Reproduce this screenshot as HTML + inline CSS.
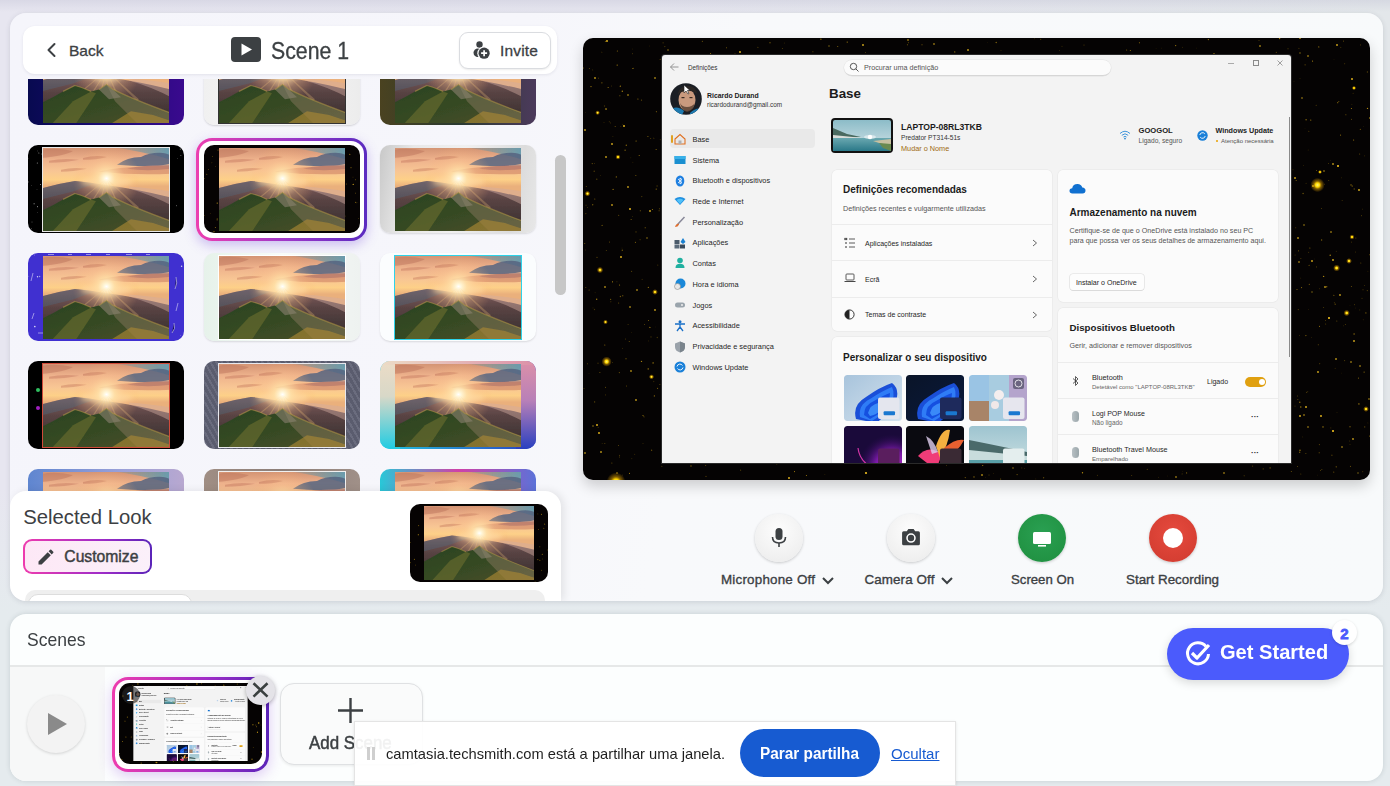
<!DOCTYPE html>
<html><head><meta charset="utf-8">
<style>
*{box-sizing:border-box;margin:0;padding:0}
html,body{width:1390px;height:786px;overflow:hidden}
body{font-family:"Liberation Sans",sans-serif;background:linear-gradient(180deg,rgba(190,190,210,.35) 0px,rgba(190,190,210,0) 12px),linear-gradient(180deg,rgba(230,237,240,0) 0%,rgba(230,237,240,0) 62%,#e5ebee 78%),linear-gradient(90deg,#e7e6f0 0%,#e6e6ef 45%,#e3e7ea 100%);position:relative;color:#3c4043}
.abs{position:absolute}
#main{position:absolute;left:10px;top:13px;width:1373px;height:588px;border-radius:16px;background:linear-gradient(100deg,#f5f5fb 0%,#f6f6fb 35%,#f8f9fb 50%,#f8fafb 100%);box-shadow:0 1px 5px rgba(60,70,90,.16)}
#hdr{position:absolute;left:23px;top:26px;width:534px;height:48px;border-radius:12px;background:#fff;box-shadow:0 1px 3px rgba(60,60,90,.10)}
#grid{position:absolute;left:10px;top:79px;width:552px;height:412px;overflow:hidden}
.th{position:absolute;width:156px;height:88px;border-radius:10px;overflow:hidden}
.th svg.img{position:absolute;left:15px;top:2.5px;width:126px;height:83px}
#scroll{position:absolute;left:555px;top:155px;width:11px;height:140px;border-radius:6px;background:#c7c7c7}
#sel{position:absolute;left:10px;top:491px;width:551px;height:110px;border-radius:16px 16px 0 16px;background:#fff;box-shadow:3px 0 9px rgba(0,0,0,.09)}
#frame{position:absolute;left:583px;top:38px;width:787px;height:442px;border-radius:10px;background:#050303;overflow:hidden;box-shadow:0 6px 14px rgba(0,0,0,.18)}
.ctl{position:absolute;width:48px;height:48px;border-radius:50%}
.lbl{position:absolute;font-size:13px;color:#3c4043;white-space:nowrap;-webkit-text-stroke:0.35px #3c4043}
#scenes{position:absolute;left:10px;top:614px;width:1373px;height:167px;border-radius:16px;background:#fcfefe;box-shadow:0 0 5px rgba(40,60,70,.16);overflow:hidden}
.mini #win div,.mini div{font-weight:bold !important}
</style></head><body>
<svg width="0" height="0" style="position:absolute">
<defs>
<filter id="soft" x="-5%" y="-5%" width="110%" height="110%"><feGaussianBlur stdDeviation="0.5"/></filter>
<filter id="soft2" x="-30%" y="-50%" width="160%" height="200%"><feGaussianBlur stdDeviation="2.5"/></filter>
<linearGradient id="gsky" x1="0" y1="0" x2="0" y2="1">
<stop offset="0" stop-color="#d49474"/><stop offset="0.14" stop-color="#eeb28c"/><stop offset="0.28" stop-color="#f8c694"/><stop offset="0.38" stop-color="#fdd088"/><stop offset="0.46" stop-color="#eab07c"/></linearGradient>
<radialGradient id="gsun" cx="0.5" cy="0.5" r="0.5"><stop offset="0" stop-color="#ffffff"/><stop offset="0.08" stop-color="#fff6d8"/><stop offset="0.25" stop-color="#ffe0a8" stop-opacity="0.8"/><stop offset="0.55" stop-color="#ffc890" stop-opacity="0.3"/><stop offset="1" stop-color="#ffb070" stop-opacity="0"/></radialGradient>
<linearGradient id="gfar" x1="0" y1="0" x2="0" y2="1"><stop offset="0" stop-color="#846060"/><stop offset="0.35" stop-color="#5a4444"/><stop offset="1" stop-color="#302a2a"/></linearGradient>
<linearGradient id="gfg" x1="0" y1="0" x2="1" y2="1"><stop offset="0" stop-color="#2a4222"/><stop offset="0.5" stop-color="#364a24"/><stop offset="1" stop-color="#50502a"/></linearGradient>
<linearGradient id="gtl" x1="0" y1="0" x2="1" y2="0"><stop offset="0" stop-color="#4f8aa0" stop-opacity="0"/><stop offset="1" stop-color="#5a9db5" stop-opacity="0.9"/></linearGradient>
<symbol id="sunset" viewBox="0 0 126 84" preserveAspectRatio="none">
<rect width="126" height="84" fill="url(#gsky)"/>
<g filter="url(#soft)">
<path d="M60 -2H128V12Q100 3 60 -2Z" fill="url(#gtl)"/>
<path d="M74 17Q84 9 98 9Q108 4 120 5Q126 6 128 8V16Q110 20 74 17Z" fill="#566480" opacity="0.85"/>
<path d="M84 21Q100 17 128 17V21Q104 24 84 21Z" fill="#8a6a78" opacity="0.5"/>
<path d="M-2 2Q12 -1 30 3Q22 8 -2 10Z" fill="#b86e58" opacity="0.45"/>
<path d="M6 13Q20 10 36 12Q22 15 6 15Z" fill="#c47860" opacity="0.45"/>
<path d="M40 10Q52 7 64 9Q54 12 40 12Z" fill="#b86c56" opacity="0.45"/>
<path d="M56 24Q80 18 128 18V26Q94 28 56 24Z" fill="#c06a52" opacity="0.45"/>
<path d="M18 22Q30 19 44 21Q30 24 18 24Z" fill="#c07458" opacity="0.4"/>
</g>
<g filter="url(#soft)">
<path d="M-2 41Q16 36 32 33.5Q48 35 63 37.5Q90 41 128 50V86H-2Z" fill="url(#gfar)"/>
<path d="M-2 41Q16 36 32 33.5Q44 34.5 52 36L30 44L-2 52Z" fill="#50687c" opacity="0.4"/>
<path d="M86 39Q110 41 128 44V58Q110 48 86 41Z" fill="#d0aaa0" opacity="0.45"/>
</g>
<g filter="url(#soft2)"><ellipse cx="63.5" cy="34" rx="26" ry="4" fill="#ffe0a8" opacity="0.8"/></g>
<circle cx="63.5" cy="31" r="34" fill="url(#gsun)"/>
<path d="M63.5 31L40 66L43 66Z M63.5 31L52 68L55 68Z M63.5 31L64 70L67 70Z M63.5 31L78 68L81 67Z M63.5 31L94 62L96 60Z M63.5 31L30 58L31 60Z" fill="#ffcc80" opacity="0.25"/>
<g filter="url(#soft)">
<path d="M-2 64Q10 58 20 52L32 46Q40 48 48 52L56 50L63.5 45L70 50Q90 60 128 74V86H-2Z" fill="url(#gfg)"/>
<path d="M63.5 45L70 50Q90 60 128 74V86L96 86L72 62Z" fill="#7e7258" opacity="0.55"/>
<path d="M56 50L63.5 45L70 50L78 58L66 60Z" fill="#8a8270" opacity="0.6"/>
<path d="M8 86L30 62L48 52L53 54L32 86Z" fill="#8a8232" opacity="0.4"/>
<path d="M66 86L88 72L110 76L128 82V86Z" fill="#a88634" opacity="0.65"/>
<path d="M20 52L32 46Q40 48 48 52M56 50L63.5 45L70 50Q90 60 128 74" fill="none" stroke="#c0a048" stroke-width="1.2" opacity="0.5"/>
</g>
</symbol>
</defs>
</svg>
<div id="main"></div><div class="abs" style="left:10px;top:13px;width:1373px;height:588px;border-radius:16px;overflow:hidden"><div class="abs" style="left:-10px;top:-13px;width:1390px;height:786px"><div id="hdr"></div>
<svg class="abs" style="left:44.5px;top:42px" width="14" height="16" viewBox="0 0 14 16"><path d="M9.5 2L3.5 8L9.5 14" fill="none" stroke="#3c4043" stroke-width="2" stroke-linecap="round" stroke-linejoin="round"/></svg>
<div class="abs" style="left:69px;top:42.5px;font-size:15.55px;line-height:1;font-weight:normal;color:#3c4043;white-space:nowrap;-webkit-text-stroke:0.3px #3c4043;">Back</div>
<div class="abs" style="left:231px;top:37px;width:30px;height:25px;border-radius:4px;background:#3c4043"></div>
<svg class="abs" style="left:231px;top:37px" width="30" height="25" viewBox="0 0 30 25"><path d="M10.5 6.5L21 12.5L10.5 18.5Z" fill="#fff"/></svg>
<div class="abs" style="left:270.5px;top:39.8px;font-size:23.00px;line-height:1;font-weight:normal;color:#3c4043;white-space:nowrap;transform:scaleX(0.925);transform-origin:0 0;-webkit-text-stroke:0.3px #3c4043;">Scene 1</div>
<div class="abs" style="left:459px;top:32px;width:92px;height:37px;border-radius:9px;border:1px solid #dadce0;background:#fff;box-shadow:0 1px 2px rgba(0,0,0,.08)"></div>
<svg class="abs" style="left:470px;top:40px" width="20" height="20" viewBox="0 0 20 20"><circle cx="9.5" cy="4.5" r="3.2" fill="#3c4043"/><circle cx="7.8" cy="12.8" r="4.3" fill="#3c4043"/><circle cx="14.1" cy="13.2" r="6.8" fill="#fcfcfd"/><circle cx="14.1" cy="13.2" r="5.6" fill="#3c4043"/><path d="M14.1 10.2V16.2M11.1 13.2H17.1" stroke="#fff" stroke-width="1.7"/></svg>
<div class="abs" style="left:500px;top:42.6px;font-size:15.5px;line-height:1;font-weight:normal;color:#3c4043;white-space:nowrap;-webkit-text-stroke:0.3px #3c4043;letter-spacing:0.15px;">Invite</div>
<div id="grid"><div class="th" style="left:18px;top:-42px;background:linear-gradient(90deg,#080a50,#1c0a78 55%,#3a0a8e);"><svg class="img" viewBox="0 0 126 84" preserveAspectRatio="none"><use href="#sunset"/></svg></div><div class="th" style="left:194px;top:-42px;background:linear-gradient(90deg,#f0f0f0,#fafafa 50%,#ececec);box-shadow:0 1px 2px rgba(0,0,0,.15);"><div class="abs" style="left:14px;top:1.5px;width:128px;height:85px;background:#333"></div><svg class="img" viewBox="0 0 126 84" preserveAspectRatio="none"><use href="#sunset"/></svg></div><div class="th" style="left:370px;top:-42px;background:linear-gradient(90deg,#4a4220,#2a3a30 50%,#4c3a5c);"><svg class="img" viewBox="0 0 126 84" preserveAspectRatio="none"><use href="#sunset"/></svg></div><div class="th" style="left:18px;top:66px;background:#000;"><svg class="abs" style="left:0;top:0" width="156" height="88"><circle cx="9.0" cy="44.7" r="0.31" fill="#fff" opacity="0.66"/><circle cx="10.9" cy="8.0" r="0.43" fill="#fff" opacity="0.90"/><circle cx="152.3" cy="4.1" r="0.56" fill="#fff" opacity="0.57"/><circle cx="9.3" cy="18.1" r="0.50" fill="#fff" opacity="0.66"/><circle cx="152.9" cy="10.4" r="0.43" fill="#fff" opacity="0.85"/><circle cx="6.1" cy="58.8" r="0.53" fill="#fff" opacity="0.74"/><circle cx="9.5" cy="61.7" r="0.49" fill="#fff" opacity="1.00"/><circle cx="3.5" cy="40.6" r="0.35" fill="#fff" opacity="0.47"/><circle cx="9.2" cy="67.6" r="0.34" fill="#fff" opacity="0.55"/><circle cx="12.6" cy="39.5" r="0.46" fill="#fff" opacity="0.93"/><circle cx="149.4" cy="13.3" r="0.35" fill="#fff" opacity="0.54"/><circle cx="0.6" cy="36.9" r="0.41" fill="#fff" opacity="0.74"/><circle cx="148.7" cy="60.8" r="0.45" fill="#fff" opacity="0.77"/><circle cx="9.7" cy="5.9" r="0.36" fill="#fff" opacity="0.50"/><circle cx="0.0" cy="13.3" r="0.33" fill="#fff" opacity="0.62"/><circle cx="4.0" cy="76.9" r="0.48" fill="#fff" opacity="0.49"/><circle cx="13.4" cy="9.0" r="0.40" fill="#fff" opacity="0.56"/><circle cx="3.6" cy="83.7" r="0.46" fill="#fff" opacity="0.49"/></svg><div class="abs" style="left:14px;top:1.5px;width:128px;height:85px;background:#e8e8e8"></div><svg class="img" viewBox="0 0 126 84" preserveAspectRatio="none"><use href="#sunset"/></svg></div><div class="abs" style="left:186px;top:59px;width:171px;height:103px;border-radius:16px;padding:3px;background:linear-gradient(90deg,#ec3fb0,#9b37c8 55%,#5b2bc0);box-shadow:0 4px 12px rgba(120,80,220,.35)"><div style="width:100%;height:100%;border-radius:13px;background:#fff"></div></div><div class="th" style="left:194px;top:66px;background:#060303;"><svg class="abs" style="left:0;top:0" width="156" height="88"><circle cx="4.4" cy="24.6" r="0.38" fill="#e0b020" opacity="0.82"/><circle cx="149.2" cy="39.4" r="0.58" fill="#e0b020" opacity="0.99"/><circle cx="149.0" cy="32.1" r="0.37" fill="#e0b020" opacity="0.54"/><circle cx="13.2" cy="58.1" r="0.57" fill="#e0b020" opacity="0.87"/><circle cx="151.6" cy="34.8" r="0.42" fill="#e0b020" opacity="0.97"/><circle cx="141.2" cy="71.0" r="0.34" fill="#e0b020" opacity="0.90"/><circle cx="152.9" cy="57.8" r="0.41" fill="#e0b020" opacity="0.73"/><circle cx="151.5" cy="57.2" r="0.46" fill="#e0b020" opacity="0.96"/><circle cx="0.6" cy="70.3" r="0.35" fill="#e0b020" opacity="0.68"/><circle cx="142.3" cy="39.0" r="0.48" fill="#e0b020" opacity="0.70"/><circle cx="147.0" cy="22.8" r="0.47" fill="#e0b020" opacity="0.97"/><circle cx="11.3" cy="21.2" r="0.32" fill="#e0b020" opacity="0.80"/><circle cx="154.4" cy="73.3" r="0.35" fill="#e0b020" opacity="0.66"/><circle cx="2.8" cy="29.2" r="0.49" fill="#e0b020" opacity="0.71"/><circle cx="10.0" cy="86.7" r="0.54" fill="#e0b020" opacity="0.98"/><circle cx="6.2" cy="68.6" r="0.38" fill="#e0b020" opacity="0.48"/><circle cx="14.0" cy="5.1" r="0.51" fill="#e0b020" opacity="0.66"/><circle cx="11.3" cy="82.6" r="0.49" fill="#e0b020" opacity="0.88"/><circle cx="13.1" cy="75.3" r="0.32" fill="#e0b020" opacity="0.92"/><circle cx="7.9" cy="17.8" r="0.39" fill="#e0b020" opacity="0.58"/><circle cx="145.8" cy="9.4" r="0.55" fill="#e0b020" opacity="0.66"/><circle cx="8.5" cy="11.4" r="0.32" fill="#e0b020" opacity="0.84"/><circle cx="13.2" cy="74.0" r="0.56" fill="#e0b020" opacity="0.80"/><circle cx="151.7" cy="48.1" r="0.37" fill="#e0b020" opacity="0.98"/><circle cx="0.2" cy="33.6" r="0.44" fill="#e0b020" opacity="0.70"/></svg><svg class="img" viewBox="0 0 126 84" preserveAspectRatio="none"><use href="#sunset"/></svg></div><div class="th" style="left:370px;top:66px;background:linear-gradient(100deg,#c8c8c8,#e8e8e8 20%,#f0f0f0 50%,#dcdcdc 85%,#e8e8e8);box-shadow:0 1px 2px rgba(0,0,0,.12);"><svg class="img" viewBox="0 0 126 84" preserveAspectRatio="none"><use href="#sunset"/></svg></div><div class="th" style="left:18px;top:174px;background:#4030d0;"><svg class="abs" style="left:0;top:0" width="156" height="88"><circle cx="0.8" cy="23.2" r="0.35" fill="#fff" opacity="0.64"/><circle cx="6.5" cy="2.0" r="0.48" fill="#fff" opacity="0.54"/><circle cx="153.6" cy="13.2" r="0.73" fill="#fff" opacity="0.79"/><circle cx="6.8" cy="73.5" r="0.84" fill="#fff" opacity="0.78"/><circle cx="11.6" cy="23.4" r="0.74" fill="#fff" opacity="0.52"/><circle cx="9.5" cy="23.7" r="0.70" fill="#fff" opacity="0.82"/><circle cx="152.6" cy="82.4" r="0.31" fill="#fff" opacity="0.68"/><path d="M20 1.5H26M40 1.5H44M58 1.5H63M78 1.5H82M98 1.5H104M118 1.5H122M5 20L3 28M148 24Q150 30 147 36M150 50L148 58M146 70Q148 76 144 80M6 60L4 66M10 80H16" stroke="#fff" stroke-width="0.8" opacity="0.6"/></svg><svg class="img" viewBox="0 0 126 84" preserveAspectRatio="none"><use href="#sunset"/></svg></div><div class="th" style="left:194px;top:174px;background:linear-gradient(90deg,#e6f2ea,#f8fbf9 50%,#eef2f0);box-shadow:0 1px 2px rgba(0,0,0,.12);"><div class="abs" style="left:14px;top:1.5px;width:128px;height:85px;background:#fff"></div><svg class="img" viewBox="0 0 126 84" preserveAspectRatio="none"><use href="#sunset"/></svg></div><div class="th" style="left:370px;top:174px;background:#fbfdfe;box-shadow:0 1px 2px rgba(0,0,0,.12);"><div class="abs" style="left:14px;top:1.5px;width:128px;height:85px;background:#2ed3ea"></div><svg class="img" viewBox="0 0 126 84" preserveAspectRatio="none"><use href="#sunset"/></svg></div><div class="th" style="left:18px;top:282px;background:#000;"><div class="abs" style="left:8px;top:27px;width:4px;height:4px;border-radius:2px;background:#30c060"></div><div class="abs" style="left:8px;top:45px;width:4px;height:4px;border-radius:2px;background:#a020c0"></div><div class="abs" style="left:14px;top:1.5px;width:128px;height:85px;background:#d04a3a"></div><svg class="img" viewBox="0 0 126 84" preserveAspectRatio="none"><use href="#sunset"/></svg></div><div class="th" style="left:194px;top:282px;background:repeating-linear-gradient(60deg,#5a5c6e 0 3px,#6a6c7e 3px 5px);"><div class="abs" style="left:14px;top:1.5px;width:128px;height:85px;background:#e8e8ee"></div><svg class="img" viewBox="0 0 126 84" preserveAspectRatio="none"><use href="#sunset"/></svg></div><div class="th" style="left:370px;top:282px;background:linear-gradient(90deg,#22c8e0,#2a40c0);"><div class="abs" style="left:0;top:0;width:20px;height:88px;background:linear-gradient(180deg,#ecdcc6 0%,#d8d8c8 40%,#20cce2 100%)"></div><div class="abs" style="left:136px;top:0;width:20px;height:88px;background:linear-gradient(180deg,#dc90a8 0%,#b880b8 45%,#2a40c0 100%)"></div><div class="abs" style="left:0;top:0;width:156px;height:4px;background:linear-gradient(90deg,#ecdcc6,#dc90a8)"></div><svg class="img" viewBox="0 0 126 84" preserveAspectRatio="none"><use href="#sunset"/></svg></div><div class="th" style="left:18px;top:390px;background:linear-gradient(90deg,#5f86d0,#9aa0d8 60%,#b8a8d0);"><svg class="img" viewBox="0 0 126 84" preserveAspectRatio="none"><use href="#sunset"/></svg></div><div class="th" style="left:194px;top:390px;background:linear-gradient(90deg,#a08e84,#8c7e78 50%,#a09088);"><div class="abs" style="left:14px;top:1.5px;width:128px;height:85px;background:#f0f0f0"></div><svg class="img" viewBox="0 0 126 84" preserveAspectRatio="none"><use href="#sunset"/></svg></div><div class="th" style="left:370px;top:390px;background:linear-gradient(90deg,#28c8d8,#d040a8 50%,#5c72d8);"><svg class="img" viewBox="0 0 126 84" preserveAspectRatio="none"><use href="#sunset"/></svg></div></div><div id="scroll"></div><div id="sel"></div>
<div class="abs" style="left:23.2px;top:506.6px;font-size:20.3px;line-height:1;font-weight:normal;color:#3c4043;white-space:nowrap;">Selected Look</div>
<div class="abs" style="left:23px;top:539px;width:129px;height:35px;border-radius:9px;padding:2px;background:linear-gradient(90deg,#ee3cae,#a02cc8 60%,#5a24b8)"><div style="width:100%;height:100%;border-radius:7px;background:linear-gradient(90deg,#fde8f6,#fbf0fa)"></div></div>
<svg class="abs" style="left:36px;top:547px" width="20" height="20" viewBox="0 0 24 24"><path d="M3 17.25V21h3.75L17.81 9.94l-3.75-3.75L3 17.25zM20.71 7.04a1 1 0 0 0 0-1.41l-2.34-2.34a1 1 0 0 0-1.41 0l-1.83 1.83 3.75 3.75 1.83-1.83z" fill="#3c4043"/></svg>
<div class="abs" style="left:64.3px;top:549.2px;font-size:15.7px;line-height:1;font-weight:normal;color:#3c4043;white-space:nowrap;-webkit-text-stroke:0.45px #3c4043;">Customize</div>
<div class="abs" style="left:25px;top:590px;width:520px;height:20px;border-radius:10px;background:#efefef"></div>
<div class="abs" style="left:28px;top:594px;width:164px;height:20px;border-radius:10px;background:#fff;border:1px solid #ddd"></div>
<div class="abs" style="left:410px;top:504px;width:138px;height:78px;border-radius:10px;background:#060303;overflow:hidden"><svg class="abs" style="left:0;top:0" width="138" height="78"><circle cx="131.5" cy="10.3" r="0.55" fill="#d8a818" opacity="0.71"/><circle cx="0.5" cy="38.4" r="0.44" fill="#d8a818" opacity="0.58"/><circle cx="0.2" cy="58.6" r="0.55" fill="#d8a818" opacity="0.47"/><circle cx="127.8" cy="55.6" r="0.57" fill="#d8a818" opacity="0.57"/><circle cx="137.8" cy="46.0" r="0.41" fill="#d8a818" opacity="0.66"/><circle cx="129.8" cy="42.8" r="0.52" fill="#d8a818" opacity="0.43"/><circle cx="127.9" cy="9.9" r="0.44" fill="#d8a818" opacity="0.61"/><circle cx="134.7" cy="20.3" r="0.50" fill="#d8a818" opacity="0.58"/><circle cx="125.1" cy="77.7" r="0.43" fill="#d8a818" opacity="0.48"/><circle cx="8.6" cy="21.6" r="0.59" fill="#d8a818" opacity="0.48"/><circle cx="131.6" cy="66.2" r="0.56" fill="#d8a818" opacity="0.41"/><circle cx="4.4" cy="55.3" r="0.57" fill="#d8a818" opacity="0.68"/><circle cx="134.2" cy="19.4" r="0.33" fill="#d8a818" opacity="0.49"/><circle cx="129.9" cy="56.3" r="0.49" fill="#d8a818" opacity="0.86"/><circle cx="5.5" cy="61.0" r="0.37" fill="#d8a818" opacity="0.95"/><circle cx="132.3" cy="50.3" r="0.57" fill="#d8a818" opacity="0.69"/><circle cx="132.6" cy="55.0" r="0.39" fill="#d8a818" opacity="0.41"/><circle cx="133.8" cy="24.3" r="0.55" fill="#d8a818" opacity="0.54"/><circle cx="8.3" cy="30.7" r="0.57" fill="#d8a818" opacity="0.93"/><circle cx="128.6" cy="25.7" r="0.36" fill="#d8a818" opacity="0.96"/></svg><svg class="abs" style="left:14px;top:2px;width:110px;height:74px" viewBox="0 0 126 84" preserveAspectRatio="none"><use href="#sunset"/></svg></div><div id="frame"><svg class="abs" style="left:0;top:0" width="787" height="442"><defs><radialGradient id="glow"><stop offset="0" stop-color="#fff680"/><stop offset="0.3" stop-color="#ffd800"/><stop offset="0.55" stop-color="#f0b000" stop-opacity="0.5"/><stop offset="1" stop-color="#ffb000" stop-opacity="0"/></radialGradient></defs><circle cx="356.0" cy="247.4" r="0.55" fill="#e8b418" opacity="0.44"/><circle cx="672.9" cy="83.9" r="0.6" fill="#e8b418" opacity="0.46"/><circle cx="483.2" cy="82.3" r="0.55" fill="#e8b418" opacity="0.35"/><circle cx="71.4" cy="357.9" r="0.7" fill="#e8b418" opacity="0.56"/><circle cx="468.6" cy="175.1" r="0.55" fill="#e8b418" opacity="0.58"/><circle cx="484.4" cy="69.6" r="0.4" fill="#e8b418" opacity="0.69"/><circle cx="49.7" cy="15.8" r="0.45" fill="#e8b418" opacity="0.54"/><circle cx="612.4" cy="144.2" r="0.6" fill="#e8b418" opacity="0.70"/><circle cx="408.6" cy="283.0" r="0.55" fill="#e8b418" opacity="0.15"/><circle cx="66.9" cy="289.4" r="0.55" fill="#e8b418" opacity="0.80"/><circle cx="783.6" cy="371.4" r="0.7" fill="#e8b418" opacity="0.32"/><circle cx="596.5" cy="226.7" r="0.4" fill="#e8b418" opacity="0.20"/><circle cx="603.1" cy="177.0" r="0.5" fill="#e8b418" opacity="0.40"/><circle cx="754.0" cy="374.5" r="0.4" fill="#e8b418" opacity="0.29"/><circle cx="729.6" cy="23.1" r="0.55" fill="#e8b418" opacity="0.79"/><circle cx="312.8" cy="32.3" r="0.7" fill="#e8b418" opacity="0.28"/><circle cx="531.2" cy="148.9" r="0.5" fill="#e8b418" opacity="0.37"/><circle cx="758.7" cy="335.1" r="0.4" fill="#e8b418" opacity="0.24"/><circle cx="556.4" cy="4.8" r="0.55" fill="#e8b418" opacity="0.67"/><circle cx="139.8" cy="247.2" r="0.55" fill="#e8b418" opacity="0.48"/><circle cx="775.4" cy="340.1" r="0.55" fill="#e8b418" opacity="0.57"/><circle cx="91.7" cy="186.0" r="0.45" fill="#e8b418" opacity="0.15"/><circle cx="680.2" cy="430.9" r="0.6" fill="#e8b418" opacity="0.35"/><circle cx="696.4" cy="93.1" r="0.55" fill="#e8b418" opacity="0.80"/><circle cx="473.8" cy="255.0" r="0.4" fill="#e8b418" opacity="0.79"/><circle cx="167.8" cy="114.2" r="0.6" fill="#e8b418" opacity="0.36"/><circle cx="233.2" cy="32.4" r="0.4" fill="#e8b418" opacity="0.29"/><circle cx="501.0" cy="6.9" r="0.5" fill="#e8b418" opacity="0.39"/><circle cx="356.7" cy="423.9" r="0.55" fill="#e8b418" opacity="0.69"/><circle cx="106.8" cy="170.7" r="0.7" fill="#e8b418" opacity="0.25"/><circle cx="714.9" cy="361.5" r="0.45" fill="#e8b418" opacity="0.62"/><circle cx="124.7" cy="278.0" r="0.6" fill="#e8b418" opacity="0.28"/><circle cx="747.8" cy="389.9" r="0.6" fill="#e8b418" opacity="0.20"/><circle cx="37.3" cy="48.2" r="0.6" fill="#e8b418" opacity="0.78"/><circle cx="187.6" cy="311.4" r="0.5" fill="#e8b418" opacity="0.42"/><circle cx="712.1" cy="217.0" r="0.6" fill="#e8b418" opacity="0.26"/><circle cx="566.9" cy="30.4" r="0.45" fill="#e8b418" opacity="0.46"/><circle cx="514.3" cy="272.2" r="0.4" fill="#e8b418" opacity="0.33"/><circle cx="722.0" cy="90.2" r="0.4" fill="#e8b418" opacity="0.19"/><circle cx="323.8" cy="110.1" r="0.4" fill="#e8b418" opacity="0.26"/><circle cx="290.2" cy="252.9" r="0.45" fill="#e8b418" opacity="0.21"/><circle cx="108.9" cy="199.1" r="0.5" fill="#e8b418" opacity="0.58"/><circle cx="544.0" cy="258.3" r="0.45" fill="#e8b418" opacity="0.53"/><circle cx="726.9" cy="209.9" r="0.5" fill="#e8b418" opacity="0.61"/><circle cx="757.7" cy="9.4" r="0.7" fill="#e8b418" opacity="0.20"/><circle cx="52.9" cy="137.5" r="0.45" fill="#e8b418" opacity="0.80"/><circle cx="59.2" cy="241.4" r="0.7" fill="#e8b418" opacity="0.18"/><circle cx="736.8" cy="325.8" r="0.45" fill="#e8b418" opacity="0.67"/><circle cx="720.1" cy="155.5" r="0.7" fill="#e8b418" opacity="0.46"/><circle cx="61.1" cy="378.9" r="0.4" fill="#e8b418" opacity="0.71"/><circle cx="450.8" cy="276.2" r="0.55" fill="#e8b418" opacity="0.40"/><circle cx="9.8" cy="31.9" r="0.4" fill="#e8b418" opacity="0.57"/><circle cx="781.7" cy="388.9" r="0.7" fill="#e8b418" opacity="0.36"/><circle cx="735.3" cy="306.8" r="0.55" fill="#e8b418" opacity="0.44"/><circle cx="659.8" cy="37.0" r="0.6" fill="#e8b418" opacity="0.17"/><circle cx="473.2" cy="212.6" r="0.45" fill="#e8b418" opacity="0.77"/><circle cx="88.8" cy="344.7" r="0.7" fill="#e8b418" opacity="0.75"/><circle cx="201.3" cy="5.0" r="0.5" fill="#e8b418" opacity="0.24"/><circle cx="481.5" cy="229.1" r="0.5" fill="#e8b418" opacity="0.58"/><circle cx="347.8" cy="394.1" r="0.5" fill="#e8b418" opacity="0.41"/><circle cx="197.2" cy="280.3" r="0.45" fill="#e8b418" opacity="0.72"/><circle cx="302.5" cy="257.7" r="0.5" fill="#e8b418" opacity="0.29"/><circle cx="105.9" cy="155.0" r="0.4" fill="#e8b418" opacity="0.61"/><circle cx="747.7" cy="122.3" r="0.45" fill="#e8b418" opacity="0.22"/><circle cx="371.0" cy="409.2" r="0.55" fill="#e8b418" opacity="0.40"/><circle cx="409.2" cy="297.1" r="0.7" fill="#e8b418" opacity="0.70"/><circle cx="772.9" cy="200.0" r="0.4" fill="#e8b418" opacity="0.69"/><circle cx="218.9" cy="268.5" r="0.7" fill="#e8b418" opacity="0.61"/><circle cx="449.0" cy="136.6" r="0.6" fill="#e8b418" opacity="0.16"/><circle cx="106.9" cy="201.0" r="0.4" fill="#e8b418" opacity="0.65"/><circle cx="209.7" cy="344.4" r="0.4" fill="#e8b418" opacity="0.79"/><circle cx="90.7" cy="48.2" r="0.6" fill="#e8b418" opacity="0.58"/><circle cx="635.4" cy="423.6" r="0.7" fill="#e8b418" opacity="0.28"/><circle cx="648.4" cy="113.2" r="0.7" fill="#e8b418" opacity="0.16"/><circle cx="371.6" cy="315.7" r="0.45" fill="#e8b418" opacity="0.30"/><circle cx="612.7" cy="238.5" r="0.6" fill="#e8b418" opacity="0.48"/><circle cx="784.5" cy="70.4" r="0.7" fill="#e8b418" opacity="0.74"/><circle cx="68.6" cy="412.2" r="0.7" fill="#e8b418" opacity="0.40"/><circle cx="354.5" cy="87.0" r="0.4" fill="#e8b418" opacity="0.39"/><circle cx="447.7" cy="388.7" r="0.5" fill="#e8b418" opacity="0.45"/><circle cx="512.6" cy="90.6" r="0.7" fill="#e8b418" opacity="0.71"/><circle cx="628.3" cy="408.5" r="0.4" fill="#e8b418" opacity="0.29"/><circle cx="708.3" cy="433.4" r="0.5" fill="#e8b418" opacity="0.50"/><circle cx="622.3" cy="141.6" r="0.7" fill="#e8b418" opacity="0.71"/><circle cx="274.3" cy="36.6" r="0.55" fill="#e8b418" opacity="0.37"/><circle cx="331.7" cy="121.7" r="0.4" fill="#e8b418" opacity="0.29"/><circle cx="682.8" cy="189.6" r="0.4" fill="#e8b418" opacity="0.26"/><circle cx="263.6" cy="348.3" r="0.45" fill="#e8b418" opacity="0.46"/><circle cx="786.9" cy="398.1" r="0.6" fill="#e8b418" opacity="0.70"/><circle cx="542.5" cy="418.0" r="0.55" fill="#e8b418" opacity="0.53"/><circle cx="542.3" cy="335.0" r="0.55" fill="#e8b418" opacity="0.49"/><circle cx="228.4" cy="322.1" r="0.7" fill="#e8b418" opacity="0.26"/><circle cx="404.7" cy="401.0" r="0.5" fill="#e8b418" opacity="0.35"/><circle cx="300.0" cy="373.6" r="0.6" fill="#e8b418" opacity="0.29"/><circle cx="669.6" cy="428.1" r="0.6" fill="#e8b418" opacity="0.33"/><circle cx="391.6" cy="181.7" r="0.4" fill="#e8b418" opacity="0.48"/><circle cx="476.3" cy="12.3" r="0.4" fill="#e8b418" opacity="0.49"/><circle cx="315.3" cy="354.1" r="0.6" fill="#e8b418" opacity="0.23"/><circle cx="73.4" cy="73.7" r="0.6" fill="#e8b418" opacity="0.45"/><circle cx="724.7" cy="353.8" r="0.55" fill="#e8b418" opacity="0.32"/><circle cx="372.4" cy="56.1" r="0.55" fill="#e8b418" opacity="0.74"/><circle cx="736.4" cy="406.6" r="0.6" fill="#e8b418" opacity="0.36"/><circle cx="150.7" cy="273.1" r="0.5" fill="#e8b418" opacity="0.23"/><circle cx="613.3" cy="10.1" r="0.45" fill="#e8b418" opacity="0.25"/><circle cx="9.3" cy="125.6" r="0.7" fill="#e8b418" opacity="0.38"/><circle cx="487.8" cy="46.4" r="0.7" fill="#e8b418" opacity="0.53"/><circle cx="670.5" cy="275.6" r="0.7" fill="#e8b418" opacity="0.28"/><circle cx="417.4" cy="193.1" r="0.55" fill="#e8b418" opacity="0.56"/><circle cx="649.4" cy="272.2" r="0.6" fill="#e8b418" opacity="0.28"/><circle cx="496.8" cy="282.2" r="0.6" fill="#e8b418" opacity="0.29"/><circle cx="427.3" cy="259.3" r="0.45" fill="#e8b418" opacity="0.30"/><circle cx="583.0" cy="358.2" r="0.45" fill="#e8b418" opacity="0.36"/><circle cx="247.9" cy="407.9" r="0.45" fill="#e8b418" opacity="0.66"/><circle cx="153.1" cy="42.8" r="0.45" fill="#e8b418" opacity="0.24"/><circle cx="69.4" cy="171.5" r="0.55" fill="#e8b418" opacity="0.69"/><circle cx="331.8" cy="349.2" r="0.45" fill="#e8b418" opacity="0.28"/><circle cx="494.2" cy="353.1" r="0.4" fill="#e8b418" opacity="0.28"/><circle cx="537.0" cy="402.8" r="0.5" fill="#e8b418" opacity="0.23"/><circle cx="398.0" cy="335.1" r="0.6" fill="#e8b418" opacity="0.80"/><circle cx="655.5" cy="354.9" r="0.55" fill="#e8b418" opacity="0.22"/><circle cx="29.5" cy="243.8" r="0.6" fill="#e8b418" opacity="0.74"/><circle cx="378.8" cy="83.8" r="0.4" fill="#e8b418" opacity="0.28"/><circle cx="661.2" cy="437.7" r="0.7" fill="#e8b418" opacity="0.21"/><circle cx="48.8" cy="420.6" r="0.55" fill="#e8b418" opacity="0.20"/><circle cx="76.1" cy="172.8" r="0.55" fill="#e8b418" opacity="0.48"/><circle cx="338.5" cy="265.6" r="0.4" fill="#e8b418" opacity="0.56"/><circle cx="32.2" cy="88.5" r="0.55" fill="#e8b418" opacity="0.45"/><circle cx="581.9" cy="179.1" r="0.45" fill="#e8b418" opacity="0.54"/><circle cx="74.6" cy="350.2" r="0.5" fill="#e8b418" opacity="0.73"/><circle cx="630.9" cy="311.5" r="0.7" fill="#e8b418" opacity="0.76"/><circle cx="448.3" cy="84.4" r="0.6" fill="#e8b418" opacity="0.79"/><circle cx="633.4" cy="114.2" r="0.4" fill="#e8b418" opacity="0.63"/><circle cx="612.3" cy="360.1" r="0.55" fill="#e8b418" opacity="0.24"/><circle cx="259.6" cy="238.2" r="0.5" fill="#e8b418" opacity="0.65"/><circle cx="602.2" cy="179.3" r="0.7" fill="#e8b418" opacity="0.27"/><circle cx="627.5" cy="133.3" r="0.4" fill="#e8b418" opacity="0.16"/><circle cx="279.9" cy="282.3" r="0.6" fill="#e8b418" opacity="0.18"/><circle cx="214.8" cy="424.9" r="0.5" fill="#e8b418" opacity="0.37"/><circle cx="519.2" cy="251.8" r="0.6" fill="#e8b418" opacity="0.20"/><circle cx="405.1" cy="219.9" r="0.45" fill="#e8b418" opacity="0.61"/><circle cx="599.5" cy="433.2" r="0.4" fill="#e8b418" opacity="0.22"/><circle cx="85.0" cy="104.8" r="0.55" fill="#e8b418" opacity="0.41"/><circle cx="39.7" cy="86.4" r="0.55" fill="#e8b418" opacity="0.16"/><circle cx="203.5" cy="121.9" r="0.5" fill="#e8b418" opacity="0.51"/><circle cx="399.7" cy="427.5" r="0.6" fill="#e8b418" opacity="0.70"/><circle cx="78.4" cy="196.4" r="0.7" fill="#e8b418" opacity="0.20"/><circle cx="470.3" cy="335.6" r="0.4" fill="#e8b418" opacity="0.40"/><circle cx="738.7" cy="170.6" r="0.45" fill="#e8b418" opacity="0.71"/><circle cx="426.5" cy="263.7" r="0.55" fill="#e8b418" opacity="0.76"/><circle cx="331.1" cy="232.8" r="0.6" fill="#e8b418" opacity="0.35"/><circle cx="417.4" cy="213.6" r="0.5" fill="#e8b418" opacity="0.51"/><circle cx="223.1" cy="316.7" r="0.5" fill="#e8b418" opacity="0.17"/><circle cx="607.9" cy="258.9" r="0.7" fill="#e8b418" opacity="0.25"/><circle cx="593.9" cy="172.4" r="0.5" fill="#e8b418" opacity="0.64"/><circle cx="39.5" cy="437.0" r="0.5" fill="#e8b418" opacity="0.20"/><circle cx="712.7" cy="189.8" r="0.55" fill="#e8b418" opacity="0.31"/><circle cx="594.6" cy="20.1" r="0.4" fill="#e8b418" opacity="0.76"/><circle cx="568.8" cy="207.0" r="0.45" fill="#e8b418" opacity="0.54"/><circle cx="90.6" cy="275.9" r="0.55" fill="#e8b418" opacity="0.23"/><circle cx="677.7" cy="157.7" r="0.45" fill="#e8b418" opacity="0.23"/><circle cx="348.5" cy="295.2" r="0.55" fill="#e8b418" opacity="0.54"/><circle cx="503.4" cy="301.4" r="0.5" fill="#e8b418" opacity="0.66"/><circle cx="417.7" cy="441.0" r="0.5" fill="#e8b418" opacity="0.63"/><circle cx="187.6" cy="50.3" r="0.5" fill="#e8b418" opacity="0.66"/><circle cx="491.9" cy="158.8" r="0.5" fill="#e8b418" opacity="0.55"/><circle cx="570.6" cy="309.0" r="0.45" fill="#e8b418" opacity="0.56"/><circle cx="592.9" cy="83.9" r="0.45" fill="#e8b418" opacity="0.48"/><circle cx="513.9" cy="86.6" r="0.7" fill="#e8b418" opacity="0.18"/><circle cx="47.8" cy="119.8" r="0.55" fill="#e8b418" opacity="0.17"/><circle cx="29.9" cy="98.4" r="0.5" fill="#e8b418" opacity="0.20"/><circle cx="68.0" cy="298.9" r="0.6" fill="#e8b418" opacity="0.30"/><circle cx="772.4" cy="213.9" r="0.5" fill="#e8b418" opacity="0.29"/><circle cx="270.5" cy="329.2" r="0.4" fill="#e8b418" opacity="0.67"/><circle cx="352.0" cy="363.3" r="0.45" fill="#e8b418" opacity="0.44"/><circle cx="588.1" cy="172.4" r="0.45" fill="#e8b418" opacity="0.39"/><circle cx="514.4" cy="437.2" r="0.5" fill="#e8b418" opacity="0.34"/><circle cx="597.3" cy="365.2" r="0.45" fill="#e8b418" opacity="0.43"/><circle cx="290.6" cy="42.9" r="0.5" fill="#e8b418" opacity="0.20"/><circle cx="65.3" cy="249.4" r="0.55" fill="#e8b418" opacity="0.68"/><circle cx="364.8" cy="364.0" r="0.4" fill="#e8b418" opacity="0.20"/><circle cx="167.8" cy="292.6" r="0.4" fill="#e8b418" opacity="0.60"/><circle cx="389.4" cy="337.8" r="0.5" fill="#e8b418" opacity="0.33"/><circle cx="112.5" cy="158.1" r="0.7" fill="#e8b418" opacity="0.36"/><circle cx="713.2" cy="142.5" r="0.55" fill="#e8b418" opacity="0.52"/><circle cx="722.9" cy="415.5" r="0.5" fill="#e8b418" opacity="0.43"/><circle cx="632.0" cy="134.7" r="0.5" fill="#e8b418" opacity="0.29"/><circle cx="761.6" cy="322.6" r="0.6" fill="#e8b418" opacity="0.31"/><circle cx="284.7" cy="161.6" r="0.5" fill="#e8b418" opacity="0.59"/><circle cx="460.2" cy="351.9" r="0.7" fill="#e8b418" opacity="0.52"/><circle cx="627.3" cy="238.9" r="0.6" fill="#e8b418" opacity="0.52"/><circle cx="139.0" cy="335.5" r="0.5" fill="#e8b418" opacity="0.68"/><circle cx="174.1" cy="25.5" r="0.45" fill="#e8b418" opacity="0.52"/><circle cx="760.6" cy="287.8" r="0.55" fill="#e8b418" opacity="0.19"/><circle cx="430.3" cy="348.3" r="0.4" fill="#e8b418" opacity="0.37"/><circle cx="215.4" cy="46.6" r="0.5" fill="#e8b418" opacity="0.21"/><circle cx="499.1" cy="63.6" r="0.7" fill="#e8b418" opacity="0.68"/><circle cx="332.2" cy="314.8" r="0.55" fill="#e8b418" opacity="0.65"/><circle cx="410.5" cy="338.0" r="0.55" fill="#e8b418" opacity="0.38"/><circle cx="635.3" cy="147.2" r="0.45" fill="#e8b418" opacity="0.47"/><circle cx="422.9" cy="318.7" r="0.7" fill="#e8b418" opacity="0.55"/><circle cx="36.4" cy="334.6" r="0.7" fill="#e8b418" opacity="0.38"/><circle cx="3.0" cy="167.1" r="0.4" fill="#e8b418" opacity="0.73"/><circle cx="753.8" cy="283.0" r="0.6" fill="#e8b418" opacity="0.39"/><circle cx="8.0" cy="48.6" r="0.55" fill="#e8b418" opacity="0.75"/><circle cx="193.4" cy="71.7" r="0.7" fill="#e8b418" opacity="0.39"/><circle cx="131.9" cy="90.3" r="0.55" fill="#e8b418" opacity="0.49"/><circle cx="215.7" cy="391.7" r="0.55" fill="#e8b418" opacity="0.35"/><circle cx="90.4" cy="286.4" r="0.45" fill="#e8b418" opacity="0.74"/><circle cx="592.7" cy="7.6" r="0.55" fill="#e8b418" opacity="0.74"/><circle cx="28.6" cy="48.0" r="0.45" fill="#e8b418" opacity="0.38"/><circle cx="463.0" cy="265.2" r="0.55" fill="#e8b418" opacity="0.54"/><circle cx="176.3" cy="81.8" r="0.5" fill="#e8b418" opacity="0.41"/><circle cx="716.7" cy="414.3" r="0.7" fill="#e8b418" opacity="0.51"/><circle cx="643.1" cy="211.9" r="0.5" fill="#e8b418" opacity="0.47"/><circle cx="316.9" cy="422.4" r="0.7" fill="#e8b418" opacity="0.51"/><circle cx="753.2" cy="213.3" r="0.45" fill="#e8b418" opacity="0.41"/><circle cx="171.1" cy="59.4" r="0.55" fill="#e8b418" opacity="0.78"/><circle cx="625.4" cy="342.2" r="0.4" fill="#e8b418" opacity="0.58"/><circle cx="187.0" cy="4.8" r="0.55" fill="#e8b418" opacity="0.74"/><circle cx="354.2" cy="109.0" r="0.55" fill="#e8b418" opacity="0.54"/><circle cx="123.8" cy="69.4" r="0.5" fill="#e8b418" opacity="0.24"/><circle cx="714.7" cy="358.0" r="0.45" fill="#e8b418" opacity="0.56"/><circle cx="781.6" cy="117.8" r="0.6" fill="#e8b418" opacity="0.18"/><circle cx="450.1" cy="78.8" r="0.45" fill="#e8b418" opacity="0.68"/><circle cx="665.9" cy="363.4" r="0.4" fill="#e8b418" opacity="0.38"/><circle cx="483.9" cy="233.4" r="0.55" fill="#e8b418" opacity="0.60"/><circle cx="65.2" cy="330.9" r="0.6" fill="#e8b418" opacity="0.71"/><circle cx="238.9" cy="348.9" r="0.55" fill="#e8b418" opacity="0.28"/><circle cx="536.9" cy="345.4" r="0.55" fill="#e8b418" opacity="0.29"/><circle cx="427.6" cy="232.3" r="0.45" fill="#e8b418" opacity="0.77"/><circle cx="758.6" cy="139.7" r="0.55" fill="#e8b418" opacity="0.20"/><circle cx="240.6" cy="206.5" r="0.7" fill="#e8b418" opacity="0.19"/><circle cx="58.5" cy="62.1" r="0.7" fill="#e8b418" opacity="0.41"/><circle cx="363.4" cy="427.4" r="0.4" fill="#e8b418" opacity="0.58"/><circle cx="9.7" cy="166.7" r="0.7" fill="#e8b418" opacity="0.46"/><circle cx="231.0" cy="50.1" r="0.4" fill="#e8b418" opacity="0.71"/><circle cx="664.6" cy="317.9" r="0.6" fill="#e8b418" opacity="0.25"/><circle cx="494.1" cy="414.4" r="0.7" fill="#e8b418" opacity="0.34"/><circle cx="265.5" cy="173.4" r="0.7" fill="#e8b418" opacity="0.21"/><circle cx="148.5" cy="166.4" r="0.4" fill="#e8b418" opacity="0.36"/><circle cx="743.7" cy="248.8" r="0.7" fill="#e8b418" opacity="0.57"/><circle cx="351.7" cy="169.0" r="0.4" fill="#e8b418" opacity="0.24"/><circle cx="74.3" cy="299.5" r="0.7" fill="#e8b418" opacity="0.27"/><circle cx="152.0" cy="16.1" r="0.55" fill="#e8b418" opacity="0.54"/><circle cx="70.9" cy="100.1" r="0.45" fill="#e8b418" opacity="0.79"/><circle cx="341.4" cy="340.9" r="0.5" fill="#e8b418" opacity="0.75"/><circle cx="336.1" cy="226.1" r="0.7" fill="#e8b418" opacity="0.28"/><circle cx="116.5" cy="305.6" r="0.55" fill="#e8b418" opacity="0.37"/><circle cx="324.4" cy="6.8" r="0.55" fill="#e8b418" opacity="0.55"/><circle cx="250.0" cy="348.6" r="0.45" fill="#e8b418" opacity="0.58"/><circle cx="479.0" cy="8.2" r="0.5" fill="#e8b418" opacity="0.27"/><circle cx="241.4" cy="195.0" r="0.6" fill="#e8b418" opacity="0.40"/><circle cx="400.9" cy="348.5" r="0.4" fill="#e8b418" opacity="0.55"/><circle cx="124.6" cy="338.8" r="0.5" fill="#e8b418" opacity="0.51"/><circle cx="277.5" cy="221.2" r="0.45" fill="#e8b418" opacity="0.52"/><circle cx="156.0" cy="412.6" r="0.7" fill="#e8b418" opacity="0.61"/><circle cx="736.6" cy="250.8" r="0.4" fill="#e8b418" opacity="0.56"/><circle cx="155.7" cy="36.8" r="0.45" fill="#e8b418" opacity="0.46"/><circle cx="328.6" cy="147.4" r="0.4" fill="#e8b418" opacity="0.75"/><circle cx="284.3" cy="204.7" r="0.4" fill="#e8b418" opacity="0.44"/><circle cx="574.3" cy="105.5" r="0.6" fill="#e8b418" opacity="0.50"/><circle cx="441.3" cy="247.7" r="0.5" fill="#e8b418" opacity="0.26"/><circle cx="586.9" cy="396.5" r="0.5" fill="#e8b418" opacity="0.54"/><circle cx="96.5" cy="364.5" r="0.5" fill="#e8b418" opacity="0.60"/><circle cx="286.2" cy="335.2" r="0.5" fill="#e8b418" opacity="0.69"/><circle cx="146.0" cy="242.2" r="0.4" fill="#e8b418" opacity="0.45"/><circle cx="317.5" cy="346.0" r="0.7" fill="#e8b418" opacity="0.24"/><circle cx="595.1" cy="374.5" r="0.55" fill="#e8b418" opacity="0.55"/><circle cx="503.9" cy="337.4" r="0.45" fill="#e8b418" opacity="0.28"/><circle cx="368.3" cy="63.2" r="0.55" fill="#e8b418" opacity="0.23"/><circle cx="319.3" cy="148.6" r="0.45" fill="#e8b418" opacity="0.32"/><circle cx="447.0" cy="146.8" r="0.7" fill="#e8b418" opacity="0.66"/><circle cx="567.9" cy="348.1" r="0.55" fill="#e8b418" opacity="0.77"/><circle cx="472.3" cy="207.7" r="0.55" fill="#e8b418" opacity="0.73"/><circle cx="718.6" cy="249.6" r="0.55" fill="#e8b418" opacity="0.64"/><circle cx="382.3" cy="439.6" r="0.7" fill="#e8b418" opacity="0.42"/><circle cx="341.5" cy="250.2" r="0.6" fill="#e8b418" opacity="0.36"/><circle cx="409.8" cy="185.8" r="0.4" fill="#e8b418" opacity="0.36"/><circle cx="43.0" cy="320.7" r="0.55" fill="#e8b418" opacity="0.63"/><circle cx="470.2" cy="332.3" r="0.5" fill="#e8b418" opacity="0.72"/><circle cx="690.2" cy="108.0" r="0.55" fill="#e8b418" opacity="0.31"/><circle cx="687.1" cy="429.9" r="0.55" fill="#e8b418" opacity="0.60"/><circle cx="414.1" cy="105.7" r="0.5" fill="#e8b418" opacity="0.58"/><circle cx="740.0" cy="388.9" r="0.7" fill="#e8b418" opacity="0.78"/><circle cx="523.9" cy="383.0" r="0.55" fill="#e8b418" opacity="0.52"/><circle cx="129.2" cy="287.1" r="0.55" fill="#e8b418" opacity="0.52"/><circle cx="711.0" cy="43.6" r="0.45" fill="#e8b418" opacity="0.23"/><circle cx="423.1" cy="420.3" r="0.4" fill="#e8b418" opacity="0.34"/><circle cx="573.1" cy="10.6" r="0.45" fill="#e8b418" opacity="0.19"/><circle cx="704.5" cy="360.4" r="0.55" fill="#e8b418" opacity="0.24"/><circle cx="544.8" cy="102.0" r="0.5" fill="#e8b418" opacity="0.17"/><circle cx="707.1" cy="136.1" r="0.55" fill="#e8b418" opacity="0.24"/><circle cx="611.2" cy="343.2" r="0.45" fill="#e8b418" opacity="0.28"/><circle cx="676.0" cy="306.1" r="0.4" fill="#e8b418" opacity="0.28"/><circle cx="659.4" cy="156.5" r="0.55" fill="#e8b418" opacity="0.16"/><circle cx="500.0" cy="308.5" r="0.6" fill="#e8b418" opacity="0.28"/><circle cx="497.7" cy="84.6" r="0.4" fill="#e8b418" opacity="0.57"/><circle cx="240.9" cy="361.4" r="0.5" fill="#e8b418" opacity="0.72"/><circle cx="561.2" cy="59.6" r="0.7" fill="#e8b418" opacity="0.77"/><circle cx="613.0" cy="183.5" r="0.45" fill="#e8b418" opacity="0.30"/><circle cx="241.7" cy="314.1" r="0.45" fill="#e8b418" opacity="0.32"/><circle cx="566.8" cy="221.6" r="0.5" fill="#e8b418" opacity="0.66"/><circle cx="293.2" cy="292.6" r="0.4" fill="#e8b418" opacity="0.53"/><circle cx="180.2" cy="133.0" r="0.45" fill="#e8b418" opacity="0.58"/><circle cx="217.9" cy="282.8" r="0.4" fill="#e8b418" opacity="0.45"/><circle cx="60.0" cy="405.4" r="0.4" fill="#e8b418" opacity="0.50"/><circle cx="35.7" cy="265.1" r="0.5" fill="#e8b418" opacity="0.50"/><circle cx="333.3" cy="251.3" r="0.45" fill="#e8b418" opacity="0.34"/><circle cx="594.7" cy="108.7" r="0.5" fill="#e8b418" opacity="0.63"/><circle cx="22.7" cy="349.3" r="0.45" fill="#e8b418" opacity="0.79"/><circle cx="26.5" cy="204.0" r="0.6" fill="#e8b418" opacity="0.40"/><circle cx="731.3" cy="221.0" r="0.45" fill="#e8b418" opacity="0.19"/><circle cx="611.3" cy="402.1" r="0.5" fill="#e8b418" opacity="0.58"/><circle cx="616.2" cy="228.4" r="0.6" fill="#e8b418" opacity="0.69"/><circle cx="499.5" cy="434.7" r="0.7" fill="#e8b418" opacity="0.77"/><circle cx="136.9" cy="344.6" r="0.45" fill="#e8b418" opacity="0.22"/><circle cx="342.8" cy="295.5" r="0.6" fill="#e8b418" opacity="0.65"/><circle cx="619.0" cy="349.7" r="0.45" fill="#e8b418" opacity="0.32"/><circle cx="428.3" cy="376.9" r="0.6" fill="#e8b418" opacity="0.47"/><circle cx="27.8" cy="263.8" r="0.7" fill="#e8b418" opacity="0.18"/><circle cx="352.9" cy="389.2" r="0.5" fill="#e8b418" opacity="0.25"/><circle cx="14.0" cy="219.3" r="0.55" fill="#e8b418" opacity="0.48"/><circle cx="569.1" cy="378.6" r="0.4" fill="#e8b418" opacity="0.20"/><circle cx="714.0" cy="251.5" r="0.6" fill="#e8b418" opacity="0.53"/><circle cx="568.4" cy="275.5" r="0.4" fill="#e8b418" opacity="0.35"/><circle cx="33.3" cy="138.9" r="0.6" fill="#e8b418" opacity="0.63"/><circle cx="614.4" cy="338.3" r="0.55" fill="#e8b418" opacity="0.21"/><circle cx="645.8" cy="75.8" r="0.5" fill="#e8b418" opacity="0.31"/><circle cx="391.0" cy="291.3" r="0.6" fill="#e8b418" opacity="0.66"/><circle cx="48.1" cy="181.5" r="0.5" fill="#e8b418" opacity="0.60"/><circle cx="553.9" cy="423.1" r="0.45" fill="#e8b418" opacity="0.47"/><circle cx="599.1" cy="435.9" r="0.45" fill="#e8b418" opacity="0.63"/><circle cx="410.6" cy="435.7" r="0.4" fill="#e8b418" opacity="0.31"/><circle cx="700.5" cy="62.6" r="0.55" fill="#e8b418" opacity="0.51"/><circle cx="371.4" cy="413.5" r="0.4" fill="#e8b418" opacity="0.59"/><circle cx="564.3" cy="431.4" r="0.6" fill="#e8b418" opacity="0.30"/><circle cx="199.3" cy="243.9" r="0.45" fill="#e8b418" opacity="0.42"/><circle cx="67.7" cy="100.4" r="0.5" fill="#e8b418" opacity="0.37"/><circle cx="772.2" cy="270.0" r="0.4" fill="#e8b418" opacity="0.25"/><circle cx="460.6" cy="439.7" r="0.7" fill="#e8b418" opacity="0.37"/><circle cx="546.7" cy="382.1" r="0.6" fill="#e8b418" opacity="0.75"/><circle cx="139.5" cy="380.1" r="0.45" fill="#e8b418" opacity="0.40"/><circle cx="614.9" cy="95.2" r="0.5" fill="#e8b418" opacity="0.31"/><circle cx="624.3" cy="355.4" r="0.55" fill="#e8b418" opacity="0.28"/><circle cx="168.8" cy="206.7" r="0.5" fill="#e8b418" opacity="0.46"/><circle cx="385.8" cy="277.0" r="0.45" fill="#e8b418" opacity="0.71"/><circle cx="161.0" cy="169.3" r="0.4" fill="#e8b418" opacity="0.18"/><circle cx="217.6" cy="419.3" r="0.6" fill="#e8b418" opacity="0.16"/><circle cx="143.3" cy="116.0" r="0.55" fill="#e8b418" opacity="0.52"/><circle cx="511.1" cy="96.2" r="0.4" fill="#e8b418" opacity="0.38"/><circle cx="120.8" cy="414.0" r="0.5" fill="#e8b418" opacity="0.24"/><circle cx="189.6" cy="371.0" r="0.4" fill="#e8b418" opacity="0.16"/><circle cx="253.5" cy="169.9" r="0.4" fill="#e8b418" opacity="0.71"/><circle cx="300.1" cy="113.3" r="0.6" fill="#e8b418" opacity="0.58"/><circle cx="237.9" cy="268.7" r="0.55" fill="#e8b418" opacity="0.18"/><circle cx="118.7" cy="263.2" r="0.4" fill="#e8b418" opacity="0.29"/><circle cx="323.2" cy="211.6" r="0.7" fill="#e8b418" opacity="0.24"/><circle cx="556.1" cy="115.1" r="0.7" fill="#e8b418" opacity="0.44"/><circle cx="296.7" cy="389.0" r="0.5" fill="#e8b418" opacity="0.50"/><circle cx="353.7" cy="60.4" r="0.6" fill="#e8b418" opacity="0.71"/><circle cx="177.9" cy="129.1" r="0.5" fill="#e8b418" opacity="0.55"/><circle cx="110.4" cy="374.9" r="0.7" fill="#e8b418" opacity="0.56"/><circle cx="445.4" cy="357.5" r="0.7" fill="#e8b418" opacity="0.34"/><circle cx="527.7" cy="406.2" r="0.45" fill="#e8b418" opacity="0.51"/><circle cx="278.1" cy="54.0" r="0.5" fill="#e8b418" opacity="0.30"/><circle cx="497.8" cy="39.7" r="0.55" fill="#e8b418" opacity="0.23"/><circle cx="387.9" cy="216.5" r="0.5" fill="#e8b418" opacity="0.33"/><circle cx="553.5" cy="98.0" r="0.55" fill="#e8b418" opacity="0.28"/><circle cx="604.6" cy="155.0" r="0.7" fill="#e8b418" opacity="0.31"/><circle cx="73.2" cy="151.1" r="0.55" fill="#e8b418" opacity="0.67"/><circle cx="376.4" cy="113.6" r="0.6" fill="#e8b418" opacity="0.35"/><circle cx="719.8" cy="398.9" r="0.4" fill="#e8b418" opacity="0.39"/><circle cx="49.5" cy="178.7" r="0.4" fill="#e8b418" opacity="0.40"/><circle cx="666.4" cy="132.6" r="0.7" fill="#e8b418" opacity="0.36"/><circle cx="199.4" cy="10.4" r="0.5" fill="#e8b418" opacity="0.36"/><circle cx="293.8" cy="131.4" r="0.7" fill="#e8b418" opacity="0.73"/><circle cx="505.5" cy="169.9" r="0.5" fill="#e8b418" opacity="0.77"/><circle cx="285.4" cy="254.7" r="0.45" fill="#e8b418" opacity="0.65"/><circle cx="493.7" cy="274.4" r="0.55" fill="#e8b418" opacity="0.55"/><circle cx="50.1" cy="30.2" r="0.55" fill="#e8b418" opacity="0.72"/><circle cx="300.5" cy="402.0" r="0.4" fill="#e8b418" opacity="0.67"/><circle cx="537.9" cy="120.6" r="0.55" fill="#e8b418" opacity="0.38"/><circle cx="768.9" cy="66.2" r="0.45" fill="#e8b418" opacity="0.33"/><circle cx="203.2" cy="97.3" r="0.6" fill="#e8b418" opacity="0.15"/><circle cx="428.0" cy="174.1" r="0.45" fill="#e8b418" opacity="0.51"/><circle cx="668.1" cy="338.3" r="0.4" fill="#e8b418" opacity="0.56"/><circle cx="441.3" cy="367.3" r="0.5" fill="#e8b418" opacity="0.32"/><circle cx="81.8" cy="8.6" r="0.7" fill="#e8b418" opacity="0.29"/><circle cx="311.8" cy="69.1" r="0.45" fill="#e8b418" opacity="0.69"/><circle cx="125.5" cy="274.8" r="0.55" fill="#e8b418" opacity="0.67"/><circle cx="231.1" cy="183.3" r="0.5" fill="#e8b418" opacity="0.64"/><circle cx="420.2" cy="104.8" r="0.45" fill="#e8b418" opacity="0.39"/><circle cx="555.8" cy="405.5" r="0.7" fill="#e8b418" opacity="0.23"/><circle cx="49.8" cy="30.4" r="0.4" fill="#e8b418" opacity="0.73"/><circle cx="244.1" cy="375.2" r="0.6" fill="#e8b418" opacity="0.65"/><circle cx="378.3" cy="71.9" r="0.55" fill="#e8b418" opacity="0.72"/><circle cx="42.1" cy="112.2" r="0.6" fill="#e8b418" opacity="0.63"/><circle cx="546.0" cy="111.8" r="0.7" fill="#e8b418" opacity="0.31"/><circle cx="563.3" cy="144.5" r="0.5" fill="#e8b418" opacity="0.71"/><circle cx="161.2" cy="249.2" r="0.45" fill="#e8b418" opacity="0.52"/><circle cx="331.0" cy="312.5" r="0.6" fill="#e8b418" opacity="0.63"/><circle cx="211.7" cy="71.1" r="0.45" fill="#e8b418" opacity="0.40"/><circle cx="526.8" cy="102.1" r="0.45" fill="#e8b418" opacity="0.78"/><circle cx="371.3" cy="306.7" r="0.45" fill="#e8b418" opacity="0.32"/><circle cx="213.4" cy="111.4" r="0.7" fill="#e8b418" opacity="0.41"/><circle cx="734.6" cy="437.1" r="0.4" fill="#e8b418" opacity="0.25"/><circle cx="784.9" cy="384.9" r="0.45" fill="#e8b418" opacity="0.34"/><circle cx="575.5" cy="439.2" r="0.4" fill="#e8b418" opacity="0.41"/><circle cx="712.0" cy="368.1" r="0.55" fill="#e8b418" opacity="0.26"/><circle cx="53.0" cy="193.9" r="0.7" fill="#e8b418" opacity="0.33"/><circle cx="308.3" cy="273.1" r="0.45" fill="#e8b418" opacity="0.79"/><circle cx="306.4" cy="306.8" r="0.6" fill="#e8b418" opacity="0.33"/><circle cx="682.1" cy="195.5" r="0.4" fill="#e8b418" opacity="0.51"/><circle cx="705.7" cy="389.2" r="0.55" fill="#e8b418" opacity="0.23"/><circle cx="254.7" cy="8.5" r="0.6" fill="#e8b418" opacity="0.52"/><circle cx="215.5" cy="176.9" r="0.5" fill="#e8b418" opacity="0.30"/><circle cx="379.5" cy="161.7" r="0.5" fill="#e8b418" opacity="0.51"/><circle cx="119.3" cy="3.2" r="0.5" fill="#e8b418" opacity="0.59"/><circle cx="3.2" cy="148.6" r="0.45" fill="#e8b418" opacity="0.80"/><circle cx="159.1" cy="383.3" r="0.55" fill="#e8b418" opacity="0.17"/><circle cx="276.6" cy="247.4" r="0.6" fill="#e8b418" opacity="0.19"/><circle cx="433.3" cy="290.3" r="0.6" fill="#e8b418" opacity="0.31"/><circle cx="148.5" cy="128.5" r="0.45" fill="#e8b418" opacity="0.80"/><circle cx="348.8" cy="368.5" r="0.7" fill="#e8b418" opacity="0.18"/><circle cx="674.7" cy="417.6" r="0.6" fill="#e8b418" opacity="0.23"/><circle cx="58.8" cy="158.6" r="0.6" fill="#e8b418" opacity="0.35"/><circle cx="404.7" cy="4.6" r="0.45" fill="#e8b418" opacity="0.19"/><circle cx="286.9" cy="339.0" r="0.5" fill="#e8b418" opacity="0.68"/><circle cx="623.5" cy="325.0" r="0.55" fill="#e8b418" opacity="0.35"/><circle cx="418.2" cy="294.3" r="0.4" fill="#e8b418" opacity="0.76"/><circle cx="379.4" cy="371.2" r="0.55" fill="#e8b418" opacity="0.31"/><circle cx="715.9" cy="10.4" r="0.6" fill="#e8b418" opacity="0.24"/><circle cx="254.7" cy="320.2" r="0.6" fill="#e8b418" opacity="0.58"/><circle cx="638.1" cy="161.2" r="0.7" fill="#e8b418" opacity="0.44"/><circle cx="245.7" cy="29.5" r="0.7" fill="#e8b418" opacity="0.36"/><circle cx="74.1" cy="148.0" r="0.7" fill="#e8b418" opacity="0.27"/><circle cx="36.9" cy="57.8" r="0.5" fill="#e8b418" opacity="0.59"/><circle cx="139.5" cy="46.8" r="0.45" fill="#e8b418" opacity="0.39"/><circle cx="143.5" cy="9.7" r="0.55" fill="#e8b418" opacity="0.48"/><circle cx="317.4" cy="142.1" r="0.6" fill="#e8b418" opacity="0.70"/><circle cx="599.3" cy="9.2" r="0.45" fill="#e8b418" opacity="0.36"/><circle cx="593.5" cy="47.9" r="0.5" fill="#e8b418" opacity="0.43"/><circle cx="757.6" cy="97.1" r="0.55" fill="#e8b418" opacity="0.66"/><circle cx="698.7" cy="359.2" r="0.4" fill="#e8b418" opacity="0.59"/><circle cx="745.8" cy="142.4" r="0.45" fill="#e8b418" opacity="0.66"/><circle cx="413.2" cy="4.5" r="0.7" fill="#e8b418" opacity="0.56"/><circle cx="297.6" cy="284.6" r="0.45" fill="#e8b418" opacity="0.55"/><circle cx="271.2" cy="194.2" r="0.7" fill="#e8b418" opacity="0.56"/><circle cx="397.3" cy="250.9" r="0.4" fill="#e8b418" opacity="0.23"/><circle cx="581.3" cy="328.9" r="0.55" fill="#e8b418" opacity="0.58"/><circle cx="330.0" cy="170.0" r="0.45" fill="#e8b418" opacity="0.39"/><circle cx="425.9" cy="18.8" r="0.4" fill="#e8b418" opacity="0.49"/><circle cx="355.5" cy="125.6" r="0.4" fill="#e8b418" opacity="0.54"/><circle cx="733.2" cy="67.2" r="0.55" fill="#e8b418" opacity="0.36"/><circle cx="201.5" cy="275.3" r="0.45" fill="#e8b418" opacity="0.63"/><circle cx="778.7" cy="177.7" r="0.45" fill="#e8b418" opacity="0.64"/><circle cx="706.2" cy="49.1" r="0.45" fill="#e8b418" opacity="0.70"/><circle cx="510.9" cy="414.5" r="0.4" fill="#e8b418" opacity="0.67"/><circle cx="402.6" cy="439.2" r="0.4" fill="#e8b418" opacity="0.27"/><circle cx="30.1" cy="151.4" r="0.6" fill="#e8b418" opacity="0.67"/><circle cx="357.3" cy="237.1" r="0.55" fill="#e8b418" opacity="0.28"/><circle cx="220.1" cy="284.5" r="0.4" fill="#e8b418" opacity="0.22"/><circle cx="346.7" cy="334.6" r="0.45" fill="#e8b418" opacity="0.20"/><circle cx="390.9" cy="24.7" r="0.6" fill="#e8b418" opacity="0.78"/><circle cx="51.7" cy="416.2" r="0.5" fill="#e8b418" opacity="0.27"/><circle cx="262.7" cy="410.6" r="0.45" fill="#e8b418" opacity="0.69"/><circle cx="92.4" cy="80.3" r="0.55" fill="#e8b418" opacity="0.17"/><circle cx="536.6" cy="205.8" r="0.55" fill="#e8b418" opacity="0.20"/><circle cx="777.4" cy="91.4" r="0.7" fill="#e8b418" opacity="0.36"/><circle cx="753.2" cy="428.8" r="0.6" fill="#e8b418" opacity="0.58"/><circle cx="339.0" cy="6.8" r="0.5" fill="#e8b418" opacity="0.60"/><circle cx="664.7" cy="418.1" r="0.7" fill="#e8b418" opacity="0.54"/><circle cx="546.9" cy="79.9" r="0.45" fill="#e8b418" opacity="0.26"/><circle cx="456.9" cy="18.3" r="0.5" fill="#e8b418" opacity="0.23"/><circle cx="740.6" cy="269.6" r="0.5" fill="#e8b418" opacity="0.35"/><circle cx="6.3" cy="30.5" r="0.45" fill="#e8b418" opacity="0.63"/><circle cx="283.6" cy="137.1" r="0.55" fill="#e8b418" opacity="0.28"/><circle cx="56.2" cy="117.5" r="0.5" fill="#e8b418" opacity="0.68"/><circle cx="321.9" cy="201.9" r="0.6" fill="#e8b418" opacity="0.23"/><circle cx="74.8" cy="227.1" r="0.55" fill="#e8b418" opacity="0.30"/><circle cx="455.9" cy="125.9" r="0.5" fill="#e8b418" opacity="0.77"/><circle cx="61.5" cy="286.6" r="0.45" fill="#e8b418" opacity="0.76"/><circle cx="305.1" cy="328.5" r="0.6" fill="#e8b418" opacity="0.29"/><circle cx="503.4" cy="162.2" r="0.5" fill="#e8b418" opacity="0.33"/><circle cx="347.0" cy="421.9" r="0.5" fill="#e8b418" opacity="0.58"/><circle cx="10.0" cy="269.9" r="0.4" fill="#e8b418" opacity="0.42"/><circle cx="104.0" cy="395.8" r="0.5" fill="#e8b418" opacity="0.40"/><circle cx="219.0" cy="45.1" r="0.6" fill="#e8b418" opacity="0.22"/><circle cx="517.4" cy="200.3" r="0.45" fill="#e8b418" opacity="0.21"/><circle cx="286.1" cy="165.5" r="0.7" fill="#e8b418" opacity="0.53"/><circle cx="548.8" cy="437.5" r="0.4" fill="#e8b418" opacity="0.58"/><circle cx="122.5" cy="32.1" r="0.45" fill="#e8b418" opacity="0.45"/><circle cx="248.7" cy="296.5" r="0.6" fill="#e8b418" opacity="0.19"/><circle cx="174.9" cy="9.3" r="0.55" fill="#e8b418" opacity="0.43"/><circle cx="181.0" cy="239.3" r="0.4" fill="#e8b418" opacity="0.80"/><circle cx="52.4" cy="204.3" r="0.55" fill="#e8b418" opacity="0.66"/><circle cx="733.5" cy="228.9" r="0.6" fill="#e8b418" opacity="0.29"/><circle cx="291.1" cy="63.2" r="0.55" fill="#e8b418" opacity="0.21"/><circle cx="625.4" cy="1.6" r="0.7" fill="#e8b418" opacity="0.60"/><circle cx="618.8" cy="400.5" r="0.7" fill="#e8b418" opacity="0.68"/><circle cx="575.2" cy="343.0" r="0.4" fill="#e8b418" opacity="0.43"/><circle cx="122.6" cy="163.9" r="0.5" fill="#e8b418" opacity="0.76"/><circle cx="705.0" cy="10.7" r="0.5" fill="#e8b418" opacity="0.42"/><circle cx="441.6" cy="430.7" r="0.4" fill="#e8b418" opacity="0.35"/><circle cx="399.3" cy="55.1" r="0.6" fill="#e8b418" opacity="0.30"/><circle cx="521.5" cy="225.3" r="0.5" fill="#e8b418" opacity="0.34"/><circle cx="611.9" cy="109.1" r="0.55" fill="#e8b418" opacity="0.45"/><circle cx="779.0" cy="260.3" r="0.45" fill="#e8b418" opacity="0.51"/><circle cx="361.5" cy="376.0" r="0.4" fill="#e8b418" opacity="0.68"/><circle cx="396.5" cy="63.6" r="0.6" fill="#e8b418" opacity="0.49"/><circle cx="319.9" cy="270.6" r="0.7" fill="#e8b418" opacity="0.78"/><circle cx="325.3" cy="4.7" r="0.45" fill="#e8b418" opacity="0.67"/><circle cx="86.2" cy="325.9" r="0.55" fill="#e8b418" opacity="0.25"/><circle cx="418.0" cy="12.6" r="0.4" fill="#e8b418" opacity="0.47"/><circle cx="717.8" cy="240.1" r="0.4" fill="#e8b418" opacity="0.40"/><circle cx="235.7" cy="94.9" r="0.6" fill="#e8b418" opacity="0.22"/><circle cx="723.1" cy="145.3" r="0.55" fill="#e8b418" opacity="0.28"/><circle cx="781.7" cy="247.6" r="0.45" fill="#e8b418" opacity="0.52"/><circle cx="394.2" cy="399.5" r="0.55" fill="#e8b418" opacity="0.56"/><circle cx="210.5" cy="265.1" r="0.45" fill="#e8b418" opacity="0.39"/><circle cx="337.8" cy="210.8" r="0.5" fill="#e8b418" opacity="0.57"/><circle cx="262.8" cy="51.6" r="0.5" fill="#e8b418" opacity="0.69"/><circle cx="48.6" cy="233.3" r="0.6" fill="#e8b418" opacity="0.36"/><circle cx="644.3" cy="298.4" r="0.7" fill="#e8b418" opacity="0.39"/><circle cx="247.4" cy="213.9" r="0.45" fill="#e8b418" opacity="0.49"/><circle cx="414.6" cy="324.0" r="0.5" fill="#e8b418" opacity="0.41"/><circle cx="760.5" cy="3.1" r="0.6" fill="#e8b418" opacity="0.38"/><circle cx="193.8" cy="425.8" r="0.7" fill="#e8b418" opacity="0.39"/><circle cx="237.0" cy="269.3" r="0.6" fill="#e8b418" opacity="0.19"/><circle cx="144.6" cy="52.1" r="0.5" fill="#e8b418" opacity="0.18"/><circle cx="73.1" cy="111.4" r="0.5" fill="#e8b418" opacity="0.68"/><circle cx="742.7" cy="286.1" r="0.5" fill="#e8b418" opacity="0.41"/><circle cx="224.9" cy="300.5" r="0.4" fill="#e8b418" opacity="0.41"/><circle cx="177.3" cy="110.6" r="0.4" fill="#e8b418" opacity="0.36"/><circle cx="644.8" cy="348.4" r="0.7" fill="#e8b418" opacity="0.33"/><circle cx="786.8" cy="216.7" r="0.55" fill="#e8b418" opacity="0.56"/><circle cx="434.5" cy="409.9" r="0.7" fill="#e8b418" opacity="0.62"/><circle cx="485.6" cy="301.8" r="0.45" fill="#e8b418" opacity="0.53"/><circle cx="4.4" cy="325.7" r="0.55" fill="#e8b418" opacity="0.37"/><circle cx="492.2" cy="403.8" r="0.4" fill="#e8b418" opacity="0.26"/><circle cx="65.7" cy="302.9" r="0.45" fill="#e8b418" opacity="0.40"/><circle cx="352.3" cy="193.1" r="0.4" fill="#e8b418" opacity="0.44"/><circle cx="706.2" cy="321.6" r="0.4" fill="#e8b418" opacity="0.77"/><circle cx="280.1" cy="367.6" r="0.7" fill="#e8b418" opacity="0.22"/><circle cx="93.2" cy="137.0" r="0.7" fill="#e8b418" opacity="0.51"/><circle cx="725.8" cy="93.3" r="0.55" fill="#e8b418" opacity="0.36"/><circle cx="110.2" cy="418.8" r="0.45" fill="#e8b418" opacity="0.72"/><circle cx="371.8" cy="13.9" r="0.55" fill="#e8b418" opacity="0.75"/><circle cx="157.6" cy="310.7" r="0.55" fill="#e8b418" opacity="0.47"/><circle cx="542.7" cy="171.5" r="0.55" fill="#e8b418" opacity="0.22"/><circle cx="584.2" cy="73.6" r="0.6" fill="#e8b418" opacity="0.36"/><circle cx="11.6" cy="363.9" r="0.7" fill="#e8b418" opacity="0.38"/><circle cx="465.4" cy="229.8" r="0.55" fill="#e8b418" opacity="0.44"/><circle cx="463.4" cy="204.3" r="0.6" fill="#e8b418" opacity="0.25"/><circle cx="553.9" cy="175.2" r="0.4" fill="#e8b418" opacity="0.60"/><circle cx="183.8" cy="115.5" r="0.7" fill="#e8b418" opacity="0.42"/><circle cx="35.5" cy="407.4" r="0.5" fill="#e8b418" opacity="0.40"/><circle cx="563.9" cy="191.3" r="0.6" fill="#e8b418" opacity="0.19"/><circle cx="141.4" cy="182.9" r="0.6" fill="#e8b418" opacity="0.45"/><circle cx="383.1" cy="102.2" r="0.6" fill="#e8b418" opacity="0.22"/><circle cx="241.3" cy="374.6" r="0.4" fill="#e8b418" opacity="0.80"/><circle cx="277.0" cy="70.5" r="0.55" fill="#e8b418" opacity="0.37"/><circle cx="119.3" cy="420.3" r="0.5" fill="#e8b418" opacity="0.67"/><circle cx="76.9" cy="346.6" r="0.45" fill="#e8b418" opacity="0.79"/><circle cx="677.7" cy="326.0" r="0.5" fill="#e8b418" opacity="0.23"/><circle cx="602.0" cy="257.4" r="0.5" fill="#e8b418" opacity="0.60"/><circle cx="286.5" cy="420.4" r="0.7" fill="#e8b418" opacity="0.67"/><circle cx="478.7" cy="367.2" r="0.5" fill="#e8b418" opacity="0.22"/><circle cx="281.8" cy="76.2" r="0.5" fill="#e8b418" opacity="0.58"/><circle cx="225.5" cy="247.9" r="0.5" fill="#e8b418" opacity="0.47"/><circle cx="214.5" cy="126.0" r="0.5" fill="#e8b418" opacity="0.76"/><circle cx="119.8" cy="172.2" r="0.6" fill="#e8b418" opacity="0.71"/><circle cx="479.6" cy="240.4" r="0.7" fill="#e8b418" opacity="0.26"/><circle cx="590.6" cy="310.6" r="0.6" fill="#e8b418" opacity="0.65"/><circle cx="204.5" cy="24.0" r="0.5" fill="#e8b418" opacity="0.57"/><circle cx="427.0" cy="212.6" r="0.7" fill="#e8b418" opacity="0.39"/><circle cx="573.9" cy="417.1" r="0.6" fill="#e8b418" opacity="0.33"/><circle cx="571.9" cy="391.4" r="0.4" fill="#e8b418" opacity="0.77"/><circle cx="86.8" cy="415.7" r="0.7" fill="#e8b418" opacity="0.63"/><circle cx="237.9" cy="1.2" r="0.6" fill="#e8b418" opacity="0.77"/><circle cx="153.7" cy="162.4" r="0.5" fill="#e8b418" opacity="0.72"/><circle cx="48.3" cy="294.5" r="0.4" fill="#e8b418" opacity="0.24"/><circle cx="325.3" cy="63.2" r="0.7" fill="#e8b418" opacity="0.78"/><circle cx="767.0" cy="406.5" r="0.6" fill="#e8b418" opacity="0.20"/><circle cx="414.7" cy="81.6" r="0.6" fill="#e8b418" opacity="0.60"/><circle cx="482.1" cy="409.0" r="0.7" fill="#e8b418" opacity="0.22"/><circle cx="109.8" cy="85.3" r="0.7" fill="#e8b418" opacity="0.47"/><circle cx="438.8" cy="429.9" r="0.6" fill="#e8b418" opacity="0.21"/><circle cx="707.8" cy="113.2" r="0.45" fill="#e8b418" opacity="0.61"/><circle cx="738.9" cy="431.4" r="0.45" fill="#e8b418" opacity="0.71"/><circle cx="735.8" cy="8.9" r="0.55" fill="#e8b418" opacity="0.67"/><circle cx="784.3" cy="252.6" r="0.6" fill="#e8b418" opacity="0.36"/><circle cx="133.4" cy="340.0" r="0.45" fill="#e8b418" opacity="0.77"/><circle cx="25.1" cy="49.4" r="0.5" fill="#e8b418" opacity="0.77"/><circle cx="18.9" cy="14.1" r="0.45" fill="#e8b418" opacity="0.60"/><circle cx="409.1" cy="256.4" r="0.7" fill="#e8b418" opacity="0.68"/><circle cx="0.5" cy="30.0" r="0.45" fill="#e8b418" opacity="0.78"/><circle cx="655.9" cy="180.2" r="0.5" fill="#e8b418" opacity="0.29"/><circle cx="308.5" cy="397.1" r="0.45" fill="#e8b418" opacity="0.32"/><circle cx="460.9" cy="232.5" r="0.5" fill="#e8b418" opacity="0.49"/><circle cx="276.9" cy="288.0" r="0.55" fill="#e8b418" opacity="0.26"/><circle cx="118.0" cy="112.0" r="0.55" fill="#e8b418" opacity="0.29"/><circle cx="723.1" cy="81.7" r="0.7" fill="#e8b418" opacity="0.58"/><circle cx="204.8" cy="231.1" r="0.5" fill="#e8b418" opacity="0.52"/><circle cx="17.6" cy="137.4" r="0.4" fill="#e8b418" opacity="0.35"/><circle cx="259.4" cy="321.1" r="0.7" fill="#e8b418" opacity="0.17"/><circle cx="195.1" cy="40.9" r="0.7" fill="#e8b418" opacity="0.65"/><circle cx="192.4" cy="96.3" r="0.55" fill="#e8b418" opacity="0.51"/><circle cx="108.7" cy="296.0" r="0.4" fill="#e8b418" opacity="0.74"/><circle cx="779.5" cy="171.1" r="0.45" fill="#e8b418" opacity="0.42"/><circle cx="527.7" cy="102.8" r="0.45" fill="#e8b418" opacity="0.40"/><circle cx="225.9" cy="262.2" r="0.7" fill="#e8b418" opacity="0.19"/><circle cx="766.8" cy="403.0" r="0.4" fill="#e8b418" opacity="0.47"/><circle cx="299.4" cy="28.8" r="0.45" fill="#e8b418" opacity="0.24"/><circle cx="161.8" cy="388.1" r="0.45" fill="#e8b418" opacity="0.76"/><circle cx="269.1" cy="411.4" r="0.45" fill="#e8b418" opacity="0.67"/><circle cx="251.4" cy="18.9" r="0.45" fill="#e8b418" opacity="0.24"/><circle cx="533.8" cy="390.1" r="0.7" fill="#e8b418" opacity="0.73"/><circle cx="525.9" cy="162.4" r="0.7" fill="#e8b418" opacity="0.23"/><circle cx="214.9" cy="415.0" r="0.4" fill="#e8b418" opacity="0.79"/><circle cx="570.9" cy="298.9" r="0.4" fill="#e8b418" opacity="0.35"/><circle cx="143.9" cy="54.3" r="0.6" fill="#e8b418" opacity="0.49"/><circle cx="642.3" cy="195.6" r="0.6" fill="#e8b418" opacity="0.32"/><circle cx="72.5" cy="288.9" r="0.4" fill="#e8b418" opacity="0.20"/><circle cx="243.5" cy="336.2" r="0.7" fill="#e8b418" opacity="0.48"/><circle cx="126.2" cy="146.0" r="0.6" fill="#e8b418" opacity="0.22"/><circle cx="380.6" cy="394.8" r="0.6" fill="#e8b418" opacity="0.45"/><circle cx="474.6" cy="373.9" r="0.55" fill="#e8b418" opacity="0.18"/><circle cx="116.0" cy="207.3" r="0.7" fill="#e8b418" opacity="0.17"/><circle cx="600.2" cy="177.0" r="0.4" fill="#e8b418" opacity="0.33"/><circle cx="35.8" cy="177.3" r="0.45" fill="#e8b418" opacity="0.77"/><circle cx="19.1" cy="187.4" r="0.55" fill="#e8b418" opacity="0.55"/><circle cx="49.7" cy="10.9" r="0.5" fill="#e8b418" opacity="0.16"/><circle cx="239.5" cy="18.4" r="0.5" fill="#e8b418" opacity="0.70"/><circle cx="442.2" cy="304.0" r="0.5" fill="#e8b418" opacity="0.56"/><circle cx="249.6" cy="157.6" r="0.6" fill="#e8b418" opacity="0.53"/><circle cx="328.1" cy="238.7" r="0.55" fill="#e8b418" opacity="0.32"/><circle cx="747.2" cy="217.2" r="0.7" fill="#e8b418" opacity="0.76"/><circle cx="671.3" cy="389.8" r="0.45" fill="#e8b418" opacity="0.45"/><circle cx="441.8" cy="406.4" r="0.45" fill="#e8b418" opacity="0.76"/><circle cx="246.7" cy="245.3" r="0.55" fill="#e8b418" opacity="0.25"/><circle cx="745.7" cy="125.5" r="0.4" fill="#e8b418" opacity="0.56"/><circle cx="2.5" cy="211.9" r="0.4" fill="#e8b418" opacity="0.47"/><circle cx="726.1" cy="227.3" r="0.55" fill="#e8b418" opacity="0.60"/><circle cx="521.6" cy="177.2" r="0.55" fill="#e8b418" opacity="0.52"/><circle cx="497.3" cy="204.3" r="0.4" fill="#e8b418" opacity="0.36"/><circle cx="503.0" cy="27.3" r="0.45" fill="#e8b418" opacity="0.78"/><circle cx="220.5" cy="195.7" r="0.4" fill="#e8b418" opacity="0.33"/><circle cx="39.8" cy="257.8" r="0.55" fill="#e8b418" opacity="0.67"/><circle cx="200.4" cy="399.1" r="0.6" fill="#e8b418" opacity="0.22"/><circle cx="277.9" cy="25.7" r="0.4" fill="#e8b418" opacity="0.47"/><circle cx="379.5" cy="128.5" r="0.7" fill="#e8b418" opacity="0.48"/><circle cx="269.5" cy="86.8" r="0.45" fill="#e8b418" opacity="0.60"/><circle cx="351.1" cy="132.1" r="0.7" fill="#e8b418" opacity="0.75"/><circle cx="539.2" cy="352.5" r="0.7" fill="#e8b418" opacity="0.33"/><circle cx="234.3" cy="389.4" r="0.4" fill="#e8b418" opacity="0.68"/><circle cx="238.7" cy="107.9" r="0.4" fill="#e8b418" opacity="0.77"/><circle cx="517.8" cy="208.1" r="0.7" fill="#e8b418" opacity="0.55"/><circle cx="717.0" cy="412.2" r="0.7" fill="#e8b418" opacity="0.71"/><circle cx="768.4" cy="70.6" r="0.5" fill="#e8b418" opacity="0.79"/><circle cx="685.8" cy="137.3" r="0.45" fill="#e8b418" opacity="0.55"/><circle cx="609.8" cy="115.6" r="0.7" fill="#e8b418" opacity="0.55"/><circle cx="98.6" cy="321.2" r="0.4" fill="#e8b418" opacity="0.43"/><circle cx="320.8" cy="174.4" r="0.4" fill="#e8b418" opacity="0.52"/><circle cx="742.5" cy="282.5" r="0.55" fill="#e8b418" opacity="0.30"/><circle cx="559.6" cy="17.3" r="0.45" fill="#e8b418" opacity="0.47"/><circle cx="770.6" cy="102.0" r="0.6" fill="#e8b418" opacity="0.65"/><circle cx="546.5" cy="228.0" r="0.5" fill="#e8b418" opacity="0.45"/><circle cx="543.7" cy="11.9" r="0.5" fill="#e8b418" opacity="0.60"/><circle cx="741.5" cy="146.1" r="0.4" fill="#e8b418" opacity="0.74"/><circle cx="228.7" cy="420.8" r="0.6" fill="#e8b418" opacity="0.35"/><circle cx="365.3" cy="25.1" r="0.4" fill="#e8b418" opacity="0.33"/><circle cx="411.2" cy="215.6" r="0.4" fill="#e8b418" opacity="0.21"/><circle cx="554.9" cy="22.2" r="0.7" fill="#e8b418" opacity="0.49"/><circle cx="226.9" cy="412.3" r="0.5" fill="#e8b418" opacity="0.31"/><circle cx="257.7" cy="30.9" r="0.4" fill="#e8b418" opacity="0.77"/><circle cx="232.6" cy="380.1" r="0.7" fill="#e8b418" opacity="0.50"/><circle cx="169.6" cy="406.7" r="0.55" fill="#e8b418" opacity="0.75"/><circle cx="62.2" cy="189.8" r="0.55" fill="#e8b418" opacity="0.60"/><circle cx="600.0" cy="245.3" r="0.7" fill="#e8b418" opacity="0.75"/><circle cx="393.5" cy="418.7" r="0.6" fill="#e8b418" opacity="0.50"/><circle cx="784.9" cy="233.3" r="0.45" fill="#e8b418" opacity="0.27"/><circle cx="776.8" cy="271.9" r="0.45" fill="#e8b418" opacity="0.51"/><circle cx="214.5" cy="318.1" r="0.7" fill="#e8b418" opacity="0.76"/><circle cx="211.0" cy="352.4" r="0.4" fill="#e8b418" opacity="0.61"/><circle cx="359.4" cy="191.2" r="0.4" fill="#e8b418" opacity="0.77"/><circle cx="152.6" cy="111.7" r="0.4" fill="#e8b418" opacity="0.51"/><circle cx="1.7" cy="205.5" r="0.6" fill="#e8b418" opacity="0.43"/><circle cx="100.6" cy="188.1" r="0.6" fill="#e8b418" opacity="0.66"/><circle cx="192.7" cy="360.2" r="0.45" fill="#e8b418" opacity="0.59"/><circle cx="484.5" cy="20.5" r="0.7" fill="#e8b418" opacity="0.52"/><circle cx="193.0" cy="252.1" r="0.55" fill="#e8b418" opacity="0.16"/><circle cx="57.3" cy="172.8" r="0.55" fill="#e8b418" opacity="0.55"/><circle cx="163.7" cy="108.4" r="0.7" fill="#e8b418" opacity="0.47"/><circle cx="462.6" cy="139.5" r="0.7" fill="#e8b418" opacity="0.23"/><circle cx="239.4" cy="97.7" r="0.7" fill="#e8b418" opacity="0.48"/><circle cx="323.0" cy="176.3" r="0.45" fill="#e8b418" opacity="0.32"/><circle cx="622.8" cy="313.0" r="0.55" fill="#e8b418" opacity="0.28"/><circle cx="521.5" cy="90.5" r="0.55" fill="#e8b418" opacity="0.36"/><circle cx="491.0" cy="181.7" r="0.5" fill="#e8b418" opacity="0.55"/><circle cx="70.1" cy="324.9" r="0.7" fill="#e8b418" opacity="0.72"/><circle cx="357.8" cy="166.2" r="0.6" fill="#e8b418" opacity="0.78"/><circle cx="618.3" cy="177.4" r="0.7" fill="#e8b418" opacity="0.20"/><circle cx="178.5" cy="101.1" r="0.6" fill="#e8b418" opacity="0.77"/><circle cx="516.1" cy="295.6" r="0.55" fill="#e8b418" opacity="0.29"/><circle cx="234.9" cy="265.5" r="0.4" fill="#e8b418" opacity="0.50"/><circle cx="771.2" cy="151.0" r="0.7" fill="#e8b418" opacity="0.40"/><circle cx="661.0" cy="152.3" r="0.55" fill="#e8b418" opacity="0.32"/><circle cx="482.8" cy="97.6" r="0.55" fill="#e8b418" opacity="0.34"/><circle cx="752.2" cy="330.4" r="0.55" fill="#e8b418" opacity="0.19"/><circle cx="458.8" cy="363.0" r="0.7" fill="#e8b418" opacity="0.40"/><circle cx="464.6" cy="314.8" r="0.5" fill="#e8b418" opacity="0.64"/><circle cx="455.6" cy="111.2" r="0.7" fill="#e8b418" opacity="0.59"/><circle cx="320.8" cy="69.4" r="0.4" fill="#e8b418" opacity="0.24"/><circle cx="614.4" cy="143.5" r="0.7" fill="#e8b418" opacity="0.48"/><circle cx="16.9" cy="334.5" r="0.5" fill="#e8b418" opacity="0.49"/><circle cx="389.7" cy="73.8" r="0.7" fill="#e8b418" opacity="0.67"/><circle cx="389.1" cy="215.4" r="0.55" fill="#e8b418" opacity="0.59"/><circle cx="77.2" cy="21.3" r="0.55" fill="#e8b418" opacity="0.49"/><circle cx="780.0" cy="251.7" r="0.5" fill="#e8b418" opacity="0.38"/><circle cx="597.3" cy="33.3" r="0.5" fill="#e8b418" opacity="0.50"/><circle cx="132.4" cy="160.6" r="0.45" fill="#e8b418" opacity="0.40"/><circle cx="215.3" cy="158.4" r="0.6" fill="#e8b418" opacity="0.48"/><circle cx="424.6" cy="175.8" r="0.55" fill="#e8b418" opacity="0.25"/><circle cx="244.8" cy="385.7" r="0.6" fill="#e8b418" opacity="0.31"/><circle cx="140.0" cy="52.0" r="0.4" fill="#e8b418" opacity="0.56"/><circle cx="21.0" cy="84.6" r="0.4" fill="#e8b418" opacity="0.47"/><circle cx="547.3" cy="12.4" r="0.5" fill="#e8b418" opacity="0.71"/><circle cx="166.3" cy="310.9" r="0.7" fill="#e8b418" opacity="0.36"/><circle cx="638.7" cy="399.7" r="0.55" fill="#e8b418" opacity="0.61"/><circle cx="21.8" cy="405.5" r="0.6" fill="#e8b418" opacity="0.33"/><circle cx="397.6" cy="158.7" r="0.6" fill="#e8b418" opacity="0.29"/><circle cx="487.7" cy="66.4" r="0.5" fill="#e8b418" opacity="0.66"/><circle cx="697.8" cy="77.6" r="0.45" fill="#e8b418" opacity="0.74"/><circle cx="532.8" cy="75.8" r="0.5" fill="#e8b418" opacity="0.54"/><circle cx="274.0" cy="340.3" r="0.5" fill="#e8b418" opacity="0.72"/><circle cx="178.3" cy="161.0" r="0.45" fill="#e8b418" opacity="0.47"/><circle cx="526.4" cy="375.8" r="0.7" fill="#e8b418" opacity="0.19"/><circle cx="662.0" cy="240.1" r="0.6" fill="#e8b418" opacity="0.17"/><circle cx="255.0" cy="262.3" r="0.55" fill="#e8b418" opacity="0.54"/><circle cx="678.6" cy="27.7" r="0.4" fill="#e8b418" opacity="0.42"/><circle cx="715.3" cy="271.6" r="0.6" fill="#e8b418" opacity="0.33"/><circle cx="525.0" cy="307.4" r="0.5" fill="#e8b418" opacity="0.18"/><circle cx="613.5" cy="97.7" r="0.4" fill="#e8b418" opacity="0.38"/><circle cx="283.3" cy="110.0" r="0.5" fill="#e8b418" opacity="0.34"/><circle cx="11.8" cy="161.0" r="0.55" fill="#e8b418" opacity="0.53"/><circle cx="211.4" cy="49.9" r="0.4" fill="#e8b418" opacity="0.45"/><circle cx="402.8" cy="137.9" r="0.6" fill="#e8b418" opacity="0.67"/><circle cx="349.6" cy="317.3" r="0.45" fill="#e8b418" opacity="0.42"/><circle cx="306.9" cy="222.8" r="0.55" fill="#e8b418" opacity="0.44"/><circle cx="452.8" cy="440.9" r="0.45" fill="#e8b418" opacity="0.34"/><circle cx="233.1" cy="173.1" r="0.7" fill="#e8b418" opacity="0.67"/><circle cx="488.2" cy="126.2" r="0.45" fill="#e8b418" opacity="0.39"/><circle cx="726.3" cy="246.2" r="0.55" fill="#e8b418" opacity="0.60"/><circle cx="586.0" cy="200.9" r="0.55" fill="#e8b418" opacity="0.48"/><circle cx="178.3" cy="256.5" r="0.7" fill="#e8b418" opacity="0.75"/><circle cx="657.5" cy="32.9" r="0.45" fill="#e8b418" opacity="0.50"/><circle cx="264.3" cy="188.6" r="0.6" fill="#e8b418" opacity="0.35"/><circle cx="678.4" cy="228.4" r="0.4" fill="#e8b418" opacity="0.50"/><circle cx="88.7" cy="383.0" r="0.55" fill="#e8b418" opacity="0.61"/><circle cx="590.9" cy="197.9" r="0.55" fill="#e8b418" opacity="0.53"/><circle cx="430.2" cy="24.7" r="0.7" fill="#e8b418" opacity="0.26"/><circle cx="365.2" cy="398.0" r="0.7" fill="#e8b418" opacity="0.47"/><circle cx="736.5" cy="288.3" r="0.5" fill="#e8b418" opacity="0.79"/><circle cx="725.4" cy="271.7" r="0.4" fill="#e8b418" opacity="0.29"/><circle cx="516.8" cy="94.7" r="0.4" fill="#e8b418" opacity="0.31"/><circle cx="244.8" cy="78.3" r="0.6" fill="#e8b418" opacity="0.49"/><circle cx="768.5" cy="81.3" r="0.45" fill="#e8b418" opacity="0.68"/><circle cx="569.9" cy="335.2" r="0.4" fill="#e8b418" opacity="0.37"/><circle cx="571.5" cy="316.3" r="0.45" fill="#e8b418" opacity="0.56"/><circle cx="582.6" cy="391.8" r="0.7" fill="#e8b418" opacity="0.77"/><circle cx="252.9" cy="114.6" r="0.7" fill="#e8b418" opacity="0.27"/><circle cx="499.8" cy="271.9" r="0.7" fill="#e8b418" opacity="0.18"/><circle cx="443.2" cy="169.2" r="0.7" fill="#e8b418" opacity="0.31"/><circle cx="562.7" cy="81.9" r="0.55" fill="#e8b418" opacity="0.58"/><circle cx="27.7" cy="261.2" r="0.5" fill="#e8b418" opacity="0.75"/><circle cx="530.8" cy="29.1" r="0.45" fill="#e8b418" opacity="0.60"/><circle cx="299.8" cy="413.6" r="0.7" fill="#e8b418" opacity="0.61"/><circle cx="771.1" cy="296.0" r="0.7" fill="#e8b418" opacity="0.60"/><circle cx="735.9" cy="141.4" r="0.4" fill="#e8b418" opacity="0.19"/><circle cx="387.2" cy="169.8" r="0.6" fill="#e8b418" opacity="0.31"/><circle cx="92.0" cy="159.0" r="0.6" fill="#e8b418" opacity="0.39"/><circle cx="259.7" cy="65.6" r="0.6" fill="#e8b418" opacity="0.57"/><circle cx="478.4" cy="90.1" r="0.4" fill="#e8b418" opacity="0.47"/><circle cx="602.7" cy="249.8" r="0.45" fill="#e8b418" opacity="0.44"/><circle cx="381.3" cy="18.9" r="0.6" fill="#e8b418" opacity="0.71"/><circle cx="26.3" cy="83.8" r="0.55" fill="#e8b418" opacity="0.30"/><circle cx="343.0" cy="166.1" r="0.45" fill="#e8b418" opacity="0.64"/><circle cx="568.5" cy="22.8" r="0.4" fill="#e8b418" opacity="0.25"/><circle cx="127.7" cy="16.6" r="0.4" fill="#e8b418" opacity="0.31"/><circle cx="509.3" cy="64.1" r="0.7" fill="#e8b418" opacity="0.18"/><circle cx="666.1" cy="265.9" r="0.4" fill="#e8b418" opacity="0.54"/><circle cx="181.0" cy="79.5" r="0.55" fill="#e8b418" opacity="0.22"/><circle cx="157.8" cy="283.0" r="0.45" fill="#e8b418" opacity="0.20"/><circle cx="650.4" cy="349.9" r="0.55" fill="#e8b418" opacity="0.25"/><circle cx="447.1" cy="224.5" r="0.55" fill="#e8b418" opacity="0.15"/><circle cx="241.9" cy="436.5" r="0.4" fill="#e8b418" opacity="0.28"/><circle cx="264.2" cy="4.1" r="0.6" fill="#e8b418" opacity="0.70"/><circle cx="228.0" cy="126.4" r="0.7" fill="#e8b418" opacity="0.24"/><circle cx="301.8" cy="313.0" r="0.5" fill="#e8b418" opacity="0.75"/><circle cx="84.7" cy="288.7" r="0.5" fill="#e8b418" opacity="0.33"/><circle cx="230.4" cy="331.6" r="0.4" fill="#e8b418" opacity="0.60"/><circle cx="727.8" cy="82.1" r="0.55" fill="#e8b418" opacity="0.71"/><circle cx="269.0" cy="111.3" r="0.6" fill="#e8b418" opacity="0.79"/><circle cx="582.8" cy="382.7" r="0.5" fill="#e8b418" opacity="0.53"/><circle cx="532.5" cy="255.0" r="0.6" fill="#e8b418" opacity="0.73"/><circle cx="218.3" cy="103.5" r="0.55" fill="#e8b418" opacity="0.58"/><circle cx="755.8" cy="63.5" r="0.55" fill="#e8b418" opacity="0.47"/><circle cx="70.7" cy="343.5" r="0.7" fill="#e8b418" opacity="0.19"/><circle cx="494.8" cy="123.6" r="0.5" fill="#e8b418" opacity="0.77"/><circle cx="306.4" cy="118.4" r="0.7" fill="#e8b418" opacity="0.71"/><circle cx="776.7" cy="116.1" r="0.5" fill="#e8b418" opacity="0.48"/><circle cx="476.6" cy="239.7" r="0.5" fill="#e8b418" opacity="0.28"/><circle cx="438.1" cy="150.0" r="0.4" fill="#e8b418" opacity="0.22"/><circle cx="541.2" cy="277.2" r="0.7" fill="#e8b418" opacity="0.33"/><circle cx="780.2" cy="281.8" r="0.4" fill="#e8b418" opacity="0.43"/><circle cx="723.5" cy="354.2" r="0.45" fill="#e8b418" opacity="0.62"/><circle cx="674.2" cy="413.4" r="0.55" fill="#e8b418" opacity="0.32"/><circle cx="442.2" cy="106.7" r="0.7" fill="#e8b418" opacity="0.63"/><circle cx="364.4" cy="303.0" r="0.45" fill="#e8b418" opacity="0.74"/><circle cx="515.8" cy="423.7" r="0.45" fill="#e8b418" opacity="0.55"/><circle cx="127.6" cy="15.6" r="0.55" fill="#e8b418" opacity="0.70"/><circle cx="429.3" cy="86.1" r="0.7" fill="#e8b418" opacity="0.59"/><circle cx="761.8" cy="25.8" r="0.4" fill="#e8b418" opacity="0.76"/><circle cx="109.5" cy="299.0" r="0.5" fill="#e8b418" opacity="0.59"/><circle cx="431.1" cy="378.4" r="0.5" fill="#e8b418" opacity="0.76"/><circle cx="45.1" cy="286.5" r="0.55" fill="#e8b418" opacity="0.30"/><circle cx="23.4" cy="71.4" r="0.4" fill="#e8b418" opacity="0.25"/><circle cx="274.1" cy="41.2" r="0.7" fill="#e8b418" opacity="0.69"/><circle cx="271.0" cy="53.2" r="0.7" fill="#e8b418" opacity="0.57"/><circle cx="292.3" cy="188.4" r="0.7" fill="#e8b418" opacity="0.53"/><circle cx="679.2" cy="299.3" r="0.5" fill="#e8b418" opacity="0.34"/><circle cx="609.4" cy="279.7" r="0.55" fill="#e8b418" opacity="0.29"/><circle cx="347.4" cy="376.6" r="0.55" fill="#e8b418" opacity="0.54"/><circle cx="400.9" cy="225.6" r="0.4" fill="#e8b418" opacity="0.50"/><circle cx="282.9" cy="161.5" r="0.4" fill="#e8b418" opacity="0.79"/><circle cx="623.9" cy="128.2" r="0.55" fill="#e8b418" opacity="0.55"/><circle cx="330.6" cy="123.5" r="0.7" fill="#e8b418" opacity="0.46"/><circle cx="313.2" cy="212.1" r="0.5" fill="#e8b418" opacity="0.20"/><circle cx="92.6" cy="310.1" r="0.6" fill="#e8b418" opacity="0.20"/><circle cx="533.5" cy="66.6" r="0.45" fill="#e8b418" opacity="0.52"/><circle cx="77.2" cy="101.8" r="0.45" fill="#e8b418" opacity="0.44"/><circle cx="232.2" cy="162.6" r="0.45" fill="#e8b418" opacity="0.62"/><circle cx="2.6" cy="74.6" r="0.45" fill="#e8b418" opacity="0.24"/><circle cx="107.1" cy="393.6" r="0.7" fill="#e8b418" opacity="0.63"/><circle cx="445.8" cy="68.4" r="0.5" fill="#e8b418" opacity="0.44"/><circle cx="476.2" cy="22.5" r="0.4" fill="#e8b418" opacity="0.37"/><circle cx="113.3" cy="344.9" r="0.4" fill="#e8b418" opacity="0.51"/><circle cx="768.0" cy="146.9" r="0.55" fill="#e8b418" opacity="0.74"/><circle cx="622.3" cy="91.3" r="0.4" fill="#e8b418" opacity="0.74"/><circle cx="140.5" cy="218.7" r="0.5" fill="#e8b418" opacity="0.75"/><circle cx="164.1" cy="284.3" r="0.4" fill="#e8b418" opacity="0.42"/><circle cx="123.8" cy="202.4" r="0.45" fill="#e8b418" opacity="0.36"/><circle cx="569.8" cy="399.3" r="0.4" fill="#e8b418" opacity="0.68"/><circle cx="187.8" cy="373.1" r="0.6" fill="#e8b418" opacity="0.77"/><circle cx="680.7" cy="110.0" r="0.6" fill="#e8b418" opacity="0.49"/><circle cx="688.4" cy="263.0" r="0.5" fill="#e8b418" opacity="0.64"/><circle cx="265.0" cy="185.7" r="0.7" fill="#e8b418" opacity="0.76"/><circle cx="176.2" cy="27.7" r="0.6" fill="#e8b418" opacity="0.21"/><circle cx="133.4" cy="365.3" r="0.55" fill="#e8b418" opacity="0.70"/><circle cx="382.4" cy="87.7" r="0.4" fill="#e8b418" opacity="0.26"/><circle cx="767.0" cy="267.6" r="0.45" fill="#e8b418" opacity="0.21"/><circle cx="397.9" cy="229.4" r="0.6" fill="#e8b418" opacity="0.67"/><circle cx="615.7" cy="191.1" r="0.45" fill="#e8b418" opacity="0.57"/><circle cx="294.6" cy="181.5" r="0.5" fill="#e8b418" opacity="0.23"/><circle cx="197.0" cy="205.8" r="0.6" fill="#e8b418" opacity="0.70"/><circle cx="629.4" cy="298.9" r="0.5" fill="#e8b418" opacity="0.40"/><circle cx="505.8" cy="111.0" r="0.5" fill="#e8b418" opacity="0.52"/><circle cx="762.9" cy="76.8" r="0.5" fill="#e8b418" opacity="0.53"/><circle cx="500.7" cy="309.3" r="0.7" fill="#e8b418" opacity="0.50"/><circle cx="495.5" cy="236.1" r="0.55" fill="#e8b418" opacity="0.30"/><circle cx="690.7" cy="155.9" r="0.55" fill="#e8b418" opacity="0.76"/><circle cx="630.0" cy="412.2" r="0.5" fill="#e8b418" opacity="0.35"/><circle cx="377.5" cy="92.6" r="0.6" fill="#e8b418" opacity="0.67"/><circle cx="256.7" cy="84.6" r="0.4" fill="#e8b418" opacity="0.42"/><circle cx="65.1" cy="330.9" r="0.6" fill="#e8b418" opacity="0.16"/><circle cx="356.7" cy="264.6" r="0.5" fill="#e8b418" opacity="0.36"/><circle cx="406.3" cy="193.7" r="0.5" fill="#e8b418" opacity="0.78"/><circle cx="283.1" cy="407.8" r="0.7" fill="#e8b418" opacity="0.52"/><circle cx="99.1" cy="357.1" r="0.4" fill="#e8b418" opacity="0.26"/><circle cx="516.4" cy="222.7" r="0.45" fill="#e8b418" opacity="0.42"/><circle cx="123.0" cy="438.4" r="0.6" fill="#e8b418" opacity="0.34"/><circle cx="231.9" cy="34.6" r="0.55" fill="#e8b418" opacity="0.57"/><circle cx="372.2" cy="343.8" r="0.7" fill="#e8b418" opacity="0.23"/><circle cx="408.5" cy="385.1" r="0.6" fill="#e8b418" opacity="0.63"/><circle cx="704.8" cy="268.7" r="0.55" fill="#e8b418" opacity="0.21"/><circle cx="114.2" cy="20.9" r="0.45" fill="#e8b418" opacity="0.78"/><circle cx="612.4" cy="50.3" r="0.45" fill="#e8b418" opacity="0.45"/><circle cx="444.2" cy="123.5" r="0.6" fill="#e8b418" opacity="0.37"/><circle cx="665.5" cy="355.1" r="0.4" fill="#e8b418" opacity="0.47"/><circle cx="297.7" cy="399.9" r="0.45" fill="#e8b418" opacity="0.20"/><circle cx="210.3" cy="339.8" r="0.6" fill="#e8b418" opacity="0.64"/><circle cx="143.1" cy="145.2" r="0.7" fill="#e8b418" opacity="0.28"/><circle cx="363.9" cy="113.7" r="0.7" fill="#e8b418" opacity="0.45"/><circle cx="431.2" cy="263.6" r="0.6" fill="#e8b418" opacity="0.50"/><circle cx="457.8" cy="1.3" r="0.45" fill="#e8b418" opacity="0.69"/><circle cx="298.9" cy="70.2" r="0.7" fill="#e8b418" opacity="0.79"/><circle cx="140.2" cy="334.2" r="0.55" fill="#e8b418" opacity="0.76"/><circle cx="164.2" cy="53.3" r="0.45" fill="#e8b418" opacity="0.43"/><circle cx="717.0" cy="40.2" r="0.4" fill="#e8b418" opacity="0.46"/><circle cx="100.3" cy="155.8" r="0.45" fill="#e8b418" opacity="0.34"/><circle cx="666.5" cy="237.6" r="0.5" fill="#e8b418" opacity="0.43"/><circle cx="359.5" cy="206.8" r="0.5" fill="#e8b418" opacity="0.67"/><circle cx="398.0" cy="420.5" r="0.5" fill="#e8b418" opacity="0.78"/><circle cx="549.1" cy="68.1" r="0.6" fill="#e8b418" opacity="0.40"/><circle cx="282.7" cy="14.4" r="0.4" fill="#e8b418" opacity="0.73"/><circle cx="526.2" cy="99.2" r="0.5" fill="#e8b418" opacity="0.17"/><circle cx="249.3" cy="163.0" r="0.5" fill="#e8b418" opacity="0.66"/><circle cx="46.3" cy="303.5" r="0.6" fill="#e8b418" opacity="0.40"/><circle cx="138.8" cy="46.5" r="0.4" fill="#e8b418" opacity="0.44"/><circle cx="602.9" cy="82.4" r="0.4" fill="#e8b418" opacity="0.28"/><circle cx="297.8" cy="207.8" r="0.4" fill="#e8b418" opacity="0.63"/><circle cx="238.4" cy="199.7" r="0.5" fill="#e8b418" opacity="0.21"/><circle cx="78.9" cy="428.2" r="0.4" fill="#e8b418" opacity="0.75"/><circle cx="473.0" cy="424.0" r="0.4" fill="#e8b418" opacity="0.26"/><circle cx="780.3" cy="88.6" r="0.45" fill="#e8b418" opacity="0.23"/><circle cx="238.2" cy="195.4" r="0.6" fill="#e8b418" opacity="0.59"/><circle cx="160.4" cy="396.8" r="0.6" fill="#e8b418" opacity="0.17"/><circle cx="232.7" cy="403.4" r="0.55" fill="#e8b418" opacity="0.41"/><circle cx="60.6" cy="378.4" r="0.55" fill="#e8b418" opacity="0.20"/><circle cx="193.2" cy="323.2" r="0.5" fill="#e8b418" opacity="0.43"/><circle cx="393.4" cy="342.5" r="0.5" fill="#e8b418" opacity="0.42"/><circle cx="429.9" cy="176.8" r="0.6" fill="#e8b418" opacity="0.50"/><circle cx="290.5" cy="201.6" r="0.4" fill="#e8b418" opacity="0.37"/><circle cx="386.8" cy="166.9" r="0.5" fill="#e8b418" opacity="0.55"/><circle cx="6.0" cy="335.2" r="0.45" fill="#e8b418" opacity="0.22"/><circle cx="23.2" cy="212.5" r="0.4" fill="#e8b418" opacity="0.63"/><circle cx="22.4" cy="3.3" r="0.6" fill="#e8b418" opacity="0.49"/><circle cx="18.9" cy="44.8" r="0.6" fill="#e8b418" opacity="0.57"/><circle cx="76.4" cy="170.7" r="0.5" fill="#e8b418" opacity="0.48"/><circle cx="623.6" cy="369.4" r="0.7" fill="#e8b418" opacity="0.24"/><circle cx="236.7" cy="423.5" r="0.6" fill="#e8b418" opacity="0.69"/><circle cx="406.0" cy="437.0" r="0.4" fill="#e8b418" opacity="0.69"/><circle cx="650.4" cy="237.4" r="0.6" fill="#e8b418" opacity="0.74"/><circle cx="39.0" cy="210.0" r="0.55" fill="#e8b418" opacity="0.15"/><circle cx="457.2" cy="396.7" r="0.5" fill="#e8b418" opacity="0.24"/><circle cx="593.3" cy="216.2" r="0.7" fill="#e8b418" opacity="0.56"/><circle cx="645.0" cy="190.7" r="0.5" fill="#e8b418" opacity="0.30"/><circle cx="577.2" cy="388.5" r="0.5" fill="#e8b418" opacity="0.77"/><circle cx="322.2" cy="204.0" r="0.4" fill="#e8b418" opacity="0.53"/><circle cx="551.4" cy="34.0" r="0.55" fill="#e8b418" opacity="0.46"/><circle cx="266.1" cy="46.1" r="0.55" fill="#e8b418" opacity="0.76"/><circle cx="97.7" cy="197.0" r="0.5" fill="#e8b418" opacity="0.51"/><circle cx="394.5" cy="80.5" r="0.55" fill="#e8b418" opacity="0.42"/><circle cx="372.1" cy="192.4" r="0.6" fill="#e8b418" opacity="0.35"/><circle cx="15.0" cy="325.2" r="0.6" fill="#e8b418" opacity="0.30"/><circle cx="192.4" cy="203.2" r="0.7" fill="#e8b418" opacity="0.46"/><circle cx="553.6" cy="290.2" r="0.5" fill="#e8b418" opacity="0.35"/><circle cx="15.3" cy="40.1" r="0.45" fill="#e8b418" opacity="0.79"/><circle cx="748.9" cy="417.2" r="0.7" fill="#e8b418" opacity="0.30"/><circle cx="190.7" cy="347.7" r="0.5" fill="#e8b418" opacity="0.51"/><circle cx="349.8" cy="122.9" r="0.7" fill="#e8b418" opacity="0.53"/><circle cx="100.7" cy="155.2" r="0.6" fill="#e8b418" opacity="0.65"/><circle cx="752.2" cy="266.3" r="0.7" fill="#e8b418" opacity="0.36"/><circle cx="503.1" cy="64.9" r="0.45" fill="#e8b418" opacity="0.26"/><circle cx="585.6" cy="51.2" r="0.4" fill="#e8b418" opacity="0.75"/><circle cx="662.0" cy="375.1" r="0.5" fill="#e8b418" opacity="0.52"/><circle cx="58.5" cy="323.4" r="0.7" fill="#e8b418" opacity="0.69"/><circle cx="34.2" cy="27.1" r="0.7" fill="#e8b418" opacity="0.64"/><circle cx="37.4" cy="258.5" r="0.7" fill="#e8b418" opacity="0.44"/><circle cx="531.6" cy="294.0" r="0.7" fill="#e8b418" opacity="0.43"/><circle cx="46.5" cy="435.4" r="0.55" fill="#e8b418" opacity="0.62"/><circle cx="631.6" cy="204.3" r="0.45" fill="#e8b418" opacity="0.25"/><circle cx="348.0" cy="363.3" r="0.7" fill="#e8b418" opacity="0.22"/><circle cx="2.9" cy="175.8" r="0.45" fill="#e8b418" opacity="0.69"/><circle cx="108.0" cy="428.0" r="0.7" fill="#e8b418" opacity="0.53"/><circle cx="105.4" cy="355.8" r="0.7" fill="#e8b418" opacity="0.71"/><circle cx="479.2" cy="323.4" r="0.6" fill="#e8b418" opacity="0.26"/><circle cx="65.5" cy="282.6" r="0.5" fill="#e8b418" opacity="0.58"/><circle cx="42.5" cy="301.0" r="0.4" fill="#e8b418" opacity="0.58"/><circle cx="477.1" cy="357.2" r="0.55" fill="#e8b418" opacity="0.45"/><circle cx="11.5" cy="271.5" r="0.7" fill="#e8b418" opacity="0.26"/><circle cx="658.7" cy="161.7" r="0.4" fill="#e8b418" opacity="0.15"/><circle cx="653.7" cy="276.1" r="0.55" fill="#e8b418" opacity="0.54"/><circle cx="671.1" cy="341.4" r="0.45" fill="#e8b418" opacity="0.45"/><circle cx="706.1" cy="175.4" r="0.4" fill="#e8b418" opacity="0.51"/><circle cx="722.1" cy="26.8" r="0.6" fill="#e8b418" opacity="0.41"/><circle cx="216.2" cy="305.3" r="0.4" fill="#e8b418" opacity="0.52"/><circle cx="585.7" cy="328.9" r="0.4" fill="#e8b418" opacity="0.54"/><circle cx="332.9" cy="354.5" r="0.5" fill="#e8b418" opacity="0.55"/><circle cx="538.1" cy="254.8" r="0.5" fill="#e8b418" opacity="0.30"/><circle cx="11.2" cy="133.3" r="0.7" fill="#e8b418" opacity="0.34"/><circle cx="384.4" cy="231.6" r="0.5" fill="#e8b418" opacity="0.60"/><circle cx="281.6" cy="180.4" r="0.5" fill="#e8b418" opacity="0.77"/><circle cx="610.7" cy="354.9" r="0.6" fill="#e8b418" opacity="0.24"/><circle cx="244.4" cy="166.8" r="0.5" fill="#e8b418" opacity="0.23"/><circle cx="588.6" cy="371.2" r="0.6" fill="#e8b418" opacity="0.65"/><circle cx="124.2" cy="250.7" r="0.6" fill="#e8b418" opacity="0.43"/><circle cx="364.8" cy="169.4" r="0.5" fill="#e8b418" opacity="0.48"/><circle cx="211.5" cy="433.6" r="0.55" fill="#e8b418" opacity="0.68"/><circle cx="578.3" cy="10.1" r="0.4" fill="#e8b418" opacity="0.29"/><circle cx="238.1" cy="268.3" r="0.5" fill="#e8b418" opacity="0.70"/><circle cx="768.3" cy="248.5" r="0.45" fill="#e8b418" opacity="0.73"/><circle cx="725.2" cy="111.9" r="0.5" fill="#e8b418" opacity="0.21"/><circle cx="457.9" cy="33.4" r="0.4" fill="#e8b418" opacity="0.48"/><circle cx="541.8" cy="98.9" r="0.7" fill="#e8b418" opacity="0.49"/><circle cx="1.0" cy="350.6" r="0.4" fill="#e8b418" opacity="0.70"/><circle cx="605.6" cy="324.3" r="0.55" fill="#e8b418" opacity="0.47"/><circle cx="353.1" cy="118.8" r="0.7" fill="#e8b418" opacity="0.49"/><circle cx="728.3" cy="299.7" r="0.4" fill="#e8b418" opacity="0.36"/><circle cx="138.8" cy="183.2" r="0.7" fill="#e8b418" opacity="0.65"/><circle cx="455.5" cy="182.8" r="0.6" fill="#e8b418" opacity="0.69"/><circle cx="679.6" cy="304.2" r="0.5" fill="#e8b418" opacity="0.38"/><circle cx="606.9" cy="162.1" r="0.45" fill="#e8b418" opacity="0.75"/><circle cx="78.9" cy="40.3" r="0.6" fill="#e8b418" opacity="0.47"/><circle cx="371.8" cy="400.6" r="0.7" fill="#e8b418" opacity="0.55"/><circle cx="489.5" cy="422.4" r="0.5" fill="#e8b418" opacity="0.33"/><circle cx="66.5" cy="8.0" r="0.4" fill="#e8b418" opacity="0.25"/><circle cx="457.1" cy="182.9" r="0.6" fill="#e8b418" opacity="0.77"/><circle cx="246.9" cy="365.6" r="0.6" fill="#e8b418" opacity="0.43"/><circle cx="364.7" cy="157.2" r="0.6" fill="#e8b418" opacity="0.72"/><circle cx="39.6" cy="310.3" r="0.45" fill="#e8b418" opacity="0.36"/><circle cx="669.5" cy="356.9" r="0.45" fill="#e8b418" opacity="0.31"/><circle cx="122.8" cy="427.5" r="0.4" fill="#e8b418" opacity="0.75"/><circle cx="425.8" cy="22.7" r="0.5" fill="#e8b418" opacity="0.70"/><circle cx="170.1" cy="75.4" r="0.7" fill="#e8b418" opacity="0.18"/><circle cx="692.9" cy="156.3" r="0.4" fill="#e8b418" opacity="0.71"/><circle cx="36.5" cy="419.0" r="0.45" fill="#e8b418" opacity="0.55"/><circle cx="517.8" cy="42.6" r="0.6" fill="#e8b418" opacity="0.34"/><circle cx="98.5" cy="43.9" r="0.7" fill="#e8b418" opacity="0.32"/><circle cx="647.3" cy="107.9" r="0.55" fill="#e8b418" opacity="0.69"/><circle cx="208.8" cy="240.7" r="0.55" fill="#e8b418" opacity="0.50"/><circle cx="562.5" cy="419.0" r="0.7" fill="#e8b418" opacity="0.47"/><circle cx="770.1" cy="55.2" r="0.5" fill="#e8b418" opacity="0.30"/><circle cx="777.8" cy="225.1" r="0.5" fill="#e8b418" opacity="0.42"/><circle cx="39.3" cy="53.3" r="0.7" fill="#e8b418" opacity="0.70"/><circle cx="693.5" cy="172.3" r="0.45" fill="#e8b418" opacity="0.26"/><circle cx="571.4" cy="416.3" r="0.45" fill="#e8b418" opacity="0.80"/><circle cx="190.7" cy="208.1" r="0.5" fill="#e8b418" opacity="0.67"/><circle cx="477.0" cy="210.6" r="0.4" fill="#e8b418" opacity="0.77"/><circle cx="11.3" cy="125.3" r="0.4" fill="#e8b418" opacity="0.54"/><circle cx="506.4" cy="354.0" r="0.6" fill="#e8b418" opacity="0.24"/><circle cx="239.3" cy="63.6" r="0.55" fill="#e8b418" opacity="0.49"/><circle cx="497.8" cy="70.5" r="0.7" fill="#e8b418" opacity="0.47"/><circle cx="717.8" cy="369.0" r="0.7" fill="#e8b418" opacity="0.67"/><circle cx="170.0" cy="152.7" r="0.4" fill="#e8b418" opacity="0.44"/><circle cx="361.0" cy="194.2" r="0.45" fill="#e8b418" opacity="0.34"/><circle cx="339.3" cy="383.0" r="0.5" fill="#e8b418" opacity="0.64"/><circle cx="694.6" cy="408.3" r="0.5" fill="#e8b418" opacity="0.35"/><circle cx="434.1" cy="436.6" r="0.6" fill="#e8b418" opacity="0.48"/><circle cx="114.7" cy="251.6" r="0.4" fill="#e8b418" opacity="0.39"/><circle cx="781.1" cy="334.1" r="0.55" fill="#e8b418" opacity="0.68"/><circle cx="581.9" cy="377.2" r="0.55" fill="#e8b418" opacity="0.48"/><circle cx="626.2" cy="418.6" r="0.4" fill="#e8b418" opacity="0.52"/><circle cx="321.0" cy="64.2" r="0.55" fill="#e8b418" opacity="0.62"/><circle cx="108.0" cy="224.8" r="0.7" fill="#e8b418" opacity="0.43"/><circle cx="108.0" cy="365.7" r="0.6" fill="#e8b418" opacity="0.20"/><circle cx="350.4" cy="300.8" r="0.5" fill="#e8b418" opacity="0.75"/><circle cx="484.0" cy="417.4" r="0.6" fill="#e8b418" opacity="0.56"/><circle cx="37.8" cy="88.3" r="0.55" fill="#e8b418" opacity="0.21"/><circle cx="589.8" cy="60.0" r="0.4" fill="#e8b418" opacity="0.32"/><circle cx="36.6" cy="247.0" r="0.55" fill="#e8b418" opacity="0.70"/><circle cx="403.1" cy="207.5" r="0.45" fill="#e8b418" opacity="0.16"/><circle cx="22.6" cy="356.9" r="0.55" fill="#e8b418" opacity="0.25"/><circle cx="12.1" cy="254.7" r="0.45" fill="#e8b418" opacity="0.27"/><circle cx="157.6" cy="432.2" r="0.6" fill="#e8b418" opacity="0.33"/><circle cx="477.4" cy="128.0" r="0.45" fill="#e8b418" opacity="0.32"/><circle cx="684.2" cy="299.8" r="0.6" fill="#e8b418" opacity="0.37"/><circle cx="750.9" cy="257.3" r="0.5" fill="#e8b418" opacity="0.67"/><circle cx="29.4" cy="324.4" r="0.4" fill="#e8b418" opacity="0.53"/><circle cx="195.0" cy="29.5" r="0.45" fill="#e8b418" opacity="0.65"/><circle cx="111.7" cy="333.6" r="0.5" fill="#e8b418" opacity="0.27"/><circle cx="696.6" cy="0.5" r="0.7" fill="#e8b418" opacity="0.69"/><circle cx="771.5" cy="266.8" r="0.45" fill="#e8b418" opacity="0.55"/><circle cx="458.2" cy="143.1" r="0.55" fill="#e8b418" opacity="0.54"/><circle cx="223.4" cy="437.5" r="0.55" fill="#e8b418" opacity="0.71"/><circle cx="566.9" cy="99.5" r="0.4" fill="#e8b418" opacity="0.31"/><circle cx="92.4" cy="60.1" r="0.6" fill="#e8b418" opacity="0.34"/><circle cx="700.9" cy="362.6" r="0.4" fill="#e8b418" opacity="0.59"/><circle cx="438.9" cy="244.3" r="0.45" fill="#e8b418" opacity="0.34"/><circle cx="452.9" cy="138.0" r="0.4" fill="#e8b418" opacity="0.77"/><circle cx="230.7" cy="254.0" r="0.6" fill="#e8b418" opacity="0.75"/><circle cx="370.8" cy="422.8" r="0.6" fill="#e8b418" opacity="0.21"/><circle cx="179.4" cy="123.2" r="0.45" fill="#e8b418" opacity="0.15"/><circle cx="520.3" cy="79.2" r="0.7" fill="#e8b418" opacity="0.26"/><circle cx="505.7" cy="265.3" r="0.6" fill="#e8b418" opacity="0.66"/><circle cx="370.8" cy="62.2" r="0.6" fill="#e8b418" opacity="0.45"/><circle cx="541.9" cy="95.2" r="0.7" fill="#e8b418" opacity="0.22"/><circle cx="733.5" cy="132.4" r="0.5" fill="#e8b418" opacity="0.51"/><circle cx="604.6" cy="127.5" r="0.5" fill="#e8b418" opacity="0.65"/><circle cx="387.9" cy="394.0" r="0.6" fill="#e8b418" opacity="0.27"/><circle cx="750.8" cy="434.1" r="0.55" fill="#e8b418" opacity="0.49"/><circle cx="266.5" cy="69.3" r="0.55" fill="#e8b418" opacity="0.21"/><circle cx="13.7" cy="261.3" r="0.7" fill="#e8b418" opacity="0.70"/><circle cx="180.9" cy="338.7" r="0.7" fill="#e8b418" opacity="0.47"/><circle cx="659.4" cy="297.0" r="0.5" fill="#e8b418" opacity="0.58"/><circle cx="440.7" cy="40.0" r="0.7" fill="#e8b418" opacity="0.51"/><circle cx="39.3" cy="212.2" r="0.7" fill="#e8b418" opacity="0.46"/><circle cx="130.9" cy="226.0" r="0.5" fill="#e8b418" opacity="0.34"/><circle cx="21.5" cy="68.0" r="0.7" fill="#e8b418" opacity="0.27"/><circle cx="445.8" cy="98.1" r="0.5" fill="#e8b418" opacity="0.21"/><circle cx="676.0" cy="2.6" r="0.45" fill="#e8b418" opacity="0.74"/><circle cx="352.9" cy="281.9" r="0.55" fill="#e8b418" opacity="0.78"/><circle cx="673.1" cy="163.3" r="0.5" fill="#e8b418" opacity="0.72"/><circle cx="89.8" cy="238.3" r="0.55" fill="#e8b418" opacity="0.68"/><circle cx="2.8" cy="249.5" r="0.55" fill="#e8b418" opacity="0.36"/><circle cx="751.3" cy="264.7" r="0.5" fill="#e8b418" opacity="0.37"/><circle cx="405.1" cy="260.6" r="0.7" fill="#e8b418" opacity="0.30"/><circle cx="271.1" cy="218.2" r="0.55" fill="#e8b418" opacity="0.30"/><circle cx="344.3" cy="186.5" r="0.6" fill="#e8b418" opacity="0.73"/><circle cx="366.9" cy="282.0" r="0.7" fill="#e8b418" opacity="0.67"/><circle cx="633.1" cy="104.8" r="0.7" fill="#e8b418" opacity="0.51"/><circle cx="263.6" cy="112.5" r="0.7" fill="#e8b418" opacity="0.79"/><circle cx="391.0" cy="438.9" r="0.6" fill="#e8b418" opacity="0.71"/><circle cx="208.1" cy="384.6" r="0.55" fill="#e8b418" opacity="0.41"/><circle cx="332.7" cy="63.8" r="0.6" fill="#e8b418" opacity="0.43"/><circle cx="184.4" cy="67.2" r="0.45" fill="#e8b418" opacity="0.21"/><circle cx="777.4" cy="6.9" r="0.4" fill="#e8b418" opacity="0.72"/><circle cx="714.5" cy="428.4" r="0.45" fill="#e8b418" opacity="0.75"/><circle cx="82.9" cy="203.9" r="0.45" fill="#e8b418" opacity="0.36"/><circle cx="538.7" cy="172.9" r="0.55" fill="#e8b418" opacity="0.47"/><circle cx="762.3" cy="286.5" r="0.45" fill="#e8b418" opacity="0.53"/><circle cx="716.5" cy="297.6" r="0.45" fill="#e8b418" opacity="0.46"/><circle cx="284.5" cy="318.6" r="0.55" fill="#e8b418" opacity="0.75"/><circle cx="380.0" cy="88.5" r="0.55" fill="#e8b418" opacity="0.64"/><circle cx="382.6" cy="102.7" r="0.4" fill="#e8b418" opacity="0.21"/><circle cx="190.0" cy="82.8" r="0.6" fill="#e8b418" opacity="0.41"/><circle cx="80.1" cy="4.8" r="0.6" fill="#e8b418" opacity="0.32"/><circle cx="693.2" cy="14.2" r="0.45" fill="#e8b418" opacity="0.80"/><circle cx="358.2" cy="225.3" r="0.45" fill="#e8b418" opacity="0.31"/><circle cx="584.8" cy="438.0" r="0.4" fill="#e8b418" opacity="0.22"/><circle cx="34.3" cy="13.0" r="0.5" fill="#e8b418" opacity="0.67"/><circle cx="463.5" cy="144.9" r="0.55" fill="#e8b418" opacity="0.59"/><circle cx="782.9" cy="274.9" r="0.55" fill="#e8b418" opacity="0.62"/><circle cx="156.3" cy="331.5" r="0.55" fill="#e8b418" opacity="0.66"/><circle cx="195.4" cy="344.8" r="0.4" fill="#e8b418" opacity="0.71"/><circle cx="64.9" cy="98.5" r="0.6" fill="#e8b418" opacity="0.51"/><circle cx="223.5" cy="417.0" r="0.55" fill="#e8b418" opacity="0.75"/><circle cx="577.1" cy="299.9" r="0.5" fill="#e8b418" opacity="0.65"/><circle cx="387.4" cy="176.5" r="0.4" fill="#e8b418" opacity="0.41"/><circle cx="607.8" cy="144.1" r="0.55" fill="#e8b418" opacity="0.36"/><circle cx="413.3" cy="157.6" r="0.55" fill="#e8b418" opacity="0.29"/><circle cx="278.7" cy="349.6" r="0.5" fill="#e8b418" opacity="0.48"/><circle cx="115.7" cy="323.6" r="0.5" fill="#e8b418" opacity="0.72"/><circle cx="13.8" cy="141.2" r="0.6" fill="#e8b418" opacity="0.43"/><circle cx="538.2" cy="187.9" r="0.5" fill="#e8b418" opacity="0.51"/><circle cx="82.6" cy="217.5" r="0.5" fill="#e8b418" opacity="0.64"/><circle cx="337.7" cy="263.3" r="0.4" fill="#e8b418" opacity="0.63"/><circle cx="122.8" cy="278.3" r="0.4" fill="#e8b418" opacity="0.41"/><circle cx="665.5" cy="331.4" r="0.45" fill="#e8b418" opacity="0.74"/><circle cx="759.1" cy="162.6" r="0.4" fill="#e8b418" opacity="0.65"/><circle cx="390.2" cy="75.5" r="0.6" fill="#e8b418" opacity="0.65"/><circle cx="53.1" cy="103.0" r="0.6" fill="#e8b418" opacity="0.65"/><circle cx="184.2" cy="224.7" r="0.6" fill="#e8b418" opacity="0.54"/><circle cx="413.3" cy="81.7" r="0.4" fill="#e8b418" opacity="0.65"/><circle cx="226.2" cy="348.4" r="0.55" fill="#e8b418" opacity="0.45"/><circle cx="500.6" cy="249.3" r="0.7" fill="#e8b418" opacity="0.46"/><circle cx="363.2" cy="366.7" r="0.5" fill="#e8b418" opacity="0.72"/><circle cx="775.9" cy="365.9" r="0.7" fill="#e8b418" opacity="0.74"/><circle cx="415.4" cy="258.9" r="0.4" fill="#e8b418" opacity="0.58"/><circle cx="195.3" cy="270.7" r="0.6" fill="#e8b418" opacity="0.43"/><circle cx="278.0" cy="398.1" r="0.45" fill="#e8b418" opacity="0.35"/><circle cx="548.4" cy="391.5" r="0.5" fill="#e8b418" opacity="0.45"/><circle cx="398.5" cy="29.4" r="0.6" fill="#e8b418" opacity="0.56"/><circle cx="594.9" cy="339.3" r="0.7" fill="#e8b418" opacity="0.53"/><circle cx="320.4" cy="299.5" r="0.6" fill="#e8b418" opacity="0.57"/><circle cx="247.0" cy="366.6" r="0.55" fill="#e8b418" opacity="0.30"/><circle cx="631.9" cy="189.6" r="0.5" fill="#e8b418" opacity="0.16"/><circle cx="219.0" cy="210.5" r="0.45" fill="#e8b418" opacity="0.20"/><circle cx="784.4" cy="34.0" r="0.7" fill="#e8b418" opacity="0.33"/><circle cx="15.1" cy="389.2" r="0.4" fill="#e8b418" opacity="0.76"/><circle cx="273.4" cy="283.7" r="0.6" fill="#e8b418" opacity="0.69"/><circle cx="656.1" cy="78.8" r="0.6" fill="#e8b418" opacity="0.74"/><circle cx="594.7" cy="99.5" r="0.5" fill="#e8b418" opacity="0.68"/><circle cx="227.6" cy="294.6" r="0.45" fill="#e8b418" opacity="0.44"/><circle cx="603.6" cy="434.9" r="0.6" fill="#e8b418" opacity="0.53"/><circle cx="561.1" cy="185.5" r="0.55" fill="#e8b418" opacity="0.62"/><circle cx="447.3" cy="386.1" r="0.45" fill="#e8b418" opacity="0.49"/><circle cx="589.5" cy="28.2" r="0.5" fill="#e8b418" opacity="0.59"/><circle cx="36.6" cy="417.4" r="0.55" fill="#e8b418" opacity="0.30"/><circle cx="683.9" cy="228.9" r="0.45" fill="#e8b418" opacity="0.71"/><circle cx="433.9" cy="112.9" r="0.55" fill="#e8b418" opacity="0.31"/><circle cx="33.9" cy="243.8" r="0.55" fill="#e8b418" opacity="0.25"/><circle cx="199.2" cy="52.4" r="0.4" fill="#e8b418" opacity="0.57"/><circle cx="357.7" cy="310.6" r="0.45" fill="#e8b418" opacity="0.55"/><circle cx="518.2" cy="126.5" r="0.5" fill="#e8b418" opacity="0.63"/><circle cx="557.8" cy="86.4" r="0.55" fill="#e8b418" opacity="0.59"/><circle cx="140.4" cy="323.4" r="0.45" fill="#e8b418" opacity="0.35"/><circle cx="290.0" cy="108.8" r="0.5" fill="#e8b418" opacity="0.39"/><circle cx="126.4" cy="176.9" r="0.4" fill="#e8b418" opacity="0.34"/><circle cx="617.9" cy="116.6" r="0.45" fill="#e8b418" opacity="0.43"/><circle cx="767.0" cy="388.8" r="0.7" fill="#e8b418" opacity="0.47"/><circle cx="212.5" cy="169.6" r="0.55" fill="#e8b418" opacity="0.42"/><circle cx="466.6" cy="30.5" r="0.5" fill="#e8b418" opacity="0.52"/><circle cx="314.8" cy="158.9" r="0.55" fill="#e8b418" opacity="0.20"/><circle cx="332.7" cy="214.4" r="0.4" fill="#e8b418" opacity="0.56"/><circle cx="116.2" cy="294.6" r="0.45" fill="#e8b418" opacity="0.60"/><circle cx="122.3" cy="255.0" r="0.7" fill="#e8b418" opacity="0.44"/><circle cx="213.9" cy="137.1" r="0.5" fill="#e8b418" opacity="0.38"/><circle cx="191.1" cy="236.5" r="0.7" fill="#e8b418" opacity="0.58"/><circle cx="716.8" cy="364.2" r="0.7" fill="#e8b418" opacity="0.62"/><circle cx="389.8" cy="305.5" r="0.7" fill="#e8b418" opacity="0.70"/><circle cx="489.7" cy="277.3" r="0.55" fill="#e8b418" opacity="0.35"/><circle cx="143.4" cy="126.8" r="0.4" fill="#e8b418" opacity="0.39"/><circle cx="533.7" cy="333.7" r="0.45" fill="#e8b418" opacity="0.59"/><circle cx="725.6" cy="214.3" r="0.6" fill="#e8b418" opacity="0.24"/><circle cx="386.1" cy="131.3" r="0.6" fill="#e8b418" opacity="0.48"/><circle cx="411.9" cy="165.4" r="0.4" fill="#e8b418" opacity="0.60"/><circle cx="27.6" cy="84.9" r="0.4" fill="#e8b418" opacity="0.58"/><circle cx="415.7" cy="385.8" r="0.7" fill="#e8b418" opacity="0.20"/><circle cx="736.2" cy="414.8" r="0.55" fill="#e8b418" opacity="0.50"/><circle cx="576.7" cy="265.8" r="0.55" fill="#e8b418" opacity="0.22"/><circle cx="738.6" cy="202.0" r="0.7" fill="#e8b418" opacity="0.50"/><circle cx="6.1" cy="252.0" r="0.55" fill="#e8b418" opacity="0.46"/><circle cx="225.2" cy="345.4" r="0.6" fill="#e8b418" opacity="0.64"/><circle cx="266.4" cy="206.6" r="0.5" fill="#e8b418" opacity="0.19"/><circle cx="28.9" cy="425.1" r="0.5" fill="#e8b418" opacity="0.50"/><circle cx="740.6" cy="238.4" r="0.7" fill="#e8b418" opacity="0.72"/><circle cx="454.9" cy="351.6" r="0.7" fill="#e8b418" opacity="0.42"/><circle cx="513.7" cy="151.7" r="0.7" fill="#e8b418" opacity="0.59"/><circle cx="648.5" cy="216.3" r="0.45" fill="#e8b418" opacity="0.49"/><circle cx="43.3" cy="107.2" r="0.7" fill="#e8b418" opacity="0.56"/><circle cx="767.5" cy="428.4" r="0.6" fill="#e8b418" opacity="0.37"/><circle cx="404.5" cy="226.1" r="0.7" fill="#e8b418" opacity="0.40"/><circle cx="311.4" cy="333.6" r="0.4" fill="#e8b418" opacity="0.60"/><circle cx="133.1" cy="397.7" r="0.7" fill="#e8b418" opacity="0.63"/><circle cx="677.7" cy="224.1" r="0.7" fill="#e8b418" opacity="0.45"/><circle cx="693.3" cy="20.1" r="0.6" fill="#e8b418" opacity="0.66"/><circle cx="226.4" cy="21.5" r="0.45" fill="#e8b418" opacity="0.36"/><circle cx="717.9" cy="220.7" r="0.4" fill="#e8b418" opacity="0.70"/><circle cx="558.9" cy="172.4" r="0.45" fill="#e8b418" opacity="0.46"/><circle cx="85.6" cy="381.6" r="0.45" fill="#e8b418" opacity="0.45"/><circle cx="130.5" cy="118.0" r="0.45" fill="#e8b418" opacity="0.72"/><circle cx="249.4" cy="399.5" r="0.4" fill="#e8b418" opacity="0.58"/><circle cx="198.0" cy="420.6" r="0.55" fill="#e8b418" opacity="0.75"/><circle cx="112.8" cy="52.7" r="0.6" fill="#e8b418" opacity="0.45"/><circle cx="587.9" cy="327.2" r="0.5" fill="#e8b418" opacity="0.77"/><circle cx="223.0" cy="37.9" r="0.7" fill="#e8b418" opacity="0.54"/><circle cx="92.1" cy="329.0" r="0.45" fill="#e8b418" opacity="0.17"/><circle cx="537.3" cy="79.9" r="0.4" fill="#e8b418" opacity="0.79"/><circle cx="573.7" cy="249.6" r="0.7" fill="#e8b418" opacity="0.18"/><circle cx="325.3" cy="376.9" r="0.7" fill="#e8b418" opacity="0.60"/><circle cx="203.0" cy="339.8" r="0.55" fill="#e8b418" opacity="0.61"/><circle cx="162.8" cy="331.8" r="0.4" fill="#e8b418" opacity="0.69"/><circle cx="737.7" cy="432.5" r="0.4" fill="#e8b418" opacity="0.63"/><circle cx="295.3" cy="98.6" r="0.55" fill="#e8b418" opacity="0.32"/><circle cx="60.0" cy="377.4" r="0.5" fill="#e8b418" opacity="0.74"/><circle cx="445.5" cy="37.6" r="0.7" fill="#e8b418" opacity="0.64"/><circle cx="444.8" cy="374.6" r="0.55" fill="#e8b418" opacity="0.48"/><circle cx="768.6" cy="204.1" r="0.55" fill="#e8b418" opacity="0.27"/><circle cx="769.2" cy="148.0" r="0.55" fill="#e8b418" opacity="0.76"/><circle cx="213.7" cy="396.2" r="0.5" fill="#e8b418" opacity="0.65"/><circle cx="234.1" cy="204.5" r="0.7" fill="#e8b418" opacity="0.51"/><circle cx="569.9" cy="335.7" r="0.45" fill="#e8b418" opacity="0.79"/><circle cx="559.0" cy="422.9" r="0.5" fill="#e8b418" opacity="0.78"/><circle cx="720.4" cy="127.7" r="0.4" fill="#e8b418" opacity="0.36"/><circle cx="43.5" cy="348.0" r="0.45" fill="#e8b418" opacity="0.66"/><circle cx="49.8" cy="124.3" r="0.55" fill="#e8b418" opacity="0.17"/><circle cx="375.7" cy="380.4" r="0.7" fill="#e8b418" opacity="0.16"/><circle cx="355.1" cy="22.3" r="0.4" fill="#e8b418" opacity="0.57"/><circle cx="482.7" cy="238.8" r="0.4" fill="#e8b418" opacity="0.47"/><circle cx="345.4" cy="38.3" r="0.45" fill="#e8b418" opacity="0.30"/><circle cx="122.6" cy="213.6" r="0.5" fill="#e8b418" opacity="0.46"/><circle cx="779.8" cy="433.8" r="0.45" fill="#e8b418" opacity="0.54"/><circle cx="203.3" cy="329.6" r="0.45" fill="#e8b418" opacity="0.76"/><circle cx="398.1" cy="166.4" r="0.7" fill="#e8b418" opacity="0.50"/><circle cx="717.8" cy="435.9" r="0.5" fill="#e8b418" opacity="0.38"/><circle cx="209.8" cy="276.9" r="0.45" fill="#e8b418" opacity="0.78"/><circle cx="722.9" cy="297.6" r="0.55" fill="#e8b418" opacity="0.64"/><circle cx="417.8" cy="374.3" r="0.55" fill="#e8b418" opacity="0.37"/><circle cx="252.2" cy="23.1" r="0.4" fill="#e8b418" opacity="0.40"/><circle cx="254.4" cy="254.8" r="0.55" fill="#e8b418" opacity="0.79"/><circle cx="299.2" cy="342.4" r="0.55" fill="#e8b418" opacity="0.70"/><circle cx="710.0" cy="131.8" r="0.4" fill="#e8b418" opacity="0.57"/><circle cx="19.2" cy="405.5" r="0.5" fill="#e8b418" opacity="0.21"/><circle cx="486.0" cy="278.0" r="0.7" fill="#e8b418" opacity="0.21"/><circle cx="620.7" cy="416.4" r="0.6" fill="#e8b418" opacity="0.38"/><circle cx="229.7" cy="54.1" r="0.4" fill="#e8b418" opacity="0.66"/><circle cx="499.1" cy="250.3" r="0.45" fill="#e8b418" opacity="0.54"/><circle cx="461.1" cy="173.5" r="0.55" fill="#e8b418" opacity="0.34"/><circle cx="751.0" cy="21.6" r="0.4" fill="#e8b418" opacity="0.23"/><circle cx="81.2" cy="407.9" r="0.45" fill="#e8b418" opacity="0.30"/><circle cx="453.0" cy="95.6" r="0.45" fill="#e8b418" opacity="0.38"/><circle cx="110.6" cy="307.5" r="0.5" fill="#e8b418" opacity="0.16"/><circle cx="377.3" cy="328.7" r="0.4" fill="#e8b418" opacity="0.43"/><circle cx="277.7" cy="412.0" r="0.6" fill="#e8b418" opacity="0.44"/><circle cx="304.0" cy="63.9" r="0.7" fill="#e8b418" opacity="0.48"/><circle cx="54.9" cy="61.0" r="0.6" fill="#e8b418" opacity="0.61"/><circle cx="460.7" cy="218.4" r="0.5" fill="#e8b418" opacity="0.41"/><circle cx="715.5" cy="212.8" r="0.6" fill="#e8b418" opacity="0.44"/><circle cx="136.0" cy="128.6" r="0.7" fill="#e8b418" opacity="0.17"/><circle cx="506.8" cy="190.5" r="0.7" fill="#e8b418" opacity="0.42"/><circle cx="57.1" cy="201.7" r="0.6" fill="#e8b418" opacity="0.27"/><circle cx="140.3" cy="241.7" r="0.7" fill="#e8b418" opacity="0.56"/><circle cx="451.7" cy="0.7" r="0.45" fill="#e8b418" opacity="0.31"/><circle cx="21.8" cy="307.0" r="0.5" fill="#e8b418" opacity="0.67"/><circle cx="673.0" cy="94.0" r="0.5" fill="#e8b418" opacity="0.59"/><circle cx="441.7" cy="223.7" r="0.5" fill="#e8b418" opacity="0.51"/><circle cx="184.0" cy="105.4" r="0.4" fill="#e8b418" opacity="0.32"/><circle cx="224.0" cy="206.6" r="0.7" fill="#e8b418" opacity="0.72"/><circle cx="754.7" cy="64.7" r="0.6" fill="#e8b418" opacity="0.56"/><circle cx="4.5" cy="169.4" r="0.5" fill="#e8b418" opacity="0.27"/><circle cx="605.4" cy="370.1" r="0.55" fill="#e8b418" opacity="0.16"/><circle cx="352.9" cy="212.9" r="0.45" fill="#e8b418" opacity="0.63"/><circle cx="368.2" cy="88.4" r="0.55" fill="#e8b418" opacity="0.38"/><circle cx="592.5" cy="343.8" r="0.5" fill="#e8b418" opacity="0.24"/><circle cx="101.4" cy="356.7" r="0.55" fill="#e8b418" opacity="0.43"/><circle cx="229.9" cy="13.8" r="0.55" fill="#e8b418" opacity="0.47"/><circle cx="636.5" cy="264.5" r="0.4" fill="#e8b418" opacity="0.62"/><circle cx="545.1" cy="327.4" r="0.7" fill="#e8b418" opacity="0.46"/><circle cx="676" cy="359" r="1.1" fill="#f0c020" opacity="0.8"/><circle cx="741" cy="133" r="0.9" fill="#f0c020" opacity="0.5"/><circle cx="454" cy="98" r="1.0" fill="#f0c020" opacity="0.8"/><circle cx="2" cy="92" r="1.1" fill="#f0c020" opacity="0.7"/><circle cx="567" cy="153" r="1.1" fill="#f0c020" opacity="1.0"/><circle cx="72" cy="272" r="0.9" fill="#f0c020" opacity="0.8"/><circle cx="399" cy="437" r="1.1" fill="#f0c020" opacity="0.6"/><circle cx="670" cy="209" r="0.8" fill="#f0c020" opacity="1.0"/><circle cx="29" cy="167" r="0.9" fill="#f0c020" opacity="0.8"/><circle cx="707" cy="72" r="0.9" fill="#f0c020" opacity="0.8"/><circle cx="703" cy="408" r="0.8" fill="#f0c020" opacity="0.5"/><circle cx="45" cy="57" r="0.8" fill="#f0c020" opacity="0.9"/><circle cx="231" cy="135" r="0.9" fill="#f0c020" opacity="0.9"/><circle cx="769" cy="41" r="1.0" fill="#f0c020" opacity="0.9"/><circle cx="753" cy="321" r="1.0" fill="#f0c020" opacity="0.7"/><circle cx="750" cy="126" r="1.0" fill="#f0c020" opacity="0.7"/><circle cx="47" cy="171" r="1.1" fill="#f0c020" opacity="0.9"/><circle cx="97" cy="227" r="1.0" fill="#f0c020" opacity="0.7"/><circle cx="421" cy="358" r="0.8" fill="#f0c020" opacity="0.9"/><circle cx="419" cy="267" r="1.0" fill="#f0c020" opacity="0.6"/><circle cx="716" cy="224" r="0.8" fill="#f0c020" opacity="0.9"/><circle cx="738" cy="378" r="0.9" fill="#f0c020" opacity="1.0"/><circle cx="29" cy="106" r="1.0" fill="#f0c020" opacity="0.8"/><circle cx="41" cy="88" r="1.0" fill="#f0c020" opacity="0.9"/><circle cx="72" cy="40" r="1.0" fill="#f0c020" opacity="0.6"/><circle cx="729" cy="254" r="0.8" fill="#f0c020" opacity="0.5"/><circle cx="53" cy="362" r="0.9" fill="#f0c020" opacity="0.8"/><circle cx="550" cy="83" r="0.9" fill="#f0c020" opacity="1.0"/><circle cx="108" cy="193" r="0.8" fill="#f0c020" opacity="1.0"/><circle cx="754" cy="7" r="1.0" fill="#f0c020" opacity="0.8"/><circle cx="330" cy="254" r="0.8" fill="#f0c020" opacity="0.6"/><circle cx="409" cy="25" r="0.8" fill="#f0c020" opacity="1.0"/><circle cx="318" cy="34" r="0.8" fill="#f0c020" opacity="0.5"/><circle cx="708" cy="232" r="1.1" fill="#f0c020" opacity="0.8"/><circle cx="730" cy="148" r="1.0" fill="#f0c020" opacity="0.8"/><circle cx="189" cy="348" r="0.8" fill="#f0c020" opacity="0.6"/><circle cx="151" cy="186" r="1.1" fill="#f0c020" opacity="0.8"/><circle cx="174" cy="95" r="1.0" fill="#f0c020" opacity="0.9"/><circle cx="352" cy="111" r="1.1" fill="#f0c020" opacity="0.6"/><circle cx="85" cy="12" r="0.8" fill="#f0c020" opacity="0.6"/><circle cx="454" cy="18" r="0.9" fill="#f0c020" opacity="0.9"/><circle cx="535" cy="336" r="0.9" fill="#f0c020" opacity="0.8"/><circle cx="699" cy="59" r="0.9" fill="#f0c020" opacity="0.5"/><circle cx="446" cy="168" r="0.9" fill="#f0c020" opacity="0.9"/><circle cx="677" cy="8" r="0.8" fill="#f0c020" opacity="1.0"/><circle cx="144" cy="144" r="1.0" fill="#f0c020" opacity="0.7"/><circle cx="101" cy="386" r="0.9" fill="#f0c020" opacity="0.7"/><circle cx="47" cy="269" r="1.0" fill="#f0c020" opacity="0.6"/><circle cx="346" cy="97" r="0.9" fill="#f0c020" opacity="0.5"/><circle cx="99" cy="140" r="1.0" fill="#f0c020" opacity="0.5"/><circle cx="757" cy="257" r="0.9" fill="#f0c020" opacity="0.8"/><circle cx="318" cy="49" r="1.0" fill="#f0c020" opacity="0.9"/><circle cx="786" cy="361" r="0.9" fill="#f0c020" opacity="0.5"/><circle cx="12" cy="40" r="0.9" fill="#f0c020" opacity="0.8"/><circle cx="771" cy="303" r="1.0" fill="#f0c020" opacity="0.8"/><circle cx="18" cy="414" r="1.0" fill="#f0c020" opacity="0.7"/><circle cx="588" cy="220" r="0.8" fill="#f0c020" opacity="0.8"/><circle cx="723" cy="369" r="1.1" fill="#f0c020" opacity="0.8"/><circle cx="195" cy="406" r="1.0" fill="#f0c020" opacity="0.9"/><circle cx="619" cy="280" r="1.1" fill="#f0c020" opacity="0.9"/><circle cx="377" cy="27" r="1.0" fill="#f0c020" opacity="0.9"/><circle cx="684" cy="395" r="1.1" fill="#f0c020" opacity="0.7"/><circle cx="455" cy="56" r="1.1" fill="#f0c020" opacity="0.9"/><circle cx="266" cy="353" r="1.1" fill="#f0c020" opacity="1.0"/><circle cx="201" cy="332" r="0.8" fill="#f0c020" opacity="0.9"/><circle cx="206" cy="440" r="1.0" fill="#f0c020" opacity="0.9"/><circle cx="695" cy="57" r="1.0" fill="#f0c020" opacity="0.7"/><circle cx="351" cy="413" r="1.1" fill="#f0c020" opacity="0.8"/><circle cx="292" cy="162" r="0.9" fill="#f0c020" opacity="1.0"/><circle cx="54" cy="252" r="1.0" fill="#f0c020" opacity="0.6"/><circle cx="16" cy="395" r="1.0" fill="#f0c020" opacity="0.9"/><circle cx="262" cy="194" r="0.8" fill="#f0c020" opacity="0.6"/><circle cx="343" cy="168" r="1.0" fill="#f0c020" opacity="0.8"/><circle cx="696" cy="86" r="1.1" fill="#f0c020" opacity="0.5"/><circle cx="506" cy="309" r="0.9" fill="#f0c020" opacity="0.9"/><circle cx="768" cy="324" r="0.8" fill="#f0c020" opacity="0.9"/><circle cx="48" cy="333" r="0.9" fill="#f0c020" opacity="0.7"/><circle cx="192" cy="36" r="0.9" fill="#f0c020" opacity="0.7"/><circle cx="746" cy="280" r="1.1" fill="#f0c020" opacity="1.0"/><circle cx="349" cy="35" r="1.0" fill="#f0c020" opacity="0.8"/><circle cx="390" cy="224" r="1.1" fill="#f0c020" opacity="0.6"/><circle cx="458" cy="314" r="1.1" fill="#f0c020" opacity="0.9"/><circle cx="248" cy="147" r="1.1" fill="#f0c020" opacity="0.9"/><circle cx="398" cy="385" r="1.0" fill="#f0c020" opacity="0.8"/><circle cx="562" cy="152" r="0.9" fill="#f0c020" opacity="0.7"/><circle cx="490" cy="45" r="1.0" fill="#f0c020" opacity="0.6"/><circle cx="300" cy="331" r="0.8" fill="#f0c020" opacity="0.7"/><circle cx="770" cy="401" r="0.9" fill="#f0c020" opacity="0.8"/><circle cx="775" cy="435" r="0.8" fill="#f0c020" opacity="0.5"/><circle cx="492" cy="390" r="1.0" fill="#f0c020" opacity="0.8"/><circle cx="688" cy="375" r="1.0" fill="#f0c020" opacity="0.8"/><circle cx="67" cy="173" r="1.0" fill="#f0c020" opacity="0.8"/><circle cx="270" cy="40" r="1.0" fill="#f0c020" opacity="0.5"/><circle cx="472" cy="415" r="1.0" fill="#f0c020" opacity="0.8"/><circle cx="717" cy="0" r="0.9" fill="#f0c020" opacity="0.8"/><circle cx="130" cy="70" r="1.1" fill="#f0c020" opacity="0.8"/><circle cx="538" cy="407" r="0.9" fill="#f0c020" opacity="0.9"/><circle cx="231" cy="323" r="0.8" fill="#f0c020" opacity="0.5"/><circle cx="283" cy="435" r="1.1" fill="#f0c020" opacity="1.0"/><circle cx="439" cy="316" r="0.8" fill="#f0c020" opacity="0.7"/><circle cx="491" cy="172" r="1.0" fill="#f0c020" opacity="0.9"/><circle cx="721" cy="377" r="1.0" fill="#f0c020" opacity="0.5"/><circle cx="92" cy="224" r="0.9" fill="#f0c020" opacity="0.9"/><circle cx="162" cy="226" r="0.8" fill="#f0c020" opacity="0.9"/><circle cx="634" cy="367" r="1.1" fill="#f0c020" opacity="0.6"/><circle cx="272" cy="210" r="0.9" fill="#f0c020" opacity="0.8"/><circle cx="24" cy="3" r="0.9" fill="#f0c020" opacity="1.0"/><circle cx="719" cy="60" r="0.9" fill="#f0c020" opacity="0.5"/><circle cx="193" cy="329" r="1.1" fill="#f0c020" opacity="0.8"/><circle cx="759" cy="409" r="1.0" fill="#f0c020" opacity="0.5"/><circle cx="441" cy="146" r="0.8" fill="#f0c020" opacity="1.0"/><circle cx="600" cy="348" r="0.8" fill="#f0c020" opacity="0.7"/><circle cx="451" cy="411" r="0.8" fill="#f0c020" opacity="0.5"/><circle cx="352" cy="385" r="1.0" fill="#f0c020" opacity="0.7"/><circle cx="735" cy="334" r="0.9" fill="#f0c020" opacity="0.9"/><circle cx="750" cy="393" r="1.1" fill="#f0c020" opacity="1.0"/><circle cx="340" cy="375" r="0.8" fill="#f0c020" opacity="0.6"/><circle cx="504" cy="91" r="0.9" fill="#f0c020" opacity="0.9"/><circle cx="511" cy="402" r="0.8" fill="#f0c020" opacity="0.9"/><circle cx="679" cy="243" r="1.1" fill="#f0c020" opacity="1.0"/><circle cx="687" cy="234" r="0.8" fill="#f0c020" opacity="0.9"/><circle cx="655" cy="70" r="0.8" fill="#f0c020" opacity="1.0"/><circle cx="588" cy="109" r="0.9" fill="#f0c020" opacity="0.9"/><circle cx="596" cy="73" r="0.9" fill="#f0c020" opacity="1.0"/><circle cx="295" cy="422" r="1.1" fill="#f0c020" opacity="1.0"/><circle cx="170" cy="368" r="0.8" fill="#f0c020" opacity="0.6"/><circle cx="552" cy="243" r="0.8" fill="#f0c020" opacity="0.7"/><circle cx="324" cy="103" r="0.8" fill="#f0c020" opacity="0.7"/><circle cx="717" cy="15" r="0.8" fill="#f0c020" opacity="0.5"/><circle cx="569" cy="420" r="1.0" fill="#f0c020" opacity="0.7"/><circle cx="515" cy="398" r="1.1" fill="#f0c020" opacity="0.7"/><circle cx="631" cy="16" r="0.9" fill="#f0c020" opacity="0.5"/><circle cx="23" cy="71" r="1.0" fill="#f0c020" opacity="0.5"/><circle cx="297" cy="171" r="0.8" fill="#f0c020" opacity="0.9"/><circle cx="189" cy="328" r="1.0" fill="#f0c020" opacity="0.7"/><circle cx="338" cy="284" r="0.8" fill="#f0c020" opacity="0.7"/><circle cx="333" cy="203" r="1.1" fill="#f0c020" opacity="0.8"/><circle cx="317" cy="230" r="0.8" fill="#f0c020" opacity="0.8"/><circle cx="152" cy="61" r="1.0" fill="#f0c020" opacity="0.6"/><circle cx="684" cy="267" r="1.1" fill="#f0c020" opacity="1.0"/><circle cx="550" cy="163" r="1.1" fill="#f0c020" opacity="0.8"/><circle cx="750" cy="222" r="0.9" fill="#f0c020" opacity="0.9"/><circle cx="163" cy="239" r="0.9" fill="#f0c020" opacity="0.9"/><circle cx="22" cy="249" r="1.1" fill="#f0c020" opacity="0.6"/><circle cx="231" cy="393" r="0.9" fill="#f0c020" opacity="0.9"/><circle cx="396" cy="56" r="1.0" fill="#f0c020" opacity="0.7"/><circle cx="385" cy="12" r="1.1" fill="#f0c020" opacity="0.7"/><circle cx="265" cy="40" r="1.0" fill="#f0c020" opacity="0.6"/><circle cx="535" cy="228" r="1.1" fill="#f0c020" opacity="0.9"/><circle cx="729" cy="223" r="1.0" fill="#f0c020" opacity="0.8"/><circle cx="38" cy="219" r="1.0" fill="#f0c020" opacity="0.9"/><circle cx="99" cy="325" r="1.0" fill="#f0c020" opacity="0.8"/><circle cx="89" cy="323" r="0.9" fill="#f0c020" opacity="0.9"/><circle cx="325" cy="2" r="0.8" fill="#f0c020" opacity="0.9"/><circle cx="430" cy="430" r="0.8" fill="#f0c020" opacity="0.6"/><circle cx="388" cy="243" r="0.9" fill="#f0c020" opacity="0.8"/><circle cx="465" cy="415" r="1.1" fill="#f0c020" opacity="0.5"/><circle cx="433" cy="278" r="1.0" fill="#f0c020" opacity="0.8"/><circle cx="776" cy="152" r="1.1" fill="#f0c020" opacity="0.8"/><circle cx="717" cy="378" r="1.1" fill="#f0c020" opacity="0.8"/><circle cx="402" cy="129" r="0.9" fill="#f0c020" opacity="0.5"/><circle cx="258" cy="138" r="0.9" fill="#f0c020" opacity="1.0"/><circle cx="630" cy="240" r="1.1" fill="#f0c020" opacity="0.7"/><circle cx="605" cy="333" r="1.1" fill="#f0c020" opacity="0.7"/><circle cx="586" cy="186" r="1.1" fill="#f0c020" opacity="1.0"/><circle cx="701" cy="212" r="1.1" fill="#f0c020" opacity="0.5"/><circle cx="610" cy="43" r="1.0" fill="#f0c020" opacity="0.7"/><circle cx="79" cy="244" r="1.0" fill="#f0c020" opacity="0.6"/><circle cx="357" cy="337" r="1.0" fill="#f0c020" opacity="0.8"/><circle cx="509" cy="337" r="1.1" fill="#f0c020" opacity="0.7"/><circle cx="617" cy="38" r="0.8" fill="#f0c020" opacity="0.9"/><circle cx="725" cy="389" r="0.8" fill="#f0c020" opacity="0.8"/><circle cx="411" cy="309" r="1.1" fill="#f0c020" opacity="0.7"/><circle cx="141" cy="269" r="1.0" fill="#f0c020" opacity="0.8"/><circle cx="403" cy="273" r="1.1" fill="#f0c020" opacity="0.9"/><circle cx="651" cy="208" r="1.0" fill="#f0c020" opacity="0.6"/><circle cx="64" cy="200" r="0.8" fill="#f0c020" opacity="0.6"/><circle cx="755" cy="128" r="1.1" fill="#f0c020" opacity="1.0"/><circle cx="396" cy="90" r="1.0" fill="#f0c020" opacity="0.6"/><circle cx="499" cy="160" r="1.0" fill="#f0c020" opacity="0.7"/><circle cx="647" cy="298" r="1.0" fill="#f0c020" opacity="0.8"/><circle cx="193" cy="414" r="0.8" fill="#f0c020" opacity="0.9"/><circle cx="449" cy="24" r="0.9" fill="#f0c020" opacity="0.7"/><circle cx="748" cy="194" r="0.8" fill="#f0c020" opacity="0.9"/><circle cx="384" cy="172" r="0.9" fill="#f0c020" opacity="0.5"/><circle cx="204" cy="160" r="1.1" fill="#f0c020" opacity="0.6"/><circle cx="10" cy="388" r="0.8" fill="#f0c020" opacity="0.6"/><circle cx="408" cy="255" r="0.9" fill="#f0c020" opacity="0.9"/><circle cx="357" cy="94" r="0.8" fill="#f0c020" opacity="0.7"/><circle cx="651" cy="403" r="0.9" fill="#f0c020" opacity="0.6"/><circle cx="677" cy="134" r="0.8" fill="#f0c020" opacity="0.8"/><circle cx="103" cy="191" r="0.9" fill="#f0c020" opacity="1.0"/><circle cx="466" cy="214" r="0.8" fill="#f0c020" opacity="1.0"/><circle cx="23" cy="119" r="1.1" fill="#f0c020" opacity="0.7"/><circle cx="684" cy="30" r="1.1" fill="#f0c020" opacity="0.9"/><circle cx="157" cy="14" r="1.0" fill="#f0c020" opacity="0.9"/><circle cx="325" cy="313" r="0.8" fill="#f0c020" opacity="0.7"/><circle cx="351" cy="6" r="0.9" fill="#f0c020" opacity="0.6"/><circle cx="427" cy="119" r="1.0" fill="#f0c020" opacity="1.0"/><circle cx="721" cy="187" r="0.8" fill="#f0c020" opacity="0.7"/><circle cx="597" cy="291" r="1.0" fill="#f0c020" opacity="0.7"/><circle cx="364" cy="320" r="1.1" fill="#f0c020" opacity="0.6"/><circle cx="93" cy="236" r="1.0" fill="#f0c020" opacity="0.7"/><circle cx="307" cy="333" r="0.8" fill="#f0c020" opacity="0.7"/><circle cx="359" cy="59" r="1.1" fill="#f0c020" opacity="1.0"/><circle cx="246" cy="8" r="0.8" fill="#f0c020" opacity="0.5"/><circle cx="291" cy="421" r="0.8" fill="#f0c020" opacity="0.7"/><circle cx="695" cy="72" r="0.9" fill="#f0c020" opacity="0.9"/><circle cx="578" cy="132" r="1.0" fill="#f0c020" opacity="0.8"/><circle cx="517" cy="217" r="0.9" fill="#f0c020" opacity="0.7"/><circle cx="220" cy="376" r="1.0" fill="#f0c020" opacity="0.6"/><circle cx="593" cy="439" r="0.9" fill="#f0c020" opacity="0.6"/><circle cx="554" cy="388" r="0.8" fill="#f0c020" opacity="0.6"/><circle cx="577" cy="402" r="0.9" fill="#f0c020" opacity="0.8"/><circle cx="398" cy="180" r="1.1" fill="#f0c020" opacity="0.8"/><circle cx="587" cy="206" r="1.0" fill="#f0c020" opacity="0.9"/><circle cx="400" cy="133" r="1.0" fill="#f0c020" opacity="0.9"/><circle cx="513" cy="298" r="0.9" fill="#f0c020" opacity="0.8"/><circle cx="336" cy="265" r="1.0" fill="#f0c020" opacity="0.6"/><circle cx="269" cy="377" r="0.9" fill="#f0c020" opacity="0.6"/><circle cx="699" cy="241" r="1.0" fill="#f0c020" opacity="0.7"/><circle cx="742" cy="249" r="1.0" fill="#f0c020" opacity="0.7"/><circle cx="14" cy="387" r="1.0" fill="#f0c020" opacity="0.9"/><circle cx="207" cy="299" r="1.1" fill="#f0c020" opacity="0.5"/><circle cx="712" cy="140" r="1.0" fill="#f0c020" opacity="0.8"/><circle cx="600" cy="127" r="0.8" fill="#f0c020" opacity="0.7"/><circle cx="725" cy="18" r="0.8" fill="#f0c020" opacity="0.9"/><circle cx="145" cy="104" r="1.0" fill="#f0c020" opacity="0.8"/><circle cx="95" cy="232" r="1.0" fill="#f0c020" opacity="0.8"/><circle cx="666" cy="113" r="0.8" fill="#f0c020" opacity="0.8"/><circle cx="688" cy="212" r="1.1" fill="#f0c020" opacity="0.5"/><circle cx="511" cy="237" r="1.1" fill="#f0c020" opacity="0.8"/><circle cx="518" cy="116" r="1.1" fill="#f0c020" opacity="0.9"/><circle cx="787" cy="80" r="0.8" fill="#f0c020" opacity="0.9"/><circle cx="118" cy="358" r="1.1" fill="#f0c020" opacity="0.9"/><circle cx="627" cy="65" r="0.9" fill="#f0c020" opacity="0.9"/><circle cx="590" cy="191" r="0.9" fill="#f0c020" opacity="0.6"/><circle cx="676" cy="237" r="0.8" fill="#f0c020" opacity="1.0"/><circle cx="777" cy="328" r="0.8" fill="#f0c020" opacity="0.9"/><circle cx="2" cy="415" r="1.0" fill="#f0c020" opacity="0.6"/><circle cx="92" cy="58" r="0.8" fill="#f0c020" opacity="0.9"/><circle cx="537" cy="360" r="1.1" fill="#f0c020" opacity="0.9"/><circle cx="265" cy="392" r="1.0" fill="#f0c020" opacity="0.8"/><circle cx="155" cy="140" r="1.1" fill="#f0c020" opacity="0.6"/><circle cx="430" cy="197" r="0.8" fill="#f0c020" opacity="0.6"/><circle cx="90" cy="246" r="0.8" fill="#f0c020" opacity="0.6"/><circle cx="105" cy="349" r="0.9" fill="#f0c020" opacity="0.7"/><circle cx="132" cy="224" r="1.1" fill="#f0c020" opacity="0.6"/><circle cx="119" cy="373" r="1.1" fill="#f0c020" opacity="0.9"/><circle cx="582" cy="177" r="1.0" fill="#f0c020" opacity="0.9"/><circle cx="407" cy="386" r="1.0" fill="#f0c020" opacity="0.7"/><circle cx="210" cy="390" r="0.9" fill="#f0c020" opacity="0.7"/><circle cx="641" cy="435" r="0.8" fill="#f0c020" opacity="0.9"/><circle cx="34" cy="435" r="0.8" fill="#f0c020" opacity="0.8"/><circle cx="45" cy="149" r="0.9" fill="#f0c020" opacity="0.8"/><circle cx="280" cy="7" r="0.9" fill="#f0c020" opacity="0.9"/><circle cx="401" cy="297" r="0.8" fill="#f0c020" opacity="0.6"/><circle cx="605" cy="151" r="1.0" fill="#f0c020" opacity="1.0"/><circle cx="578" cy="379" r="0.9" fill="#f0c020" opacity="0.7"/><circle cx="715" cy="200" r="1.0" fill="#f0c020" opacity="0.7"/><circle cx="734.5" cy="147.0" r="7.2" fill="url(#glow)"/><circle cx="23.6" cy="323.6" r="5.1" fill="url(#glow)"/><circle cx="753.6" cy="230.0" r="3.5" fill="url(#glow)"/><circle cx="766.0" cy="223.0" r="2.9" fill="url(#glow)"/><circle cx="763.7" cy="275.0" r="3.2" fill="url(#glow)"/><circle cx="783.0" cy="371.0" r="2.9" fill="url(#glow)"/><circle cx="769.0" cy="199.0" r="2.6" fill="url(#glow)"/><circle cx="17.0" cy="232.0" r="3.2" fill="url(#glow)"/><circle cx="72.0" cy="254.0" r="2.9" fill="url(#glow)"/><circle cx="4.5" cy="155.6" r="2.9" fill="url(#glow)"/><circle cx="35.0" cy="119.0" r="2.6" fill="url(#glow)"/><circle cx="68.5" cy="338.8" r="2.6" fill="url(#glow)"/><circle cx="22.5" cy="284.0" r="2.4" fill="url(#glow)"/><circle cx="14.6" cy="74.7" r="2.4" fill="url(#glow)"/><circle cx="737.0" cy="134.0" r="2.1" fill="url(#glow)"/><circle cx="771.0" cy="50.0" r="2.2" fill="url(#glow)"/><circle cx="33.0" cy="444.0" r="9.6" fill="url(#glow)"/></svg><div id="win" class="abs" style="left:79px;top:17px;width:629px;height:408px;background:#f3f3f3;overflow:hidden;border-radius:3px 3px 0 0;box-shadow:0 0 0 1px #2a2a2a"><svg class="abs" style="left:7.0px;top:7.0px" width="11" height="10" viewBox="0 0 11 10"><path d="M9.5 5H1.5M5 1.5L1.5 5L5 8.5" fill="none" stroke="#8a8a8a" stroke-width="0.9"/></svg><div class="abs" style="left:26.0px;top:9.7px;font-size:6.3px;line-height:1;font-weight:normal;color:#333;white-space:nowrap;">Definições</div><div class="abs" style="left:181.5px;top:4.5px;width:267px;height:16px;background:#fbfbfb;border-radius:8px;border-bottom:1px solid #d6d6d6;box-shadow:0 0 0 0.5px #e2e2e2"></div><svg class="abs" style="left:187.0px;top:7.0px" width="11" height="11" viewBox="0 0 11 11"><circle cx="4.5" cy="4.5" r="3.2" fill="none" stroke="#444" stroke-width="0.9"/><path d="M6.8 6.8L9.5 9.5" stroke="#444" stroke-width="0.9"/></svg><div class="abs" style="left:202.0px;top:9.3px;font-size:7.2px;line-height:1;font-weight:normal;color:#555;white-space:nowrap;">Procurar uma definição</div><div class="abs" style="left:566.0px;top:7.5px;width:6px;height:0.8px;background:#aaa"></div><div class="abs" style="left:591.0px;top:5.0px;width:5.5px;height:5.5px;border:0.8px solid #8a8a8a"></div><svg class="abs" style="left:614.5px;top:4.5px" width="6" height="6" viewBox="0 0 6 6"><path d="M0.5 0.5L5.5 5.5M5.5 0.5L0.5 5.5" stroke="#8a8a8a" stroke-width="0.8"/></svg><svg class="abs" style="left:7.5px;top:28.0px" width="32" height="32" viewBox="0 0 32 32"><defs><clipPath id="avc"><circle cx="16" cy="16" r="15.8"/></clipPath></defs><g clip-path="url(#avc)"><rect width="32" height="32" fill="#1a1e24"/><path d="M0 26Q8 22 14 28L12 32H0Z" fill="#1e7ab0"/><path d="M20 30Q26 24 32 26V32H20Z" fill="#1e7ab0"/><ellipse cx="17" cy="17" rx="8.5" ry="11" fill="#c99a7e"/><path d="M8 10Q10 3 18 3Q26 3 27 11Q22 7 17 8Q11 8 8 12Z" fill="#2a2624"/><path d="M10 20Q12 28 17 29Q23 28 25 20Q22 24 17 24Q12 24 10 20Z" fill="#5a4232" opacity="0.85"/><rect x="11.5" y="14" width="3" height="1.2" fill="#3a2a22"/><rect x="19.5" y="14" width="3" height="1.2" fill="#3a2a22"/></g></svg><svg class="abs" style="left:21.0px;top:29.0px" width="8" height="11" viewBox="0 0 8 11"><path d="M1 1L1 9L3 7L5 10L6 9.5L4.5 6.5L7 6.5Z" fill="#fff" stroke="#222" stroke-width="0.6"/></svg><div class="abs" style="left:45.0px;top:38.0px;font-size:6.9px;line-height:1;font-weight:bold;color:#1b1b1b;white-space:nowrap;">Ricardo Durand</div><div class="abs" style="left:45.0px;top:46.8px;font-size:6.4px;line-height:1;font-weight:normal;color:#333;white-space:nowrap;">ricardodurand@gmail.com</div><div class="abs" style="left:8.0px;top:74.0px;width:145px;height:19px;background:#e9e9e9;border-radius:4px"></div><div class="abs" style="left:8.5px;top:80.0px;width:2px;height:8px;background:#e0a020;border-radius:1px"></div><svg class="abs" style="left:12.0px;top:78.2px" width="12" height="12" viewBox="0 0 12 12"><path d="M1 6L6 1.5L11 6V11H1Z" fill="#e8e8e8" stroke="#e07020" stroke-width="1.1"/><rect x="4.5" y="7.5" width="3" height="3.5" fill="#b0b0b0"/></svg><div class="abs" style="left:30.5px;top:80.9px;font-size:7.4px;line-height:1;font-weight:normal;color:#1f1f1f;white-space:nowrap;">Base</div><svg class="abs" style="left:12.0px;top:99.0px" width="12" height="12" viewBox="0 0 12 12"><rect x="0.5" y="2" width="11" height="8" fill="#1a8fd0"/><rect x="0.5" y="2" width="11" height="3" fill="#38b0e8"/></svg><div class="abs" style="left:30.5px;top:101.7px;font-size:7.4px;line-height:1;font-weight:normal;color:#1f1f1f;white-space:nowrap;">Sistema</div><svg class="abs" style="left:12.0px;top:119.5px" width="12" height="12" viewBox="0 0 12 12"><ellipse cx="6" cy="6" rx="4.3" ry="5.5" fill="#1e7fe0"/><path d="M4 4L8 7.5L6 9V3L8 4.5L4 8" fill="none" stroke="#fff" stroke-width="0.8"/></svg><div class="abs" style="left:30.5px;top:122.2px;font-size:7.4px;line-height:1;font-weight:normal;color:#1f1f1f;white-space:nowrap;">Bluetooth e dispositivos</div><svg class="abs" style="left:12.0px;top:140.3px" width="12" height="12" viewBox="0 0 12 12"><path d="M0.5 4Q6 0 11.5 4L6 10Z" fill="#2090e0"/><path d="M2.5 5Q6 2.5 9.5 5L6 9Z" fill="#50c0f8"/></svg><div class="abs" style="left:30.5px;top:143.0px;font-size:7.4px;line-height:1;font-weight:normal;color:#1f1f1f;white-space:nowrap;">Rede e Internet</div><svg class="abs" style="left:12.0px;top:161.0px" width="12" height="12" viewBox="0 0 12 12"><path d="M10.5 1L4 8L3 9.5" stroke="#8a8a9a" stroke-width="1.5"/><path d="M4.5 7.5Q1.5 8 1 11Q4 11 5 8.5Z" fill="#e07030"/></svg><div class="abs" style="left:30.5px;top:163.7px;font-size:7.4px;line-height:1;font-weight:normal;color:#1f1f1f;white-space:nowrap;">Personalização</div><svg class="abs" style="left:12.0px;top:181.7px" width="12" height="12" viewBox="0 0 12 12"><rect x="0.5" y="3" width="5" height="4" fill="#4a5a6a"/><rect x="0.5" y="7.5" width="5" height="4" fill="#5a6a7a"/><rect x="6" y="7.5" width="5" height="4" fill="#3a4a5a"/><path d="M6.5 5L9 1L11.5 5L9 7Z" fill="#1a80d0"/></svg><div class="abs" style="left:30.5px;top:184.4px;font-size:7.4px;line-height:1;font-weight:normal;color:#1f1f1f;white-space:nowrap;">Aplicações</div><svg class="abs" style="left:12.0px;top:202.2px" width="12" height="12" viewBox="0 0 12 12"><circle cx="6" cy="3.5" r="2.8" fill="#20b0a0"/><path d="M1.5 11Q1.5 6.8 6 6.8Q10.5 6.8 10.5 11Z" fill="#20b0a0"/></svg><div class="abs" style="left:30.5px;top:204.9px;font-size:7.4px;line-height:1;font-weight:normal;color:#1f1f1f;white-space:nowrap;">Contas</div><svg class="abs" style="left:12.0px;top:223.0px" width="12" height="12" viewBox="0 0 12 12"><circle cx="6.5" cy="5.5" r="5" fill="#1a88d8"/><circle cx="3.5" cy="8.5" r="3" fill="#e8e8e8" stroke="#888" stroke-width="0.6"/></svg><div class="abs" style="left:30.5px;top:225.7px;font-size:7.4px;line-height:1;font-weight:normal;color:#1f1f1f;white-space:nowrap;">Hora e idioma</div><svg class="abs" style="left:12.0px;top:243.9px" width="12" height="12" viewBox="0 0 12 12"><rect x="1" y="3.5" width="10" height="5" rx="2.5" fill="#9aa4ac"/><circle cx="8" cy="6" r="1" fill="#eee"/></svg><div class="abs" style="left:30.5px;top:246.6px;font-size:7.4px;line-height:1;font-weight:normal;color:#1f1f1f;white-space:nowrap;">Jogos</div><svg class="abs" style="left:12.0px;top:264.6px" width="12" height="12" viewBox="0 0 12 12"><circle cx="6" cy="1.8" r="1.5" fill="#1a70c8"/><path d="M1 4L11 4M6 4V7L3 11M6 7L9 11" fill="none" stroke="#1a70c8" stroke-width="1.3"/></svg><div class="abs" style="left:30.5px;top:267.3px;font-size:7.4px;line-height:1;font-weight:normal;color:#1f1f1f;white-space:nowrap;">Acessibilidade</div><svg class="abs" style="left:12.0px;top:285.6px" width="12" height="12" viewBox="0 0 12 12"><path d="M6 0.5L11 2.5V6Q11 10 6 11.5Q1 10 1 6V2.5Z" fill="#9aa2aa"/><path d="M6 0.5V11.5Q11 10 11 6V2.5Z" fill="#7a848c"/></svg><div class="abs" style="left:30.5px;top:288.3px;font-size:7.4px;line-height:1;font-weight:normal;color:#1f1f1f;white-space:nowrap;">Privacidade e segurança</div><svg class="abs" style="left:12.0px;top:306.0px" width="12" height="12" viewBox="0 0 12 12"><circle cx="6" cy="6" r="5.5" fill="#1a80d8"/><path d="M3 5.5A3 3 0 0 1 8.5 4.5M9 6.5A3 3 0 0 1 3.5 7.5" fill="none" stroke="#fff" stroke-width="0.9"/></svg><div class="abs" style="left:30.5px;top:308.7px;font-size:7.4px;line-height:1;font-weight:normal;color:#1f1f1f;white-space:nowrap;">Windows Update</div><div class="abs" style="left:167.0px;top:32.0px;font-size:13.4px;line-height:1;font-weight:bold;color:#1b1b1b;white-space:nowrap;">Base</div><div class="abs" style="left:169px;top:63px;width:62px;height:35px;border-radius:4px;background:#111"></div><svg class="abs" style="left:171.0px;top:65.0px" width="58" height="31" viewBox="0 0 58 31"><defs><linearGradient id="lsky" x1="0" y1="0" x2="0" y2="1"><stop offset="0" stop-color="#8cbcc8"/><stop offset="1" stop-color="#d4e4e8"/></linearGradient><linearGradient id="llake" x1="0" y1="0" x2="0" y2="1"><stop offset="0" stop-color="#6aa8b0"/><stop offset="1" stop-color="#2a7888"/></linearGradient></defs><rect width="58" height="31" rx="2" fill="url(#lsky)"/><path d="M0 8L14 14L28 17L0 18Z" fill="#4a6a60"/><path d="M0 15L30 18L0 21Z" fill="#d8dcd8"/><rect y="18" width="58" height="13" fill="url(#llake)"/><path d="M40 21L58 19V26L46 23Z" fill="#c8c0a0"/><path d="M46 23L58 24V31L50 28Z" fill="#6a8a50"/><circle cx="37" cy="17" r="2.2" fill="#fff"/><ellipse cx="37" cy="17" rx="6" ry="2" fill="#fff" opacity="0.5"/></svg><div class="abs" style="left:239.0px;top:68.2px;font-size:8.6px;line-height:1;font-weight:bold;color:#1b1b1b;white-space:nowrap;">LAPTOP-08RL3TKB</div><div class="abs" style="left:239.0px;top:80.4px;font-size:6.6px;line-height:1;font-weight:normal;color:#333;white-space:nowrap;">Predator PT314-51s</div><div class="abs" style="left:239.0px;top:90.4px;font-size:7.3px;line-height:1;font-weight:normal;color:#a06a10;white-space:nowrap;">Mudar o Nome</div><svg class="abs" style="left:457.0px;top:74.0px" width="12" height="11" viewBox="0 0 12 11"><path d="M1 4.5Q6 0 11 4.5M2.8 6.3Q6 3.3 9.2 6.3M4.5 8Q6 6.7 7.5 8" fill="none" stroke="#2a8ad8" stroke-width="0.9"/><circle cx="6" cy="9.6" r="0.9" fill="#2a8ad8"/></svg><div class="abs" style="left:476.5px;top:71.7px;font-size:7.6px;line-height:1;font-weight:bold;color:#1b1b1b;white-space:nowrap;">GOOGOL</div><div class="abs" style="left:476.5px;top:83.1px;font-size:6.6px;line-height:1;font-weight:normal;color:#555;white-space:nowrap;">Ligado, seguro</div><svg class="abs" style="left:534.5px;top:75.0px" width="11" height="11" viewBox="0 0 11 11"><circle cx="5.5" cy="5.5" r="5.2" fill="#1a80d8"/><path d="M2.8 5A2.8 2.8 0 0 1 7.8 3.8M8.2 6A2.8 2.8 0 0 1 3.2 7.2" fill="none" stroke="#fff" stroke-width="0.9"/></svg><div class="abs" style="left:553.5px;top:71.8px;font-size:7.2px;line-height:1;font-weight:bold;color:#1b1b1b;white-space:nowrap;">Windows Update</div><div class="abs" style="left:554.0px;top:85.0px;width:2px;height:2px;background:#e8a000;border-radius:1px"></div><div class="abs" style="left:559.0px;top:83.4px;font-size:6.0px;line-height:1;font-weight:normal;color:#555;white-space:nowrap;">Atenção necessária</div><div class="abs" style="left:170.0px;top:115.0px;width:220px;height:161px;background:#fbfbfb;border-radius:5px;box-shadow:0 0 0 0.5px #e6e6e6"></div><div class="abs" style="left:181.0px;top:130.1px;font-size:10px;line-height:1;font-weight:bold;color:#1b1b1b;white-space:nowrap;font-weight:600">Definições recomendadas</div><div class="abs" style="left:181.0px;top:149.8px;font-size:7.2px;line-height:1;font-weight:normal;color:#555;white-space:nowrap;">Definições recentes e vulgarmente utilizadas</div><div class="abs" style="left:170.0px;top:169.0px;width:220px;height:1px;background:#ececec"></div><div class="abs" style="left:170.0px;top:205.0px;width:220px;height:1px;background:#ececec"></div><div class="abs" style="left:170.0px;top:241.5px;width:220px;height:1px;background:#ececec"></div><svg class="abs" style="left:181.5px;top:182.0px" width="12" height="12" viewBox="0 0 12 12"><path d="M1 2H3M1 6H3M1 10H3" stroke="#333" stroke-width="1.2"/><rect x="0.7" y="1.2" width="2.2" height="1.6" fill="none" stroke="#333" stroke-width="0.6"/><path d="M5 2H11M5 6H11M5 10H11" stroke="#333" stroke-width="0.8"/></svg><div class="abs" style="left:203.0px;top:184.9px;font-size:7px;line-height:1;font-weight:normal;color:#1f1f1f;white-space:nowrap;">Aplicações instaladas</div><svg class="abs" style="left:181.5px;top:218.0px" width="12" height="10" viewBox="0 0 12 10"><rect x="2" y="1" width="8" height="6" rx="0.8" fill="none" stroke="#333" stroke-width="0.8"/><path d="M0.5 8.5H11.5" stroke="#333" stroke-width="0.9"/></svg><div class="abs" style="left:203.0px;top:220.9px;font-size:7px;line-height:1;font-weight:normal;color:#1f1f1f;white-space:nowrap;">Ecrã</div><svg class="abs" style="left:182.0px;top:254.0px" width="11" height="11" viewBox="0 0 11 11"><circle cx="5.5" cy="5.5" r="4.6" fill="none" stroke="#222" stroke-width="0.9"/><path d="M5.5 0.9A4.6 4.6 0 0 0 5.5 10.1Z" fill="#222"/></svg><div class="abs" style="left:203.0px;top:256.4px;font-size:7px;line-height:1;font-weight:normal;color:#1f1f1f;white-space:nowrap;">Temas de contraste</div><svg class="abs" style="left:369.0px;top:184.0px" width="7" height="8" viewBox="0 0 7 8"><path d="M2 1L5.5 4L2 7" fill="none" stroke="#555" stroke-width="0.9"/></svg><svg class="abs" style="left:369.0px;top:220.0px" width="7" height="8" viewBox="0 0 7 8"><path d="M2 1L5.5 4L2 7" fill="none" stroke="#555" stroke-width="0.9"/></svg><svg class="abs" style="left:369.0px;top:255.5px" width="7" height="8" viewBox="0 0 7 8"><path d="M2 1L5.5 4L2 7" fill="none" stroke="#555" stroke-width="0.9"/></svg><div class="abs" style="left:170.0px;top:282.0px;width:220px;height:140px;background:#fbfbfb;border-radius:5px;box-shadow:0 0 0 0.5px #e6e6e6"></div><div class="abs" style="left:181.0px;top:297.6px;font-size:10px;line-height:1;font-weight:bold;color:#1b1b1b;white-space:nowrap;font-weight:600">Personalizar o seu dispositivo</div><svg width="0" height="0" style="position:absolute"><defs><linearGradient id="t1bg" x1="0" y1="0" x2="1" y2="1"><stop offset="0" stop-color="#a8c4dc"/><stop offset="1" stop-color="#d4e2ee"/></linearGradient><linearGradient id="t2bg" x1="0" y1="0" x2="1" y2="1"><stop offset="0" stop-color="#0a1428"/><stop offset="1" stop-color="#0a1a3c"/></linearGradient><radialGradient id="t4g"><stop offset="0" stop-color="#c030c8"/><stop offset="0.5" stop-color="#7a1aa8"/><stop offset="1" stop-color="#2a0a50" stop-opacity="0"/></radialGradient><linearGradient id="t6bg" x1="0" y1="0" x2="0" y2="1"><stop offset="0" stop-color="#9ec4d0"/><stop offset="1" stop-color="#d0e4e4"/></linearGradient></defs></svg><svg class="abs" style="left:182.0px;top:319.8px;border-radius:3px" width="58" height="46" viewBox="0 0 58 46"><clipPath id="c844374"><rect width="58" height="46" rx="3"/></clipPath><g clip-path="url(#c844374)"><rect width="58" height="46" fill="url(#t1bg)"/><g transform="translate(30,26)"><path d="M-18 18Q-22 4 -8 -4Q6 -14 18 -18Q26 -12 22 0Q14 14 2 22Z" fill="#1a4fd8"/><path d="M-14 16Q-16 4 -4 -2Q8 -10 18 -14Q22 -6 16 4Q8 14 -2 20Z" fill="#2f7cf6"/><path d="M-10 14Q-10 4 0 0Q10 -6 16 -8Q16 0 10 8Q4 14 -4 18Z" fill="#1550e0"/><path d="M-6 12Q-4 4 4 2Q10 -2 14 -2Q12 6 6 10Q2 14 -4 15Z" fill="#3a8af8"/></g><rect x="34" y="22.5" width="21.5" height="21.5" rx="2" fill="#e4e6ee"/><rect x="39.6" y="36.2" width="11.4" height="4" rx="1" fill="#1a78d0"/></g></svg><svg class="abs" style="left:244.3px;top:319.8px;border-radius:3px" width="58" height="46" viewBox="0 0 58 46"><clipPath id="c906374"><rect width="58" height="46" rx="3"/></clipPath><g clip-path="url(#c906374)"><rect width="58" height="46" fill="url(#t2bg)"/><g transform="translate(30,26)"><path d="M-18 18Q-22 4 -8 -4Q6 -14 18 -18Q26 -12 22 0Q14 14 2 22Z" fill="#1a4fd8"/><path d="M-14 16Q-16 4 -4 -2Q8 -10 18 -14Q22 -6 16 4Q8 14 -2 20Z" fill="#2f7cf6"/><path d="M-10 14Q-10 4 0 0Q10 -6 16 -8Q16 0 10 8Q4 14 -4 18Z" fill="#1550e0"/><path d="M-6 12Q-4 4 4 2Q10 -2 14 -2Q12 6 6 10Q2 14 -4 15Z" fill="#3a8af8"/></g><rect x="34" y="22.5" width="21.5" height="21.5" rx="2" fill="#1e2a5c"/><rect x="39.6" y="36.2" width="11.4" height="4" rx="1" fill="#1a78d0"/></g></svg><svg class="abs" style="left:306.8px;top:319.8px;border-radius:3px" width="58" height="46" viewBox="0 0 58 46"><clipPath id="c968374"><rect width="58" height="46" rx="3"/></clipPath><g clip-path="url(#c968374)"><rect width="20" height="46" fill="#9ac4e4"/><rect y="26" width="20" height="20" fill="#a88468"/><rect x="20" width="20" height="46" fill="#a8cce0"/><circle cx="30" cy="20" r="5" fill="#f4eeee"/><circle cx="26" cy="30" r="4" fill="#f0e8e8"/><rect x="40" width="18" height="46" fill="#b4a4cc"/><rect x="44" y="3" width="11" height="11" rx="2" fill="#6a6480"/><circle cx="49.5" cy="8.5" r="3.5" fill="none" stroke="#fff" stroke-width="0.8"/><rect x="34" y="22.5" width="21.5" height="21.5" rx="2" fill="#e6e6ee"/><rect x="39.6" y="36.2" width="11.4" height="4" rx="1" fill="#1a78d0"/></g></svg><svg class="abs" style="left:182.0px;top:370.7px;border-radius:3px" width="58" height="46" viewBox="0 0 58 46"><clipPath id="c844425"><rect width="58" height="46" rx="3"/></clipPath><g clip-path="url(#c844425)"><rect width="58" height="46" fill="#1a0a3a"/><circle cx="48" cy="42" r="34" fill="url(#t4g)"/><path d="M14 22Q16 40 40 46" fill="none" stroke="#ff40c0" stroke-width="1.2" opacity="0.8"/><rect x="34" y="22.5" width="21.5" height="21.5" rx="2" fill="#5a1e5e"/></g></svg><svg class="abs" style="left:244.3px;top:370.7px;border-radius:3px" width="58" height="46" viewBox="0 0 58 46"><clipPath id="c906425"><rect width="58" height="46" rx="3"/></clipPath><g clip-path="url(#c906425)"><rect width="58" height="46" fill="#0a0a10"/><path d="M12 30Q22 18 36 28L30 44Z" fill="#f03c78"/><path d="M30 20Q36 2 44 4Q42 20 34 32Z" fill="#f4b040"/><path d="M38 22Q50 12 58 14Q52 26 40 32Z" fill="#e86030"/><path d="M20 10Q28 14 32 26L26 28Z" fill="#e0d0f0" opacity="0.8"/><rect x="34" y="22.5" width="21.5" height="21.5" rx="2" fill="#3a2a34"/><rect x="39.6" y="44" width="11.4" height="4" fill="#d02020"/></g></svg><svg class="abs" style="left:306.8px;top:370.7px;border-radius:3px" width="58" height="46" viewBox="0 0 58 46"><clipPath id="c968425"><rect width="58" height="46" rx="3"/></clipPath><g clip-path="url(#c968425)"><rect width="58" height="46" fill="url(#t6bg)"/><path d="M0 14L20 18L58 26V30H0Z" fill="#4a6a6a"/><path d="M0 24L58 30V34H0Z" fill="#c8dcdc"/><rect y="34" width="58" height="12" fill="#5aa0a8"/><rect x="34" y="22.5" width="21.5" height="21.5" rx="2" fill="#e4eeee"/></g></svg><div class="abs" style="left:396.0px;top:115.0px;width:220px;height:132px;background:#fbfbfb;border-radius:5px;box-shadow:0 0 0 0.5px #e6e6e6"></div><svg class="abs" style="left:407.0px;top:128.0px" width="17" height="11" viewBox="0 0 17 11"><path d="M3.5 10.5Q0.5 10.5 0.5 7.8Q0.5 5.3 3.2 5.2Q4 1 8.5 1Q12.3 1 13.3 4.5Q16.5 4.8 16.5 7.6Q16.5 10.5 13.5 10.5Z" fill="#1070d0"/></svg><div class="abs" style="left:407.5px;top:153.1px;font-size:10px;line-height:1;font-weight:bold;color:#1b1b1b;white-space:nowrap;font-weight:600">Armazenamento na nuvem</div><div class="abs" style="left:407.5px;top:172.9px;font-size:7.15px;line-height:1;font-weight:normal;color:#555;white-space:nowrap;">Certifique-se de que o OneDrive está instalado no seu PC</div><div class="abs" style="left:407.5px;top:183.4px;font-size:7.1px;line-height:1;font-weight:normal;color:#555;white-space:nowrap;">para que possa ver os seus detalhes de armazenamento aqui.</div><div class="abs" style="left:408.0px;top:219.0px;width:74px;height:15.5px;background:#fdfdfd;border-radius:3px;box-shadow:0 0 0 0.6px #dcdcdc,0 0.8px 0 #cfcfcf"></div><div class="abs" style="left:414.0px;top:223.7px;font-size:7.05px;line-height:1;font-weight:normal;color:#1f1f1f;white-space:nowrap;">Instalar o OneDrive</div><div class="abs" style="left:396.0px;top:253.0px;width:220px;height:170px;background:#fbfbfb;border-radius:5px;box-shadow:0 0 0 0.5px #e6e6e6"></div><div class="abs" style="left:407.5px;top:268.2px;font-size:9.7px;line-height:1;font-weight:bold;color:#1b1b1b;white-space:nowrap;font-weight:600">Dispositivos Bluetooth</div><div class="abs" style="left:407.5px;top:287.3px;font-size:7.2px;line-height:1;font-weight:normal;color:#555;white-space:nowrap;">Gerir, adicionar e remover dispositivos</div><div class="abs" style="left:396.0px;top:307.0px;width:220px;height:1px;background:#ececec"></div><div class="abs" style="left:396.0px;top:343.0px;width:220px;height:1px;background:#ececec"></div><div class="abs" style="left:396.0px;top:379.0px;width:220px;height:1px;background:#ececec"></div><svg class="abs" style="left:410.0px;top:320.0px" width="8" height="12" viewBox="0 0 8 12"><path d="M1 3.5L6 8L3.5 10.5V1.5L6 4L1 8.5" fill="none" stroke="#333" stroke-width="0.8"/></svg><div class="abs" style="left:430.0px;top:319.3px;font-size:7.3px;line-height:1;font-weight:normal;color:#1f1f1f;white-space:nowrap;">Bluetooth</div><div class="abs" style="left:430.0px;top:329.4px;font-size:6.0px;line-height:1;font-weight:normal;color:#666;white-space:nowrap;">Detetável como "LAPTOP-08RL3TKB"</div><div class="abs" style="left:545.0px;top:323.4px;font-size:7px;line-height:1;font-weight:normal;color:#1f1f1f;white-space:nowrap;">Ligado</div><div class="abs" style="left:583.0px;top:321.5px;width:21px;height:10px;background:#e0a010;border-radius:5px"></div><div class="abs" style="left:596.5px;top:323.5px;width:6px;height:6px;background:#fff;border-radius:50%"></div><div class="abs" style="left:410.0px;top:355.5px;width:7px;height:11px;background:linear-gradient(90deg,#b8c0c4,#9aa6aa);border-radius:3.5px"></div><div class="abs" style="left:430.0px;top:355.4px;font-size:7px;line-height:1;font-weight:normal;color:#1f1f1f;white-space:nowrap;">Logi POP Mouse</div><div class="abs" style="left:430.0px;top:364.9px;font-size:6.4px;line-height:1;font-weight:normal;color:#666;white-space:nowrap;">Não ligado</div><div class="abs" style="left:589.0px;top:357.5px;font-size:8px;line-height:1;font-weight:bold;color:#222;white-space:nowrap;">···</div><div class="abs" style="left:410.0px;top:391.5px;width:7px;height:11px;background:linear-gradient(90deg,#b8c0c4,#9aa6aa);border-radius:3.5px"></div><div class="abs" style="left:430.0px;top:391.3px;font-size:7.2px;line-height:1;font-weight:normal;color:#1f1f1f;white-space:nowrap;">Bluetooth Travel Mouse</div><div class="abs" style="left:430.0px;top:401.0px;font-size:6.1px;line-height:1;font-weight:normal;color:#666;white-space:nowrap;">Emparelhado</div><div class="abs" style="left:589.0px;top:393.5px;font-size:8px;line-height:1;font-weight:bold;color:#222;white-space:nowrap;">···</div><div class="abs" style="left:627.0px;top:62.0px;width:1.2px;height:240px;background:#8a8a8a"></div></div></div>
<div class="ctl" style="left:755px;top:514px;background:radial-gradient(circle at 50% 35%,#fdfdfd,#f0f0f0 70%,#e8e8e8);box-shadow:0 1px 3px rgba(0,0,0,.2)"></div>
<svg class="abs" style="left:769px;top:527px" width="20" height="22" viewBox="0 0 20 22"><rect x="6.5" y="1" width="7" height="12" rx="3.5" fill="#3c4043"/><path d="M3.5 10Q3.5 16 10 16Q16.5 16 16.5 10" fill="none" stroke="#3c4043" stroke-width="1.6"/><path d="M10 16V20" stroke="#3c4043" stroke-width="1.6"/></svg>
<div class="ctl" style="left:887px;top:514px;background:radial-gradient(circle at 50% 35%,#fdfdfd,#f0f0f0 70%,#e8e8e8);box-shadow:0 1px 3px rgba(0,0,0,.2)"></div>
<svg class="abs" style="left:900px;top:527px" width="22" height="21" viewBox="0 0 21 20"><path d="M2 5.5Q2 4 3.5 4H6.5L8 2H13L14.5 4H17.5Q19 4 19 5.5V16Q19 17.5 17.5 17.5H3.5Q2 17.5 2 16Z" fill="#3c4043"/><circle cx="10.5" cy="10.5" r="3.8" fill="none" stroke="#fff" stroke-width="1.5"/></svg>
<div class="ctl" style="left:1018px;top:514px;background:radial-gradient(circle at 50% 40%,#2aa052,#1e8e3e);box-shadow:0 1px 3px rgba(0,0,0,.2)"></div>
<svg class="abs" style="left:1031px;top:529px" width="22" height="20" viewBox="0 0 22 20"><rect x="2" y="3" width="18" height="12" rx="1.5" fill="#fff"/><rect x="7" y="16" width="8" height="1.6" fill="#fff"/></svg>
<div class="ctl" style="left:1149px;top:514px;background:radial-gradient(circle at 50% 40%,#e64a3e,#cf3a2e);box-shadow:0 1px 3px rgba(0,0,0,.2)"></div>
<div class="abs" style="left:1163px;top:528px;width:20px;height:20px;border-radius:50%;background:#fff"></div>
<div class="lbl" style="left:721px;top:572px;font-size:13.4px;letter-spacing:0.2px">Microphone Off</div>
<svg class="abs" style="left:821px;top:576px" width="14" height="9" viewBox="0 0 14 9"><path d="M2 2L7 7L12 2" fill="none" stroke="#3c4043" stroke-width="2"/></svg>
<div class="lbl" style="left:864.5px;top:572px;font-size:13.4px;letter-spacing:0.1px">Camera Off</div>
<svg class="abs" style="left:940px;top:576px" width="14" height="9" viewBox="0 0 14 9"><path d="M2 2L7 7L12 2" fill="none" stroke="#3c4043" stroke-width="2"/></svg>
<div class="lbl" style="left:1011px;top:572px;font-size:13.2px">Screen On</div>
<div class="lbl" style="left:1126px;top:572px;font-size:13.4px">Start Recording</div>
</div></div><div id="scenes">
<div class="abs" style="left:0;top:51px;width:1373px;height:2px;background:#e6e8e8"></div>
<div class="abs" style="left:0;top:53px;width:95px;height:114px;background:#f7f8f8"></div>
</div>
<div class="abs" style="left:27px;top:630.9px;font-size:18.46px;line-height:1;font-weight:normal;color:#3c4043;white-space:nowrap;transform:scaleX(0.95);transform-origin:0 0;">Scenes</div>
<div class="abs" style="left:27px;top:695px;width:58px;height:58px;border-radius:50%;background:#f3f3f3;box-shadow:0 1px 3px rgba(0,0,0,.15)"></div>
<svg class="abs" style="left:44px;top:710px" width="26" height="28" viewBox="0 0 26 28"><path d="M4 3L23 14L4 25Z" fill="#8a8a8a"/></svg>
<div class="abs" style="left:112px;top:677px;width:157px;height:95px;border-radius:16px;padding:3px;background:linear-gradient(90deg,#ee3cae,#a02cc8 60%,#5a24b8);box-shadow:0 4px 14px rgba(150,80,220,.30)"><div style="width:100%;height:100%;border-radius:13px;background:#fff"></div></div>
<div class="abs" style="left:119px;top:683px;width:143px;height:81px;border-radius:11px;overflow:hidden;background:#050303"><div class="mini" style="position:absolute;left:0;top:0;width:787px;height:442px;transform:scale(0.1817,0.1833);transform-origin:0 0"><svg class="abs" style="left:0;top:0" width="787" height="442"><circle cx="490" cy="328" r="2.5" fill="#e8b418" opacity="0.8"/><circle cx="611" cy="110" r="2.5" fill="#e8b418" opacity="0.8"/><circle cx="89" cy="207" r="3" fill="#e8b418" opacity="0.5"/><circle cx="80" cy="110" r="3" fill="#e8b418" opacity="0.5"/><circle cx="143" cy="383" r="4" fill="#e8b418" opacity="0.4"/><circle cx="627" cy="61" r="4" fill="#e8b418" opacity="0.4"/><circle cx="1" cy="385" r="3" fill="#e8b418" opacity="0.8"/><circle cx="756" cy="73" r="3" fill="#e8b418" opacity="0.5"/><circle cx="757" cy="238" r="3" fill="#e8b418" opacity="0.4"/><circle cx="762" cy="87" r="4" fill="#e8b418" opacity="0.5"/><circle cx="284" cy="73" r="3" fill="#e8b418" opacity="0.5"/><circle cx="261" cy="361" r="2.5" fill="#e8b418" opacity="0.7"/><circle cx="557" cy="29" r="3.5" fill="#e8b418" opacity="0.8"/><circle cx="378" cy="140" r="4" fill="#e8b418" opacity="0.6"/><circle cx="139" cy="113" r="2.5" fill="#e8b418" opacity="0.9"/><circle cx="281" cy="179" r="4" fill="#e8b418" opacity="0.5"/><circle cx="455" cy="4" r="2.5" fill="#e8b418" opacity="0.7"/><circle cx="491" cy="422" r="2.5" fill="#e8b418" opacity="0.8"/><circle cx="732" cy="416" r="3.5" fill="#e8b418" opacity="0.6"/><circle cx="703" cy="111" r="4" fill="#e8b418" opacity="0.4"/><circle cx="589" cy="352" r="3.5" fill="#e8b418" opacity="0.3"/><circle cx="744" cy="40" r="3.5" fill="#e8b418" opacity="0.6"/><circle cx="285" cy="66" r="3.5" fill="#e8b418" opacity="0.9"/><circle cx="429" cy="138" r="3.5" fill="#e8b418" opacity="0.5"/><circle cx="629" cy="277" r="3.5" fill="#e8b418" opacity="0.9"/><circle cx="127" cy="21" r="4" fill="#e8b418" opacity="0.3"/><circle cx="583" cy="152" r="3.5" fill="#e8b418" opacity="0.6"/><circle cx="332" cy="25" r="2.5" fill="#e8b418" opacity="0.8"/><circle cx="263" cy="92" r="3" fill="#e8b418" opacity="0.7"/><circle cx="620" cy="47" r="4" fill="#e8b418" opacity="0.5"/><circle cx="46" cy="186" r="3" fill="#e8b418" opacity="0.6"/><circle cx="786" cy="377" r="4" fill="#e8b418" opacity="0.9"/><circle cx="542" cy="140" r="3.5" fill="#e8b418" opacity="0.5"/><circle cx="318" cy="65" r="4" fill="#e8b418" opacity="0.8"/><circle cx="418" cy="79" r="4" fill="#e8b418" opacity="0.8"/><circle cx="142" cy="217" r="3.5" fill="#e8b418" opacity="0.3"/><circle cx="626" cy="157" r="2.5" fill="#e8b418" opacity="0.8"/><circle cx="286" cy="311" r="3.5" fill="#e8b418" opacity="0.8"/><circle cx="208" cy="434" r="3.5" fill="#e8b418" opacity="0.9"/><circle cx="268" cy="79" r="2.5" fill="#e8b418" opacity="0.6"/><circle cx="609" cy="144" r="3.5" fill="#e8b418" opacity="0.6"/><circle cx="643" cy="286" r="3.5" fill="#e8b418" opacity="0.5"/><circle cx="507" cy="326" r="4" fill="#e8b418" opacity="0.5"/><circle cx="663" cy="385" r="4" fill="#e8b418" opacity="0.9"/><circle cx="753" cy="229" r="3" fill="#e8b418" opacity="0.4"/><circle cx="285" cy="377" r="3.5" fill="#e8b418" opacity="0.7"/><circle cx="566" cy="323" r="3" fill="#e8b418" opacity="0.7"/><circle cx="737" cy="228" r="4" fill="#e8b418" opacity="0.5"/><circle cx="435" cy="383" r="3.5" fill="#e8b418" opacity="0.7"/><circle cx="22" cy="71" r="4" fill="#e8b418" opacity="0.7"/><circle cx="142" cy="335" r="3" fill="#e8b418" opacity="0.7"/><circle cx="33" cy="208" r="3" fill="#e8b418" opacity="0.4"/><circle cx="702" cy="49" r="3" fill="#e8b418" opacity="0.6"/><circle cx="432" cy="184" r="3.5" fill="#e8b418" opacity="0.5"/><circle cx="481" cy="261" r="3" fill="#e8b418" opacity="0.7"/><circle cx="294" cy="155" r="3.5" fill="#e8b418" opacity="0.8"/><circle cx="682" cy="304" r="3.5" fill="#e8b418" opacity="0.9"/><circle cx="433" cy="133" r="3.5" fill="#e8b418" opacity="0.6"/><circle cx="267" cy="257" r="3.5" fill="#e8b418" opacity="0.8"/><circle cx="330" cy="359" r="3.5" fill="#e8b418" opacity="0.6"/><circle cx="123" cy="169" r="4" fill="#e8b418" opacity="0.9"/><circle cx="762" cy="269" r="3.5" fill="#e8b418" opacity="0.8"/><circle cx="521" cy="169" r="3.5" fill="#e8b418" opacity="0.6"/><circle cx="484" cy="62" r="4" fill="#e8b418" opacity="0.6"/><circle cx="769" cy="218" r="4" fill="#e8b418" opacity="0.9"/><circle cx="299" cy="425" r="3" fill="#e8b418" opacity="0.7"/><circle cx="204" cy="434" r="4" fill="#e8b418" opacity="0.5"/><circle cx="15" cy="418" r="3.5" fill="#e8b418" opacity="0.6"/><circle cx="225" cy="211" r="2.5" fill="#e8b418" opacity="0.7"/><circle cx="756" cy="109" r="2.5" fill="#e8b418" opacity="0.8"/><circle cx="651" cy="6" r="3.5" fill="#e8b418" opacity="0.4"/><circle cx="373" cy="16" r="4" fill="#e8b418" opacity="0.5"/><circle cx="122" cy="437" r="3.5" fill="#e8b418" opacity="0.6"/><circle cx="781" cy="229" r="2.5" fill="#e8b418" opacity="0.3"/><circle cx="99" cy="125" r="3.5" fill="#e8b418" opacity="0.7"/><circle cx="576" cy="12" r="3.5" fill="#e8b418" opacity="0.5"/><circle cx="586" cy="261" r="2.5" fill="#e8b418" opacity="0.3"/><circle cx="435" cy="303" r="2.5" fill="#e8b418" opacity="0.8"/><circle cx="429" cy="6" r="4" fill="#e8b418" opacity="0.7"/><circle cx="542" cy="421" r="4" fill="#e8b418" opacity="0.8"/><circle cx="662" cy="210" r="3" fill="#e8b418" opacity="0.8"/><circle cx="366" cy="335" r="3.5" fill="#e8b418" opacity="0.8"/><circle cx="547" cy="191" r="3.5" fill="#e8b418" opacity="0.7"/><circle cx="372" cy="137" r="3" fill="#e8b418" opacity="0.6"/><circle cx="432" cy="220" r="3.5" fill="#e8b418" opacity="0.6"/><circle cx="335" cy="239" r="2.5" fill="#e8b418" opacity="0.3"/><circle cx="181" cy="362" r="2.5" fill="#e8b418" opacity="0.7"/><circle cx="20" cy="319" r="2.5" fill="#e8b418" opacity="0.9"/><circle cx="552" cy="22" r="2.5" fill="#e8b418" opacity="0.4"/><circle cx="508" cy="421" r="3" fill="#e8b418" opacity="0.9"/><circle cx="555" cy="194" r="3" fill="#e8b418" opacity="0.7"/><circle cx="326" cy="71" r="3" fill="#e8b418" opacity="0.3"/><circle cx="85" cy="168" r="2.5" fill="#e8b418" opacity="0.5"/><circle cx="449" cy="52" r="4" fill="#e8b418" opacity="0.8"/><circle cx="106" cy="191" r="3.5" fill="#e8b418" opacity="0.7"/><circle cx="385" cy="156" r="3.5" fill="#e8b418" opacity="0.8"/><circle cx="109" cy="130" r="3.5" fill="#e8b418" opacity="0.8"/><circle cx="437" cy="274" r="3.5" fill="#e8b418" opacity="0.3"/><circle cx="185" cy="368" r="3.5" fill="#e8b418" opacity="0.6"/><circle cx="105" cy="104" r="3.5" fill="#e8b418" opacity="0.6"/><circle cx="306" cy="58" r="2.5" fill="#e8b418" opacity="0.7"/><circle cx="67" cy="295" r="2.5" fill="#e8b418" opacity="0.8"/><circle cx="399" cy="200" r="4" fill="#e8b418" opacity="0.8"/><circle cx="378" cy="143" r="2.5" fill="#e8b418" opacity="0.6"/><circle cx="303" cy="375" r="4" fill="#e8b418" opacity="0.7"/><circle cx="176" cy="51" r="4" fill="#e8b418" opacity="0.8"/><circle cx="110" cy="276" r="3.5" fill="#e8b418" opacity="0.8"/><circle cx="228" cy="411" r="3.5" fill="#e8b418" opacity="0.8"/><circle cx="298" cy="319" r="3.5" fill="#e8b418" opacity="0.7"/><circle cx="633" cy="192" r="3.5" fill="#e8b418" opacity="0.6"/><circle cx="466" cy="253" r="3" fill="#e8b418" opacity="0.5"/><circle cx="76" cy="15" r="3" fill="#e8b418" opacity="0.4"/><circle cx="386" cy="414" r="3.5" fill="#e8b418" opacity="0.3"/><circle cx="370" cy="393" r="4" fill="#e8b418" opacity="0.5"/><circle cx="364" cy="85" r="3" fill="#e8b418" opacity="0.3"/><circle cx="684" cy="384" r="4" fill="#e8b418" opacity="0.4"/><circle cx="200" cy="123" r="3" fill="#e8b418" opacity="0.8"/><circle cx="529" cy="15" r="2.5" fill="#e8b418" opacity="0.5"/><circle cx="592" cy="140" r="2.5" fill="#e8b418" opacity="0.7"/><circle cx="530" cy="209" r="3" fill="#e8b418" opacity="0.4"/><circle cx="526" cy="129" r="3" fill="#e8b418" opacity="0.7"/><circle cx="128" cy="89" r="2.5" fill="#e8b418" opacity="0.6"/><circle cx="517" cy="273" r="3.5" fill="#e8b418" opacity="0.7"/><circle cx="145" cy="160" r="2.5" fill="#e8b418" opacity="0.7"/><circle cx="565" cy="72" r="3" fill="#e8b418" opacity="0.4"/><circle cx="164" cy="19" r="4" fill="#e8b418" opacity="0.7"/><circle cx="213" cy="204" r="4" fill="#e8b418" opacity="0.8"/><circle cx="323" cy="20" r="3.5" fill="#e8b418" opacity="0.9"/><circle cx="564" cy="105" r="4" fill="#e8b418" opacity="0.4"/><circle cx="371" cy="302" r="2.5" fill="#e8b418" opacity="0.6"/><circle cx="615" cy="21" r="4" fill="#e8b418" opacity="0.6"/><circle cx="504" cy="387" r="3" fill="#e8b418" opacity="0.4"/><circle cx="400" cy="178" r="3" fill="#e8b418" opacity="0.4"/><circle cx="247" cy="48" r="3" fill="#e8b418" opacity="0.7"/><circle cx="674" cy="95" r="2.5" fill="#e8b418" opacity="0.6"/><circle cx="281" cy="187" r="4" fill="#e8b418" opacity="0.6"/><circle cx="104" cy="5" r="3.5" fill="#e8b418" opacity="0.7"/><circle cx="702" cy="442" r="2.5" fill="#e8b418" opacity="0.4"/><circle cx="380" cy="345" r="3.5" fill="#e8b418" opacity="0.8"/><circle cx="246" cy="57" r="2.5" fill="#e8b418" opacity="0.6"/><circle cx="549" cy="353" r="3" fill="#e8b418" opacity="0.5"/><circle cx="388" cy="110" r="3" fill="#e8b418" opacity="0.8"/><circle cx="695" cy="391" r="2.5" fill="#e8b418" opacity="0.6"/><circle cx="247" cy="333" r="2.5" fill="#e8b418" opacity="0.8"/><circle cx="515" cy="336" r="2.5" fill="#e8b418" opacity="0.6"/><circle cx="643" cy="290" r="2.5" fill="#e8b418" opacity="0.7"/><circle cx="552" cy="118" r="4" fill="#e8b418" opacity="0.6"/><circle cx="253" cy="135" r="3" fill="#e8b418" opacity="0.5"/><circle cx="532" cy="126" r="2.5" fill="#e8b418" opacity="0.6"/><circle cx="582" cy="12" r="2.5" fill="#e8b418" opacity="0.3"/><circle cx="102" cy="158" r="3.5" fill="#e8b418" opacity="0.9"/><circle cx="482" cy="102" r="4" fill="#e8b418" opacity="0.4"/><circle cx="158" cy="158" r="3" fill="#e8b418" opacity="0.7"/><circle cx="651" cy="321" r="2.5" fill="#e8b418" opacity="0.5"/><circle cx="477" cy="279" r="3" fill="#e8b418" opacity="0.6"/><circle cx="739" cy="351" r="2.5" fill="#e8b418" opacity="0.5"/><circle cx="351" cy="101" r="4" fill="#e8b418" opacity="0.4"/><circle cx="38" cy="295" r="3" fill="#e8b418" opacity="0.6"/><circle cx="763" cy="263" r="2.5" fill="#e8b418" opacity="0.4"/><circle cx="669" cy="303" r="3" fill="#e8b418" opacity="0.9"/></svg><div  class="abs" style="left:79px;top:17px;width:629px;height:408px;background:#f3f3f3;overflow:hidden;border-radius:3px 3px 0 0;box-shadow:0 0 0 1px #2a2a2a"><svg class="abs" style="left:7.0px;top:7.0px" width="11" height="10" viewBox="0 0 11 10"><path d="M9.5 5H1.5M5 1.5L1.5 5L5 8.5" fill="none" stroke="#8a8a8a" stroke-width="0.9"/></svg><div class="abs" style="left:26.0px;top:9.7px;font-size:6.3px;line-height:1;font-weight:normal;color:#333;white-space:nowrap;">Definições</div><div class="abs" style="left:181.5px;top:4.5px;width:267px;height:16px;background:#fbfbfb;border-radius:8px;border-bottom:1px solid #d6d6d6;box-shadow:0 0 0 0.5px #e2e2e2"></div><svg class="abs" style="left:187.0px;top:7.0px" width="11" height="11" viewBox="0 0 11 11"><circle cx="4.5" cy="4.5" r="3.2" fill="none" stroke="#444" stroke-width="0.9"/><path d="M6.8 6.8L9.5 9.5" stroke="#444" stroke-width="0.9"/></svg><div class="abs" style="left:202.0px;top:9.3px;font-size:7.2px;line-height:1;font-weight:normal;color:#555;white-space:nowrap;">Procurar uma definição</div><div class="abs" style="left:566.0px;top:7.5px;width:6px;height:0.8px;background:#aaa"></div><div class="abs" style="left:591.0px;top:5.0px;width:5.5px;height:5.5px;border:0.8px solid #8a8a8a"></div><svg class="abs" style="left:614.5px;top:4.5px" width="6" height="6" viewBox="0 0 6 6"><path d="M0.5 0.5L5.5 5.5M5.5 0.5L0.5 5.5" stroke="#8a8a8a" stroke-width="0.8"/></svg><svg class="abs" style="left:7.5px;top:28.0px" width="32" height="32" viewBox="0 0 32 32"><defs><clipPath id="avc"><circle cx="16" cy="16" r="15.8"/></clipPath></defs><g clip-path="url(#avc)"><rect width="32" height="32" fill="#1a1e24"/><path d="M0 26Q8 22 14 28L12 32H0Z" fill="#1e7ab0"/><path d="M20 30Q26 24 32 26V32H20Z" fill="#1e7ab0"/><ellipse cx="17" cy="17" rx="8.5" ry="11" fill="#c99a7e"/><path d="M8 10Q10 3 18 3Q26 3 27 11Q22 7 17 8Q11 8 8 12Z" fill="#2a2624"/><path d="M10 20Q12 28 17 29Q23 28 25 20Q22 24 17 24Q12 24 10 20Z" fill="#5a4232" opacity="0.85"/><rect x="11.5" y="14" width="3" height="1.2" fill="#3a2a22"/><rect x="19.5" y="14" width="3" height="1.2" fill="#3a2a22"/></g></svg><svg class="abs" style="left:21.0px;top:29.0px" width="8" height="11" viewBox="0 0 8 11"><path d="M1 1L1 9L3 7L5 10L6 9.5L4.5 6.5L7 6.5Z" fill="#fff" stroke="#222" stroke-width="0.6"/></svg><div class="abs" style="left:45.0px;top:38.0px;font-size:6.9px;line-height:1;font-weight:bold;color:#1b1b1b;white-space:nowrap;">Ricardo Durand</div><div class="abs" style="left:45.0px;top:46.8px;font-size:6.4px;line-height:1;font-weight:normal;color:#333;white-space:nowrap;">ricardodurand@gmail.com</div><div class="abs" style="left:8.0px;top:74.0px;width:145px;height:19px;background:#e9e9e9;border-radius:4px"></div><div class="abs" style="left:8.5px;top:80.0px;width:2px;height:8px;background:#e0a020;border-radius:1px"></div><svg class="abs" style="left:12.0px;top:78.2px" width="12" height="12" viewBox="0 0 12 12"><path d="M1 6L6 1.5L11 6V11H1Z" fill="#e8e8e8" stroke="#e07020" stroke-width="1.1"/><rect x="4.5" y="7.5" width="3" height="3.5" fill="#b0b0b0"/></svg><div class="abs" style="left:30.5px;top:80.9px;font-size:7.4px;line-height:1;font-weight:normal;color:#1f1f1f;white-space:nowrap;">Base</div><svg class="abs" style="left:12.0px;top:99.0px" width="12" height="12" viewBox="0 0 12 12"><rect x="0.5" y="2" width="11" height="8" fill="#1a8fd0"/><rect x="0.5" y="2" width="11" height="3" fill="#38b0e8"/></svg><div class="abs" style="left:30.5px;top:101.7px;font-size:7.4px;line-height:1;font-weight:normal;color:#1f1f1f;white-space:nowrap;">Sistema</div><svg class="abs" style="left:12.0px;top:119.5px" width="12" height="12" viewBox="0 0 12 12"><ellipse cx="6" cy="6" rx="4.3" ry="5.5" fill="#1e7fe0"/><path d="M4 4L8 7.5L6 9V3L8 4.5L4 8" fill="none" stroke="#fff" stroke-width="0.8"/></svg><div class="abs" style="left:30.5px;top:122.2px;font-size:7.4px;line-height:1;font-weight:normal;color:#1f1f1f;white-space:nowrap;">Bluetooth e dispositivos</div><svg class="abs" style="left:12.0px;top:140.3px" width="12" height="12" viewBox="0 0 12 12"><path d="M0.5 4Q6 0 11.5 4L6 10Z" fill="#2090e0"/><path d="M2.5 5Q6 2.5 9.5 5L6 9Z" fill="#50c0f8"/></svg><div class="abs" style="left:30.5px;top:143.0px;font-size:7.4px;line-height:1;font-weight:normal;color:#1f1f1f;white-space:nowrap;">Rede e Internet</div><svg class="abs" style="left:12.0px;top:161.0px" width="12" height="12" viewBox="0 0 12 12"><path d="M10.5 1L4 8L3 9.5" stroke="#8a8a9a" stroke-width="1.5"/><path d="M4.5 7.5Q1.5 8 1 11Q4 11 5 8.5Z" fill="#e07030"/></svg><div class="abs" style="left:30.5px;top:163.7px;font-size:7.4px;line-height:1;font-weight:normal;color:#1f1f1f;white-space:nowrap;">Personalização</div><svg class="abs" style="left:12.0px;top:181.7px" width="12" height="12" viewBox="0 0 12 12"><rect x="0.5" y="3" width="5" height="4" fill="#4a5a6a"/><rect x="0.5" y="7.5" width="5" height="4" fill="#5a6a7a"/><rect x="6" y="7.5" width="5" height="4" fill="#3a4a5a"/><path d="M6.5 5L9 1L11.5 5L9 7Z" fill="#1a80d0"/></svg><div class="abs" style="left:30.5px;top:184.4px;font-size:7.4px;line-height:1;font-weight:normal;color:#1f1f1f;white-space:nowrap;">Aplicações</div><svg class="abs" style="left:12.0px;top:202.2px" width="12" height="12" viewBox="0 0 12 12"><circle cx="6" cy="3.5" r="2.8" fill="#20b0a0"/><path d="M1.5 11Q1.5 6.8 6 6.8Q10.5 6.8 10.5 11Z" fill="#20b0a0"/></svg><div class="abs" style="left:30.5px;top:204.9px;font-size:7.4px;line-height:1;font-weight:normal;color:#1f1f1f;white-space:nowrap;">Contas</div><svg class="abs" style="left:12.0px;top:223.0px" width="12" height="12" viewBox="0 0 12 12"><circle cx="6.5" cy="5.5" r="5" fill="#1a88d8"/><circle cx="3.5" cy="8.5" r="3" fill="#e8e8e8" stroke="#888" stroke-width="0.6"/></svg><div class="abs" style="left:30.5px;top:225.7px;font-size:7.4px;line-height:1;font-weight:normal;color:#1f1f1f;white-space:nowrap;">Hora e idioma</div><svg class="abs" style="left:12.0px;top:243.9px" width="12" height="12" viewBox="0 0 12 12"><rect x="1" y="3.5" width="10" height="5" rx="2.5" fill="#9aa4ac"/><circle cx="8" cy="6" r="1" fill="#eee"/></svg><div class="abs" style="left:30.5px;top:246.6px;font-size:7.4px;line-height:1;font-weight:normal;color:#1f1f1f;white-space:nowrap;">Jogos</div><svg class="abs" style="left:12.0px;top:264.6px" width="12" height="12" viewBox="0 0 12 12"><circle cx="6" cy="1.8" r="1.5" fill="#1a70c8"/><path d="M1 4L11 4M6 4V7L3 11M6 7L9 11" fill="none" stroke="#1a70c8" stroke-width="1.3"/></svg><div class="abs" style="left:30.5px;top:267.3px;font-size:7.4px;line-height:1;font-weight:normal;color:#1f1f1f;white-space:nowrap;">Acessibilidade</div><svg class="abs" style="left:12.0px;top:285.6px" width="12" height="12" viewBox="0 0 12 12"><path d="M6 0.5L11 2.5V6Q11 10 6 11.5Q1 10 1 6V2.5Z" fill="#9aa2aa"/><path d="M6 0.5V11.5Q11 10 11 6V2.5Z" fill="#7a848c"/></svg><div class="abs" style="left:30.5px;top:288.3px;font-size:7.4px;line-height:1;font-weight:normal;color:#1f1f1f;white-space:nowrap;">Privacidade e segurança</div><svg class="abs" style="left:12.0px;top:306.0px" width="12" height="12" viewBox="0 0 12 12"><circle cx="6" cy="6" r="5.5" fill="#1a80d8"/><path d="M3 5.5A3 3 0 0 1 8.5 4.5M9 6.5A3 3 0 0 1 3.5 7.5" fill="none" stroke="#fff" stroke-width="0.9"/></svg><div class="abs" style="left:30.5px;top:308.7px;font-size:7.4px;line-height:1;font-weight:normal;color:#1f1f1f;white-space:nowrap;">Windows Update</div><div class="abs" style="left:167.0px;top:32.0px;font-size:13.4px;line-height:1;font-weight:bold;color:#1b1b1b;white-space:nowrap;">Base</div><div class="abs" style="left:169px;top:63px;width:62px;height:35px;border-radius:4px;background:#111"></div><svg class="abs" style="left:171.0px;top:65.0px" width="58" height="31" viewBox="0 0 58 31"><defs><linearGradient id="lsky" x1="0" y1="0" x2="0" y2="1"><stop offset="0" stop-color="#8cbcc8"/><stop offset="1" stop-color="#d4e4e8"/></linearGradient><linearGradient id="llake" x1="0" y1="0" x2="0" y2="1"><stop offset="0" stop-color="#6aa8b0"/><stop offset="1" stop-color="#2a7888"/></linearGradient></defs><rect width="58" height="31" rx="2" fill="url(#lsky)"/><path d="M0 8L14 14L28 17L0 18Z" fill="#4a6a60"/><path d="M0 15L30 18L0 21Z" fill="#d8dcd8"/><rect y="18" width="58" height="13" fill="url(#llake)"/><path d="M40 21L58 19V26L46 23Z" fill="#c8c0a0"/><path d="M46 23L58 24V31L50 28Z" fill="#6a8a50"/><circle cx="37" cy="17" r="2.2" fill="#fff"/><ellipse cx="37" cy="17" rx="6" ry="2" fill="#fff" opacity="0.5"/></svg><div class="abs" style="left:239.0px;top:68.2px;font-size:8.6px;line-height:1;font-weight:bold;color:#1b1b1b;white-space:nowrap;">LAPTOP-08RL3TKB</div><div class="abs" style="left:239.0px;top:80.4px;font-size:6.6px;line-height:1;font-weight:normal;color:#333;white-space:nowrap;">Predator PT314-51s</div><div class="abs" style="left:239.0px;top:90.4px;font-size:7.3px;line-height:1;font-weight:normal;color:#a06a10;white-space:nowrap;">Mudar o Nome</div><svg class="abs" style="left:457.0px;top:74.0px" width="12" height="11" viewBox="0 0 12 11"><path d="M1 4.5Q6 0 11 4.5M2.8 6.3Q6 3.3 9.2 6.3M4.5 8Q6 6.7 7.5 8" fill="none" stroke="#2a8ad8" stroke-width="0.9"/><circle cx="6" cy="9.6" r="0.9" fill="#2a8ad8"/></svg><div class="abs" style="left:476.5px;top:71.7px;font-size:7.6px;line-height:1;font-weight:bold;color:#1b1b1b;white-space:nowrap;">GOOGOL</div><div class="abs" style="left:476.5px;top:83.1px;font-size:6.6px;line-height:1;font-weight:normal;color:#555;white-space:nowrap;">Ligado, seguro</div><svg class="abs" style="left:534.5px;top:75.0px" width="11" height="11" viewBox="0 0 11 11"><circle cx="5.5" cy="5.5" r="5.2" fill="#1a80d8"/><path d="M2.8 5A2.8 2.8 0 0 1 7.8 3.8M8.2 6A2.8 2.8 0 0 1 3.2 7.2" fill="none" stroke="#fff" stroke-width="0.9"/></svg><div class="abs" style="left:553.5px;top:71.8px;font-size:7.2px;line-height:1;font-weight:bold;color:#1b1b1b;white-space:nowrap;">Windows Update</div><div class="abs" style="left:554.0px;top:85.0px;width:2px;height:2px;background:#e8a000;border-radius:1px"></div><div class="abs" style="left:559.0px;top:83.4px;font-size:6.0px;line-height:1;font-weight:normal;color:#555;white-space:nowrap;">Atenção necessária</div><div class="abs" style="left:170.0px;top:115.0px;width:220px;height:161px;background:#fbfbfb;border-radius:5px;box-shadow:0 0 0 0.5px #e6e6e6"></div><div class="abs" style="left:181.0px;top:130.1px;font-size:10px;line-height:1;font-weight:bold;color:#1b1b1b;white-space:nowrap;font-weight:600">Definições recomendadas</div><div class="abs" style="left:181.0px;top:149.8px;font-size:7.2px;line-height:1;font-weight:normal;color:#555;white-space:nowrap;">Definições recentes e vulgarmente utilizadas</div><div class="abs" style="left:170.0px;top:169.0px;width:220px;height:1px;background:#ececec"></div><div class="abs" style="left:170.0px;top:205.0px;width:220px;height:1px;background:#ececec"></div><div class="abs" style="left:170.0px;top:241.5px;width:220px;height:1px;background:#ececec"></div><svg class="abs" style="left:181.5px;top:182.0px" width="12" height="12" viewBox="0 0 12 12"><path d="M1 2H3M1 6H3M1 10H3" stroke="#333" stroke-width="1.2"/><rect x="0.7" y="1.2" width="2.2" height="1.6" fill="none" stroke="#333" stroke-width="0.6"/><path d="M5 2H11M5 6H11M5 10H11" stroke="#333" stroke-width="0.8"/></svg><div class="abs" style="left:203.0px;top:184.9px;font-size:7px;line-height:1;font-weight:normal;color:#1f1f1f;white-space:nowrap;">Aplicações instaladas</div><svg class="abs" style="left:181.5px;top:218.0px" width="12" height="10" viewBox="0 0 12 10"><rect x="2" y="1" width="8" height="6" rx="0.8" fill="none" stroke="#333" stroke-width="0.8"/><path d="M0.5 8.5H11.5" stroke="#333" stroke-width="0.9"/></svg><div class="abs" style="left:203.0px;top:220.9px;font-size:7px;line-height:1;font-weight:normal;color:#1f1f1f;white-space:nowrap;">Ecrã</div><svg class="abs" style="left:182.0px;top:254.0px" width="11" height="11" viewBox="0 0 11 11"><circle cx="5.5" cy="5.5" r="4.6" fill="none" stroke="#222" stroke-width="0.9"/><path d="M5.5 0.9A4.6 4.6 0 0 0 5.5 10.1Z" fill="#222"/></svg><div class="abs" style="left:203.0px;top:256.4px;font-size:7px;line-height:1;font-weight:normal;color:#1f1f1f;white-space:nowrap;">Temas de contraste</div><svg class="abs" style="left:369.0px;top:184.0px" width="7" height="8" viewBox="0 0 7 8"><path d="M2 1L5.5 4L2 7" fill="none" stroke="#555" stroke-width="0.9"/></svg><svg class="abs" style="left:369.0px;top:220.0px" width="7" height="8" viewBox="0 0 7 8"><path d="M2 1L5.5 4L2 7" fill="none" stroke="#555" stroke-width="0.9"/></svg><svg class="abs" style="left:369.0px;top:255.5px" width="7" height="8" viewBox="0 0 7 8"><path d="M2 1L5.5 4L2 7" fill="none" stroke="#555" stroke-width="0.9"/></svg><div class="abs" style="left:170.0px;top:282.0px;width:220px;height:140px;background:#fbfbfb;border-radius:5px;box-shadow:0 0 0 0.5px #e6e6e6"></div><div class="abs" style="left:181.0px;top:297.6px;font-size:10px;line-height:1;font-weight:bold;color:#1b1b1b;white-space:nowrap;font-weight:600">Personalizar o seu dispositivo</div><svg width="0" height="0" style="position:absolute"><defs><linearGradient id="t1bg" x1="0" y1="0" x2="1" y2="1"><stop offset="0" stop-color="#a8c4dc"/><stop offset="1" stop-color="#d4e2ee"/></linearGradient><linearGradient id="t2bg" x1="0" y1="0" x2="1" y2="1"><stop offset="0" stop-color="#0a1428"/><stop offset="1" stop-color="#0a1a3c"/></linearGradient><radialGradient id="t4g"><stop offset="0" stop-color="#c030c8"/><stop offset="0.5" stop-color="#7a1aa8"/><stop offset="1" stop-color="#2a0a50" stop-opacity="0"/></radialGradient><linearGradient id="t6bg" x1="0" y1="0" x2="0" y2="1"><stop offset="0" stop-color="#9ec4d0"/><stop offset="1" stop-color="#d0e4e4"/></linearGradient></defs></svg><svg class="abs" style="left:182.0px;top:319.8px;border-radius:3px" width="58" height="46" viewBox="0 0 58 46"><clipPath id="c844374"><rect width="58" height="46" rx="3"/></clipPath><g clip-path="url(#c844374)"><rect width="58" height="46" fill="url(#t1bg)"/><g transform="translate(30,26)"><path d="M-18 18Q-22 4 -8 -4Q6 -14 18 -18Q26 -12 22 0Q14 14 2 22Z" fill="#1a4fd8"/><path d="M-14 16Q-16 4 -4 -2Q8 -10 18 -14Q22 -6 16 4Q8 14 -2 20Z" fill="#2f7cf6"/><path d="M-10 14Q-10 4 0 0Q10 -6 16 -8Q16 0 10 8Q4 14 -4 18Z" fill="#1550e0"/><path d="M-6 12Q-4 4 4 2Q10 -2 14 -2Q12 6 6 10Q2 14 -4 15Z" fill="#3a8af8"/></g><rect x="34" y="22.5" width="21.5" height="21.5" rx="2" fill="#e4e6ee"/><rect x="39.6" y="36.2" width="11.4" height="4" rx="1" fill="#1a78d0"/></g></svg><svg class="abs" style="left:244.3px;top:319.8px;border-radius:3px" width="58" height="46" viewBox="0 0 58 46"><clipPath id="c906374"><rect width="58" height="46" rx="3"/></clipPath><g clip-path="url(#c906374)"><rect width="58" height="46" fill="url(#t2bg)"/><g transform="translate(30,26)"><path d="M-18 18Q-22 4 -8 -4Q6 -14 18 -18Q26 -12 22 0Q14 14 2 22Z" fill="#1a4fd8"/><path d="M-14 16Q-16 4 -4 -2Q8 -10 18 -14Q22 -6 16 4Q8 14 -2 20Z" fill="#2f7cf6"/><path d="M-10 14Q-10 4 0 0Q10 -6 16 -8Q16 0 10 8Q4 14 -4 18Z" fill="#1550e0"/><path d="M-6 12Q-4 4 4 2Q10 -2 14 -2Q12 6 6 10Q2 14 -4 15Z" fill="#3a8af8"/></g><rect x="34" y="22.5" width="21.5" height="21.5" rx="2" fill="#1e2a5c"/><rect x="39.6" y="36.2" width="11.4" height="4" rx="1" fill="#1a78d0"/></g></svg><svg class="abs" style="left:306.8px;top:319.8px;border-radius:3px" width="58" height="46" viewBox="0 0 58 46"><clipPath id="c968374"><rect width="58" height="46" rx="3"/></clipPath><g clip-path="url(#c968374)"><rect width="20" height="46" fill="#9ac4e4"/><rect y="26" width="20" height="20" fill="#a88468"/><rect x="20" width="20" height="46" fill="#a8cce0"/><circle cx="30" cy="20" r="5" fill="#f4eeee"/><circle cx="26" cy="30" r="4" fill="#f0e8e8"/><rect x="40" width="18" height="46" fill="#b4a4cc"/><rect x="44" y="3" width="11" height="11" rx="2" fill="#6a6480"/><circle cx="49.5" cy="8.5" r="3.5" fill="none" stroke="#fff" stroke-width="0.8"/><rect x="34" y="22.5" width="21.5" height="21.5" rx="2" fill="#e6e6ee"/><rect x="39.6" y="36.2" width="11.4" height="4" rx="1" fill="#1a78d0"/></g></svg><svg class="abs" style="left:182.0px;top:370.7px;border-radius:3px" width="58" height="46" viewBox="0 0 58 46"><clipPath id="c844425"><rect width="58" height="46" rx="3"/></clipPath><g clip-path="url(#c844425)"><rect width="58" height="46" fill="#1a0a3a"/><circle cx="48" cy="42" r="34" fill="url(#t4g)"/><path d="M14 22Q16 40 40 46" fill="none" stroke="#ff40c0" stroke-width="1.2" opacity="0.8"/><rect x="34" y="22.5" width="21.5" height="21.5" rx="2" fill="#5a1e5e"/></g></svg><svg class="abs" style="left:244.3px;top:370.7px;border-radius:3px" width="58" height="46" viewBox="0 0 58 46"><clipPath id="c906425"><rect width="58" height="46" rx="3"/></clipPath><g clip-path="url(#c906425)"><rect width="58" height="46" fill="#0a0a10"/><path d="M12 30Q22 18 36 28L30 44Z" fill="#f03c78"/><path d="M30 20Q36 2 44 4Q42 20 34 32Z" fill="#f4b040"/><path d="M38 22Q50 12 58 14Q52 26 40 32Z" fill="#e86030"/><path d="M20 10Q28 14 32 26L26 28Z" fill="#e0d0f0" opacity="0.8"/><rect x="34" y="22.5" width="21.5" height="21.5" rx="2" fill="#3a2a34"/><rect x="39.6" y="44" width="11.4" height="4" fill="#d02020"/></g></svg><svg class="abs" style="left:306.8px;top:370.7px;border-radius:3px" width="58" height="46" viewBox="0 0 58 46"><clipPath id="c968425"><rect width="58" height="46" rx="3"/></clipPath><g clip-path="url(#c968425)"><rect width="58" height="46" fill="url(#t6bg)"/><path d="M0 14L20 18L58 26V30H0Z" fill="#4a6a6a"/><path d="M0 24L58 30V34H0Z" fill="#c8dcdc"/><rect y="34" width="58" height="12" fill="#5aa0a8"/><rect x="34" y="22.5" width="21.5" height="21.5" rx="2" fill="#e4eeee"/></g></svg><div class="abs" style="left:396.0px;top:115.0px;width:220px;height:132px;background:#fbfbfb;border-radius:5px;box-shadow:0 0 0 0.5px #e6e6e6"></div><svg class="abs" style="left:407.0px;top:128.0px" width="17" height="11" viewBox="0 0 17 11"><path d="M3.5 10.5Q0.5 10.5 0.5 7.8Q0.5 5.3 3.2 5.2Q4 1 8.5 1Q12.3 1 13.3 4.5Q16.5 4.8 16.5 7.6Q16.5 10.5 13.5 10.5Z" fill="#1070d0"/></svg><div class="abs" style="left:407.5px;top:153.1px;font-size:10px;line-height:1;font-weight:bold;color:#1b1b1b;white-space:nowrap;font-weight:600">Armazenamento na nuvem</div><div class="abs" style="left:407.5px;top:172.9px;font-size:7.15px;line-height:1;font-weight:normal;color:#555;white-space:nowrap;">Certifique-se de que o OneDrive está instalado no seu PC</div><div class="abs" style="left:407.5px;top:183.4px;font-size:7.1px;line-height:1;font-weight:normal;color:#555;white-space:nowrap;">para que possa ver os seus detalhes de armazenamento aqui.</div><div class="abs" style="left:408.0px;top:219.0px;width:74px;height:15.5px;background:#fdfdfd;border-radius:3px;box-shadow:0 0 0 0.6px #dcdcdc,0 0.8px 0 #cfcfcf"></div><div class="abs" style="left:414.0px;top:223.7px;font-size:7.05px;line-height:1;font-weight:normal;color:#1f1f1f;white-space:nowrap;">Instalar o OneDrive</div><div class="abs" style="left:396.0px;top:253.0px;width:220px;height:170px;background:#fbfbfb;border-radius:5px;box-shadow:0 0 0 0.5px #e6e6e6"></div><div class="abs" style="left:407.5px;top:268.2px;font-size:9.7px;line-height:1;font-weight:bold;color:#1b1b1b;white-space:nowrap;font-weight:600">Dispositivos Bluetooth</div><div class="abs" style="left:407.5px;top:287.3px;font-size:7.2px;line-height:1;font-weight:normal;color:#555;white-space:nowrap;">Gerir, adicionar e remover dispositivos</div><div class="abs" style="left:396.0px;top:307.0px;width:220px;height:1px;background:#ececec"></div><div class="abs" style="left:396.0px;top:343.0px;width:220px;height:1px;background:#ececec"></div><div class="abs" style="left:396.0px;top:379.0px;width:220px;height:1px;background:#ececec"></div><svg class="abs" style="left:410.0px;top:320.0px" width="8" height="12" viewBox="0 0 8 12"><path d="M1 3.5L6 8L3.5 10.5V1.5L6 4L1 8.5" fill="none" stroke="#333" stroke-width="0.8"/></svg><div class="abs" style="left:430.0px;top:319.3px;font-size:7.3px;line-height:1;font-weight:normal;color:#1f1f1f;white-space:nowrap;">Bluetooth</div><div class="abs" style="left:430.0px;top:329.4px;font-size:6.0px;line-height:1;font-weight:normal;color:#666;white-space:nowrap;">Detetável como "LAPTOP-08RL3TKB"</div><div class="abs" style="left:545.0px;top:323.4px;font-size:7px;line-height:1;font-weight:normal;color:#1f1f1f;white-space:nowrap;">Ligado</div><div class="abs" style="left:583.0px;top:321.5px;width:21px;height:10px;background:#e0a010;border-radius:5px"></div><div class="abs" style="left:596.5px;top:323.5px;width:6px;height:6px;background:#fff;border-radius:50%"></div><div class="abs" style="left:410.0px;top:355.5px;width:7px;height:11px;background:linear-gradient(90deg,#b8c0c4,#9aa6aa);border-radius:3.5px"></div><div class="abs" style="left:430.0px;top:355.4px;font-size:7px;line-height:1;font-weight:normal;color:#1f1f1f;white-space:nowrap;">Logi POP Mouse</div><div class="abs" style="left:430.0px;top:364.9px;font-size:6.4px;line-height:1;font-weight:normal;color:#666;white-space:nowrap;">Não ligado</div><div class="abs" style="left:589.0px;top:357.5px;font-size:8px;line-height:1;font-weight:bold;color:#222;white-space:nowrap;">···</div><div class="abs" style="left:410.0px;top:391.5px;width:7px;height:11px;background:linear-gradient(90deg,#b8c0c4,#9aa6aa);border-radius:3.5px"></div><div class="abs" style="left:430.0px;top:391.3px;font-size:7.2px;line-height:1;font-weight:normal;color:#1f1f1f;white-space:nowrap;">Bluetooth Travel Mouse</div><div class="abs" style="left:430.0px;top:401.0px;font-size:6.1px;line-height:1;font-weight:normal;color:#666;white-space:nowrap;">Emparelhado</div><div class="abs" style="left:589.0px;top:393.5px;font-size:8px;line-height:1;font-weight:bold;color:#222;white-space:nowrap;">···</div><div class="abs" style="left:627.0px;top:62.0px;width:1.2px;height:240px;background:#8a8a8a"></div></div></div></div>
<div class="abs" style="left:122px;top:686px;width:18px;height:18px;border-radius:50%;background:rgba(40,40,40,.6)"></div>
<div class="abs" style="left:126.5px;top:688.5px;font-size:13px;font-weight:bold;color:#fff">1</div>
<div class="abs" style="left:245.5px;top:675.5px;width:29.5px;height:29.5px;border-radius:50%;background:#e4e3e8;box-shadow:0 1px 4px rgba(0,0,0,.3)"></div>
<svg class="abs" style="left:251px;top:681px" width="19" height="18" viewBox="0 0 19 18"><path d="M2.5 2.3L16.5 15.6M16.5 2.3L2.5 15.6" stroke="#3a4040" stroke-width="2.6"/></svg>
<div class="abs" style="left:280px;top:683px;width:143px;height:82px;border-radius:14px;border:1px solid #dfe1e3;background:#fafbfb;box-shadow:0 1px 3px rgba(0,0,0,.08)"></div>
<svg class="abs" style="left:337px;top:697px" width="27" height="27" viewBox="0 0 27 27"><path d="M13.5 1V26M1 13.5H26" stroke="#3c4043" stroke-width="2.4"/></svg>
<div class="abs" style="left:308.6px;top:733.8px;font-size:18px;line-height:1;font-weight:normal;color:#3c4043;white-space:nowrap;transform:scaleX(0.94);transform-origin:0 0;-webkit-text-stroke:0.5px #3c4043">Add Scene</div>
<div class="abs" style="left:354px;top:721px;width:602px;height:65px;background:rgba(255,255,255,.93);border:1px solid #e4e4e4;box-shadow:0 1px 3px rgba(0,0,0,.10)"></div>
<div class="abs" style="left:367px;top:747px;width:3px;height:13px;background:#cfcfcf"></div>
<div class="abs" style="left:372px;top:747px;width:3px;height:13px;background:#cfcfcf"></div>
<div class="abs" style="left:386.3px;top:746.3px;font-size:15.00px;line-height:1;font-weight:normal;color:#1f1f1f;white-space:nowrap;transform:scaleX(0.98);transform-origin:0 0;">camtasia.techsmith.com está a partilhar uma janela.</div>
<div class="abs" style="left:740px;top:729px;width:140px;height:48px;border-radius:24px;background:#175bd1"></div>
<div class="abs" style="left:759.5px;top:745.5px;font-size:16.00px;line-height:1;font-weight:bold;color:#fff;white-space:nowrap;transform:scaleX(0.96);transform-origin:0 0;">Parar partilha</div>
<div class="abs" style="left:891.4px;top:745.6px;font-size:15.50px;line-height:1;font-weight:normal;color:#175bd1;white-space:nowrap;transform:scaleX(0.97);transform-origin:0 0;text-decoration:underline;text-underline-offset:1px">Ocultar</div>
<div class="abs" style="left:1167px;top:628px;width:182px;height:52px;border-radius:26px;background:#4b5bfc;box-shadow:0 3px 10px rgba(0,0,0,.15)"></div>
<svg class="abs" style="left:1184px;top:640px" width="30" height="28" viewBox="0 0 30 28"><path d="M22 6.5A10.5 10.5 0 1 0 24.5 14" fill="none" stroke="#fff" stroke-width="3"/><path d="M8 13L13 18L25 5" fill="none" stroke="#fff" stroke-width="3.2" stroke-linejoin="round"/></svg>
<div class="abs" style="left:1219.5px;top:642.2px;font-size:20.60px;line-height:1;font-weight:bold;color:#fff;white-space:nowrap;transform:scaleX(0.975);transform-origin:0 0;">Get Started</div>
<div class="abs" style="left:1332px;top:620px;width:25px;height:25px;border-radius:50%;background:#fff;box-shadow:0 1px 3px rgba(0,0,0,.15)"></div>
<div class="abs" style="left:1332px;top:625px;width:25px;text-align:center;font-size:15px;font-weight:bold;color:#4b5bfc;-webkit-text-stroke:0.8px #4b5bfc">2</div>
</body></html>
